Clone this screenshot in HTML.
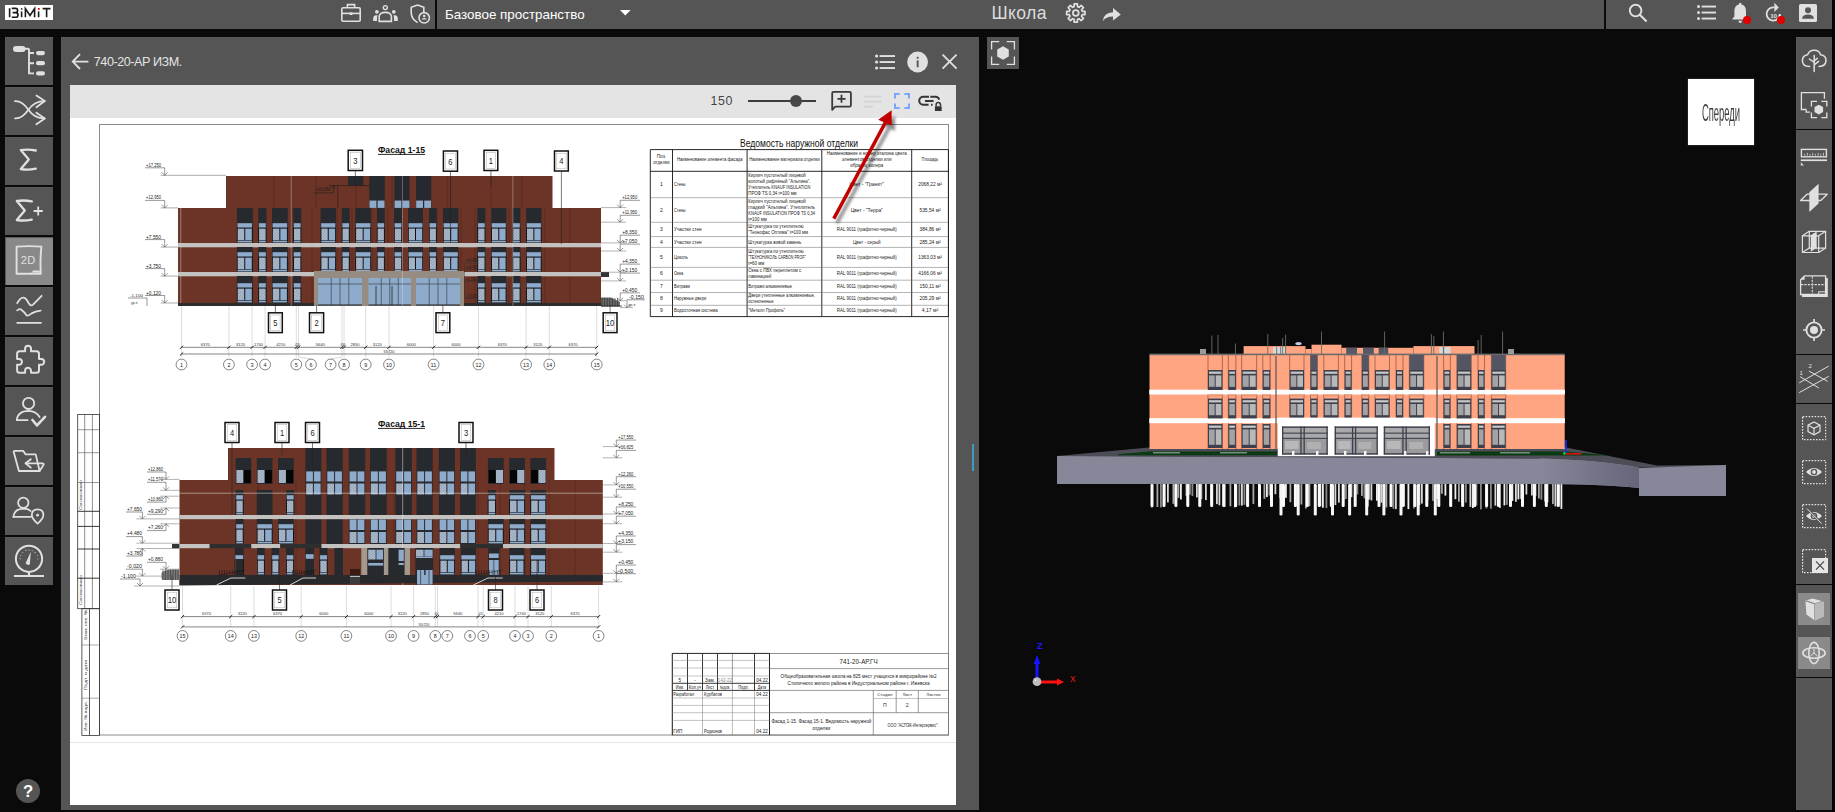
<!DOCTYPE html><html><head><meta charset="utf-8"><title>BIMIT</title><style>
*{margin:0;padding:0;box-sizing:border-box}
html,body{width:1835px;height:812px;overflow:hidden;background:#0a0a0a;font-family:"Liberation Sans",sans-serif}
.a{position:absolute}
.btn{position:absolute;left:5px;width:48px;height:48px;background:#555;box-shadow:inset 1px 1px 0 #5a5a5a}
svg.i{position:absolute;overflow:visible}
.t{position:absolute;white-space:nowrap;line-height:1}
</style></head><body><div class="a" style="left:0;top:0;width:1832px;height:29px;background:#555"></div><div class="a" style="left:1832px;top:0;width:3px;height:812px;background:#000"></div><div class="a" style="left:5px;top:5px;width:48px;height:15px;background:#fff"></div><svg class="i" style="left:5px;top:5px" width="48" height="15" viewBox="0 0 48 15" ><g fill="none" stroke="#1a1a1a" stroke-width="1.6" stroke-linecap="butt">
<path d="M4.6 3.2V12.2"/>
<path d="M6.8 3.4H10.6Q12.6 3.4 12.6 5.5Q12.6 7.6 10.4 7.6H7.6M7.6 7.6H10.8Q13 7.6 13 9.9Q13 12.2 10.8 12.2H6.8"/>
<path d="M16.6 6.4V12.2"/>
<path d="M20.4 12.2V3.6L25 10.5L29.6 3.6V12.2"/>
<path d="M33.6 6.4V12.2"/>
<path d="M37.6 3.6H45.5M41.6 3.6V12.2"/>
</g><rect x="15.9" y="3.2" width="1.5" height="1.5" fill="#1a1a1a"/><rect x="32.9" y="3" width="1.8" height="1.8" fill="#e00"/></svg><svg class="i" style="left:341px;top:3px" width="20" height="19" viewBox="0 0 20 19" ><g fill="none" stroke="#e0e0e0" stroke-width="1.6">
<rect x="0.8" y="4.8" width="18.4" height="13.4" rx="1.2"/><path d="M6.4 4.8V1.6H13.6V4.8"/><path d="M0.8 10.4H19.2"/></g>
<rect x="8.6" y="9.4" width="2.8" height="2.6" fill="#e0e0e0"/></svg><svg class="i" style="left:373px;top:5px" width="25" height="17" viewBox="0 0 25 17" ><g fill="#e0e0e0">
<circle cx="12.3" cy="2.6" r="2" fill="none" stroke="#e0e0e0" stroke-width="1.4"/>
<circle cx="3.9" cy="6.8" r="1.9"/><circle cx="20.8" cy="6.8" r="1.9"/>
<path d="M0.2 16V13.2Q0.4 10.4 3.2 10.2H4.6Q4 11.6 4 13.4V16Z"/>
<path d="M24.8 16V13.2Q24.6 10.4 21.8 10.2H20.4Q21 11.6 21 13.4V16Z"/>
<path d="M6.2 16.4V11.4Q6.8 7.4 12.3 7.4Q17.8 7.4 18.4 11.4V16.4Z" fill="none" stroke="#e0e0e0" stroke-width="1.6"/>
</g></svg><svg class="i" style="left:410px;top:4px" width="22" height="21" viewBox="0 0 22 21" ><g fill="none" stroke="#e0e0e0" stroke-width="1.6">
<path d="M7.6 0.9L13.8 3.2V8M7.6 0.9L1.2 3.2V8.6Q1.2 15 7.6 18.6"/>
<circle cx="14.2" cy="13.8" r="5.2"/></g>
<circle cx="14.2" cy="12" r="1.3" fill="#e0e0e0"/><path d="M11.6 15.6Q11.8 14 14.2 14Q16.6 14 16.8 15.6Z" fill="#e0e0e0"/></svg><div class="a" style="left:435px;top:0;width:2px;height:29px;background:#0a0a0a"></div><div class="t" style="left:445px;top:8px;font-size:13.4px;color:#fff">Базовое пространство</div><svg class="i" style="left:620px;top:10px" width="11" height="6" viewBox="0 0 11 6" ><path d="M0 0H10.6L5.3 5.6Z" fill="#fff"/></svg><div class="t" style="left:991.5px;top:5px;font-size:17.6px;letter-spacing:0.4px;color:#dcdcdc">Школа</div><svg class="i" style="left:1065px;top:3px" width="22" height="21" viewBox="0 0 22 21" ><path d="M17.17 8.28 L19.96 8.37 L19.96 11.63 L17.17 11.72 L16.52 13.29 L18.43 15.32 L16.12 17.63 L14.09 15.72 L12.52 16.37 L12.43 19.16 L9.17 19.16 L9.08 16.37 L7.51 15.72 L5.48 17.63 L3.17 15.32 L5.08 13.29 L4.43 11.72 L1.64 11.63 L1.64 8.37 L4.43 8.28 L5.08 6.71 L3.17 4.68 L5.48 2.37 L7.51 4.28 L9.08 3.63 L9.17 0.84 L12.43 0.84 L12.52 3.63 L14.09 4.28 L16.12 2.37 L18.43 4.68 L16.52 6.71Z" fill="none" stroke="#e0e0e0" stroke-width="1.7" stroke-linejoin="round"/><circle cx="10.8" cy="10" r="2.9" fill="none" stroke="#e0e0e0" stroke-width="1.7"/></svg><svg class="i" style="left:1102px;top:5px" width="20" height="17" viewBox="0 0 20 17" ><path d="M0.6 16.2Q1.6 7.6 11 7.2V3L18.8 9.6L11 15.6V11.6Q4.2 11.4 0.6 16.2Z" fill="#e0e0e0"/></svg><div class="a" style="left:1604px;top:0;width:2px;height:29px;background:#0a0a0a"></div><svg class="i" style="left:1628px;top:3px" width="20" height="20" viewBox="0 0 20 20" ><circle cx="7.6" cy="7.6" r="5.8" fill="none" stroke="#e0e0e0" stroke-width="1.9"/><path d="M11.8 11.8L18.6 18.6" stroke="#e0e0e0" stroke-width="2.1"/></svg><svg class="i" style="left:1697px;top:5px" width="20" height="16" viewBox="0 0 20 16" ><g fill="#e0e0e0"><circle cx="1.5" cy="1.5" r="1.5"/><circle cx="1.5" cy="7.5" r="1.5"/><circle cx="1.5" cy="13.5" r="1.5"/><rect x="4.6" y="0.6" width="14.4" height="1.9"/><rect x="4.6" y="6.6" width="14.4" height="1.9"/><rect x="4.6" y="12.6" width="14.4" height="1.9"/></g></svg><svg class="i" style="left:1731.7px;top:2px" width="17" height="22" viewBox="0 0 17 22" ><path d="M8.2 0.8Q9.6 0.8 9.6 2.4Q14 3.6 14 9.2V14.6L16 16.8V17.6H0.4V16.8L2.4 14.6V9.2Q2.4 3.6 6.8 2.4Q6.8 0.8 8.2 0.8Z" fill="#e0e0e0"/><path d="M6.4 18.8Q6.6 21 8.2 21Q9.8 21 10 18.8Z" fill="#e0e0e0"/></svg><svg class="i" style="left:1743px;top:16px" width="9" height="9" viewBox="0 0 9 9" ><circle cx="4" cy="4" r="4" fill="#e00000"/></svg><svg class="i" style="left:1765px;top:2px" width="17" height="21" viewBox="0 0 17 21" ><path d="M9.6 5.4H8.2A6.6 6.6 0 1 0 14.8 12" fill="none" stroke="#e0e0e0" stroke-width="1.8"/><path d="M9.4 0.8L13.8 5.4L9.4 10Z" fill="#e0e0e0"/><text x="8.6" y="15.8" font-size="6.2" font-weight="bold" font-family="Liberation Sans" fill="#e0e0e0" text-anchor="middle">10</text><rect x="14" y="12.6" width="1.6" height="1.6" fill="#fff"/></svg><svg class="i" style="left:1777px;top:16px" width="9" height="9" viewBox="0 0 9 9" ><circle cx="4" cy="4" r="4" fill="#e00000"/></svg><svg class="i" style="left:1799px;top:4px" width="18" height="18" viewBox="0 0 18 18" ><rect x="0" y="0" width="18" height="18" rx="1.6" fill="#e0e0e0"/><circle cx="9" cy="6.2" r="3" fill="#555"/><path d="M3 14.8Q3.6 10.6 9 10.6Q14.4 10.6 15 14.8Z" fill="#555"/></svg><div class="btn" style="top:37px;background:#555"></div><svg class="i" style="left:5px;top:37px" width="48" height="48" viewBox="0 0 48 48" ><rect x="8" y="9" width="12.5" height="6" rx="3" fill="#e0e0e0"/>
<path d="M20 11.8H23Q24 11.8 24 13V36.4H29M24 16H29M24 26.2H29" fill="none" stroke="#e0e0e0" stroke-width="1.9"/>
<rect x="31" y="14" width="9" height="4.2" rx="2.1" fill="#e0e0e0"/><rect x="31" y="24.1" width="9" height="4.2" rx="2.1" fill="#e0e0e0"/><rect x="31" y="34.3" width="9" height="4.2" rx="2.1" fill="#e0e0e0"/></svg><div class="btn" style="top:87px;background:#555"></div><svg class="i" style="left:5px;top:87px" width="48" height="48" viewBox="0 0 48 48" ><g fill="none" stroke="#e0e0e0" stroke-width="1.8" stroke-linecap="round" stroke-linejoin="round"><path d="M10 14.1Q17 13.6 23.4 22.7Q29.6 31.6 39.6 31.4"/><path d="M10 31.4Q17 31.8 23.4 22.7Q29.6 14 39.6 14.1"/>
<path d="M31.4 8.6L39.8 14.1L31.4 20.2"/><path d="M31.4 25.8L39.8 31.4L31.4 37.2"/></g></svg><div class="btn" style="top:137px;background:#555"></div><svg class="i" style="left:5px;top:137px" width="48" height="48" viewBox="0 0 48 48" ><path d="M30.799999999999997 13.5Q23.0 11.9 15.799999999999999 13.100000000000001L23.78 22.6L15.799999999999999 32.10000000000001Q23.0 33.300000000000004 30.799999999999997 31.700000000000006" fill="none" stroke="#e0e0e0" stroke-width="2.3" stroke-linejoin="round" stroke-linecap="round"/></svg><div class="btn" style="top:187px;background:#555"></div><svg class="i" style="left:5px;top:187px" width="48" height="48" viewBox="0 0 48 48" ><path d="M26.799999999999997 14.399999999999999Q19.0 12.799999999999999 11.799999999999999 14.0L19.78 23.5L11.799999999999999 33.0Q19.0 34.199999999999996 26.799999999999997 32.599999999999994" fill="none" stroke="#e0e0e0" stroke-width="2.3" stroke-linejoin="round" stroke-linecap="round"/><path d="M33.2 19.4V28.6M28.6 24H37.8" stroke="#e0e0e0" stroke-width="1.8"/></svg><div class="btn" style="top:237px;background:#898989"></div><svg class="i" style="left:5px;top:237px" width="48" height="48" viewBox="0 0 48 48" ><path d="M11.6 9.6Q24 8.6 36.4 9.6Q35 22 35.8 36.8H11.6Z" fill="none" stroke="#e0e0e0" stroke-width="1.9" stroke-linejoin="round"/>
<path d="M26 35.6L28.4 33.4H34.8V35.8Z" fill="#e0e0e0"/>
<text x="23.2" y="26.6" font-size="11" font-family="Liberation Sans" fill="#e0e0e0" text-anchor="middle" letter-spacing="0.4">2D</text></svg><div class="btn" style="top:287px;background:#555"></div><svg class="i" style="left:5px;top:287px" width="48" height="48" viewBox="0 0 48 48" ><g fill="none" stroke="#e0e0e0" stroke-width="1.8" stroke-linecap="round" stroke-linejoin="round"><path d="M12.2 16.2Q15.4 10.2 18.6 10.6Q21.2 11 23.6 16Q25.6 19.6 28 17.6Q32 13.6 36.6 8.8"/>
<path d="M12.2 23.4Q14.2 21.4 16 22.4Q19.6 25 21.6 28.4Q23.4 29.2 26.6 26.4Q30.4 24.2 35.6 23.6"/><path d="M12.2 35.8H36"/></g></svg><div class="btn" style="top:337px;background:#555"></div><svg class="i" style="left:5px;top:337px" width="48" height="48" viewBox="0 0 48 48" ><path d="M14.6 14.2H20.1V11.6A2.95 2.95 0 0 1 26 11.6V14.2H31.5Q34 14.2 34 16.7V21.9H36.2A2.95 2.95 0 0 1 36.2 27.8H34V33.3Q34 35.8 31.5 35.8H26V33.8A2.95 2.95 0 0 0 20.1 33.8V35.8H14.6Q12.1 35.8 12.1 33.3V27.8H14A2.95 2.95 0 0 0 14 21.9H12.1V16.7Q12.1 14.2 14.6 14.2Z" fill="none" stroke="#e0e0e0" stroke-width="2" stroke-linejoin="round"/></svg><div class="btn" style="top:387px;background:#555"></div><svg class="i" style="left:5px;top:387px" width="48" height="48" viewBox="0 0 48 48" ><g fill="none" stroke="#e0e0e0" stroke-width="1.8" stroke-linecap="round" stroke-linejoin="round"><circle cx="23.6" cy="16.4" r="5.6"/><path d="M11.8 33.2Q12.6 24 23.6 23.8Q31 24 34.6 30"/><path d="M11.8 33.2H22.6"/></g>
<path d="M27.4 33L32 38.4L40 29.8" fill="none" stroke="#e0e0e0" stroke-width="2.6" stroke-linecap="round" stroke-linejoin="round"/></svg><div class="btn" style="top:437px;background:#555"></div><svg class="i" style="left:5px;top:437px" width="48" height="48" viewBox="0 0 48 48" ><g fill="none" stroke="#e0e0e0" stroke-width="1.8" stroke-linecap="round" stroke-linejoin="round"><path d="M8.6 14.6Q8.6 13.9 9.8 13.9H18.3L20.7 17.4H30.7L34.6 34H13.9Z"/><path d="M20.6 26.3H37.6Q39.4 26.6 38.4 28L34.6 34"/><path d="M25.8 22.2L20.6 26.3L25.8 30.6"/></g></svg><div class="btn" style="top:487px;background:#555"></div><svg class="i" style="left:5px;top:487px" width="48" height="48" viewBox="0 0 48 48" ><g fill="none" stroke="#e0e0e0" stroke-width="1.8" stroke-linecap="round" stroke-linejoin="round"><circle cx="18.3" cy="15.8" r="5.2"/><path d="M8.4 29.8Q9.4 21.8 18.3 21.6Q23.4 21.6 25.6 24"/><path d="M8.4 29.8H26"/>
<path d="M32.6 36.6Q26.8 31.6 26.8 28Q26.8 22.4 32.6 22.4Q38.4 22.4 38.4 28Q38.4 31.6 32.6 36.6Z"/></g><circle cx="32.6" cy="28.2" r="1.4" fill="#e0e0e0"/></svg><div class="btn" style="top:537px;background:#555"></div><svg class="i" style="left:5px;top:537px" width="48" height="48" viewBox="0 0 48 48" ><circle cx="24" cy="21.8" r="13.1" fill="none" stroke="#e0e0e0" stroke-width="2"/>
<path d="M20.6 26.2L25.8 14.8L24.8 27.4Q22.6 28.8 20.6 26.2Z" fill="#e0e0e0"/>
<g stroke="#e0e0e0" stroke-width="1.2"><path d="M14.8 22L15.4 21.6M15.6 18.6L16.2 18.8M17.6 15.4L18 15.8M20.6 13.4L21.4 13.2M24 12.8V13.6M27.4 13.4L27 13.8M30.2 15.2L29.8 15.8M32.4 18.4L32 18.6M33.2 22L32.6 21.8"/></g>
<path d="M24 35V39M9 39H39" stroke="#e0e0e0" stroke-width="2.2"/></svg><svg class="i" style="left:16px;top:779px" width="24" height="24" viewBox="0 0 24 24" ><circle cx="12" cy="12" r="12" fill="#555"/><text x="12.2" y="17.9" font-size="16.8" font-weight="bold" font-family="Liberation Sans" fill="#fff" text-anchor="middle">?</text></svg><div class="a" style="left:61px;top:37px;width:918px;height:773px;background:#555;box-shadow:inset 1px 1px 0 #5a5a5a"></div><svg class="i" style="left:71px;top:53px" width="18" height="18" viewBox="0 0 18 18" ><path d="M17.4 8.6H2.6M9 1.2L1.8 8.6L9 16" fill="none" stroke="#e0e0e0" stroke-width="1.9"/></svg><div class="t" style="left:93.8px;top:55.6px;font-size:12.6px;letter-spacing:-0.45px;color:#e4e4e4">740-20-АР ИЗМ.</div><svg class="i" style="left:875px;top:54px" width="21" height="16" viewBox="0 0 21 16" ><g fill="#e0e0e0"><circle cx="1.6" cy="2" r="1.6"/><circle cx="1.6" cy="8" r="1.6"/><circle cx="1.6" cy="14" r="1.6"/><rect x="4.6" y="1.1" width="15.4" height="1.9"/><rect x="4.6" y="7.1" width="15.4" height="1.9"/><rect x="4.6" y="13.1" width="15.4" height="1.9"/></g></svg><svg class="i" style="left:907px;top:51px" width="22" height="22" viewBox="0 0 22 22" ><circle cx="10.6" cy="11" r="10.4" fill="#e0e0e0"/><rect x="9.7" y="9.4" width="1.9" height="6.8" fill="#555"/><rect x="9.7" y="5.8" width="1.9" height="1.9" fill="#555"/></svg><svg class="i" style="left:942px;top:54px" width="16" height="16" viewBox="0 0 16 16" ><path d="M0.6 0.6L14.6 14.6M14.6 0.6L0.6 14.6" stroke="#e0e0e0" stroke-width="1.8"/></svg><div class="a" style="left:70px;top:85px;width:886px;height:33px;background:#e4e4e4"></div><div class="t" style="left:710.6px;top:94.8px;font-size:12.4px;color:#444;letter-spacing:0.6px">150</div><div class="a" style="left:748px;top:100px;width:68px;height:2px;background:#3c3c3c"></div><div class="a" style="left:790px;top:95px;width:12px;height:12px;border-radius:6px;background:#484848"></div><svg class="i" style="left:830px;top:90px" width="24" height="22" viewBox="0 0 24 22" ><path d="M2.2 16.6V3.2Q2.2 1.9 3.5 1.9H19.6Q20.9 1.9 20.9 3.2V15.3Q20.9 16.6 19.6 16.6H5.2L2.2 19.8Z" fill="none" stroke="#3a3a3a" stroke-width="1.8" stroke-linejoin="round"/><path d="M11.5 4.8V12.8M7.4 8.8H15.6" stroke="#3a3a3a" stroke-width="1.8"/></svg><svg class="i" style="left:863px;top:95px" width="21" height="12" viewBox="0 0 21 12" ><g fill="#d2d2d2"><rect x="1" y="0.8" width="18" height="1.6"/><rect x="1" y="5.8" width="18" height="1.6"/><rect x="1" y="10.8" width="9" height="1.6"/></g></svg><svg class="i" style="left:893px;top:92px" width="18" height="18" viewBox="0 0 18 18" ><path d="M2 6.6V1.9H6.6M11.4 1.9H16V6.6M16 11.4V16H11.4M6.6 16H2V11.4" fill="none" stroke="#78a6f8" stroke-width="2"/></svg><svg class="i" style="left:918px;top:94px" width="25" height="18" viewBox="0 0 25 18" ><g fill="none" stroke="#363636" stroke-width="2"><path d="M11 2.8H5.2A3.95 3.95 0 0 0 5.2 10.7H10.6"/><path d="M7 7H15.6"/><path d="M12.3 2.8H17.2A3.95 3.95 0 0 1 21.2 5.6"/><path d="M13 10.7H14.6"/><path d="M18.1 12.3V10.8A2.2 2.2 0 0 1 22.5 10.8V12.3" stroke-width="1.5"/></g><rect x="16.9" y="12.2" width="6.8" height="4.8" rx="0.6" fill="#363636"/></svg><div class="a" style="left:70px;top:118px;width:886px;height:687px;background:#fff"></div><div class="a" style="left:70px;top:742px;width:886px;height:1px;background:#e6e6e6"></div><div class="a" style="left:972px;top:444px;width:2px;height:27px;background:#3d9cc2"></div><svg class="i" style="left:70px;top:118px" width="886" height="687" viewBox="70 118 886 687" font-family="Liberation Sans"><defs><filter id="blur"><feGaussianBlur stdDeviation="1.5"/></filter><pattern id="spk" width="3" height="3" patternUnits="userSpaceOnUse"><rect width="3" height="3" fill="#a9b9cc"/><rect x="0.4" y="0.6" width="0.9" height="0.8" fill="#6d7a8a"/><rect x="1.9" y="2" width="0.8" height="0.7" fill="#7d8a9a"/></pattern></defs><rect x="99.50" y="124.50" width="849.00" height="610.50" fill="none" stroke="#8a8a8a" stroke-width="1"/><rect x="77.70" y="414.50" width="21.80" height="194.20" fill="none" stroke="#333" stroke-width="0.8"/><line x1="84.70" y1="414.50" x2="84.70" y2="608.70" stroke="#444" stroke-width="0.6" /><line x1="92.40" y1="414.50" x2="92.40" y2="608.70" stroke="#444" stroke-width="0.6" /><line x1="77.70" y1="429.70" x2="99.50" y2="429.70" stroke="#555" stroke-width="0.6" /><line x1="77.70" y1="452.70" x2="99.50" y2="452.70" stroke="#555" stroke-width="0.6" /><line x1="77.70" y1="482.50" x2="99.50" y2="482.50" stroke="#555" stroke-width="0.6" /><line x1="77.70" y1="511.30" x2="99.50" y2="511.30" stroke="#222" stroke-width="0.9" /><line x1="77.70" y1="526.40" x2="99.50" y2="526.40" stroke="#222" stroke-width="0.9" /><line x1="77.70" y1="549.00" x2="99.50" y2="549.00" stroke="#222" stroke-width="0.9" /><line x1="77.70" y1="578.20" x2="99.50" y2="578.20" stroke="#222" stroke-width="0.9" /><rect x="81.90" y="608.70" width="17.60" height="126.70" fill="none" stroke="#333" stroke-width="0.8"/><line x1="89.50" y1="608.70" x2="89.50" y2="735.40" stroke="#333" stroke-width="0.8" /><line x1="81.90" y1="645.00" x2="99.50" y2="645.00" stroke="#555" stroke-width="0.5" /><line x1="81.90" y1="698.20" x2="99.50" y2="698.20" stroke="#555" stroke-width="0.5" /><text x="82.40" y="510.00" font-size="4.2" fill="#333" text-anchor="start" transform="rotate(-90 82.4 510)" textLength="30" lengthAdjust="spacingAndGlyphs">Согласовано</text><text x="82.40" y="605.00" font-size="4.2" fill="#333" text-anchor="start" transform="rotate(-90 82.4 605)" textLength="30" lengthAdjust="spacingAndGlyphs">Согласовано</text><text x="87.00" y="640.00" font-size="4.2" fill="#333" text-anchor="start" transform="rotate(-90 87 640)" textLength="30" lengthAdjust="spacingAndGlyphs">Взам. инв. №</text><text x="87.00" y="690.00" font-size="4.2" fill="#333" text-anchor="start" transform="rotate(-90 87 690)" textLength="30" lengthAdjust="spacingAndGlyphs">Подп. и дата</text><text x="87.00" y="731.00" font-size="4.2" fill="#333" text-anchor="start" transform="rotate(-90 87 731)" textLength="30" lengthAdjust="spacingAndGlyphs">Инв. № подл.</text><rect x="226.00" y="176.00" width="326.50" height="32.00" fill="#6b3426" /><rect x="178.00" y="208.00" width="423.00" height="98.00" fill="#6b3426" /><line x1="252.60" y1="208.00" x2="252.60" y2="303.00" stroke="#4a2218" stroke-width="0.5" /><line x1="265.70" y1="208.00" x2="265.70" y2="303.00" stroke="#4a2218" stroke-width="0.5" /><line x1="291.00" y1="208.00" x2="291.00" y2="303.00" stroke="#4a2218" stroke-width="0.5" /><line x1="299.00" y1="208.00" x2="299.00" y2="303.00" stroke="#4a2218" stroke-width="0.5" /><line x1="312.00" y1="208.00" x2="312.00" y2="303.00" stroke="#4a2218" stroke-width="0.5" /><line x1="337.00" y1="208.00" x2="337.00" y2="303.00" stroke="#4a2218" stroke-width="0.5" /><line x1="352.00" y1="208.00" x2="352.00" y2="303.00" stroke="#4a2218" stroke-width="0.5" /><line x1="372.00" y1="208.00" x2="372.00" y2="303.00" stroke="#4a2218" stroke-width="0.5" /><line x1="388.00" y1="208.00" x2="388.00" y2="303.00" stroke="#4a2218" stroke-width="0.5" /><line x1="437.00" y1="208.00" x2="437.00" y2="303.00" stroke="#4a2218" stroke-width="0.5" /><line x1="461.00" y1="208.00" x2="461.00" y2="303.00" stroke="#4a2218" stroke-width="0.5" /><line x1="475.00" y1="208.00" x2="475.00" y2="303.00" stroke="#4a2218" stroke-width="0.5" /><line x1="509.00" y1="208.00" x2="509.00" y2="303.00" stroke="#4a2218" stroke-width="0.5" /><line x1="545.00" y1="208.00" x2="545.00" y2="303.00" stroke="#4a2218" stroke-width="0.5" /><line x1="570.00" y1="208.00" x2="570.00" y2="303.00" stroke="#4a2218" stroke-width="0.5" /><line x1="274.00" y1="176.00" x2="274.00" y2="208.00" stroke="#4a2218" stroke-width="0.5" /><line x1="316.00" y1="176.00" x2="316.00" y2="208.00" stroke="#4a2218" stroke-width="0.5" /><line x1="356.00" y1="176.00" x2="356.00" y2="208.00" stroke="#4a2218" stroke-width="0.5" /><line x1="392.00" y1="176.00" x2="392.00" y2="208.00" stroke="#4a2218" stroke-width="0.5" /><line x1="447.00" y1="176.00" x2="447.00" y2="208.00" stroke="#4a2218" stroke-width="0.5" /><line x1="491.00" y1="176.00" x2="491.00" y2="208.00" stroke="#4a2218" stroke-width="0.5" /><line x1="522.00" y1="176.00" x2="522.00" y2="208.00" stroke="#4a2218" stroke-width="0.5" /><rect x="348.00" y="176.00" width="15.30" height="9.30" fill="#26292d" /><rect x="369.30" y="176.00" width="15.40" height="24.50" fill="#26292d" /><rect x="369.30" y="200.50" width="15.40" height="7.60" fill="#26292d" /><rect x="369.50" y="200.60" width="6.90" height="7.30" fill="#8eabcc" /><rect x="377.60" y="200.60" width="6.90" height="7.30" fill="#8eabcc" /><rect x="394.40" y="176.00" width="15.20" height="24.50" fill="#26292d" /><rect x="394.40" y="200.50" width="15.20" height="7.60" fill="#26292d" /><rect x="394.60" y="200.60" width="6.80" height="7.30" fill="#8eabcc" /><rect x="402.60" y="200.60" width="6.80" height="7.30" fill="#8eabcc" /><rect x="416.00" y="176.00" width="15.20" height="24.50" fill="#26292d" /><rect x="416.00" y="200.50" width="15.20" height="7.60" fill="#26292d" /><rect x="416.20" y="200.60" width="6.80" height="7.30" fill="#8eabcc" /><rect x="424.20" y="200.60" width="6.80" height="7.30" fill="#8eabcc" /><line x1="329.40" y1="185.60" x2="369.80" y2="185.60" stroke="#1a1a1a" stroke-width="0.6" /><line x1="333.60" y1="185.60" x2="333.60" y2="192.90" stroke="#1a1a1a" stroke-width="0.5" /><line x1="314.10" y1="192.90" x2="333.60" y2="192.90" stroke="#1a1a1a" stroke-width="0.5" /><path d="M331.6 188.4L333.6 185.6L335.6 188.4" fill="none" stroke="#1a1a1a" stroke-width="0.5"/><line x1="337.80" y1="185.60" x2="337.80" y2="208.00" stroke="#2a150f" stroke-width="0.6" /><text x="315.50" y="191.30" font-size="4.6" fill="#1a1a1a" text-anchor="start" textLength="15" lengthAdjust="spacingAndGlyphs">+16,950</text><line x1="180.80" y1="208.00" x2="180.80" y2="306.00" stroke="#a08a84" stroke-width="0.9" /><rect x="178.00" y="243.00" width="423.00" height="4.30" fill="#c3c2c0" /><rect x="178.00" y="272.00" width="136.00" height="4.30" fill="#c3c2c0" /><rect x="464.00" y="272.00" width="137.00" height="4.30" fill="#c3c2c0" /><rect x="601.00" y="272.00" width="8.00" height="5.00" fill="#333" /><rect x="178.00" y="303.00" width="423.00" height="3.00" fill="#2c2c2c" /><rect x="236.90" y="208.00" width="15.70" height="35.00" fill="#26292d" /><rect x="236.90" y="227.50" width="15.70" height="15.50" fill="#101214" /><rect x="237.50" y="223.20" width="14.50" height="4.30" fill="#8eabcc" /><rect x="237.50" y="240.70" width="14.50" height="1.80" fill="#8eabcc" /><rect x="237.70" y="228.60" width="6.55" height="11.60" fill="url(#spk)" /><rect x="245.25" y="228.60" width="6.55" height="11.60" fill="#8eabcc" /><rect x="258.30" y="208.00" width="8.10" height="35.00" fill="#26292d" /><rect x="258.30" y="227.50" width="8.10" height="15.50" fill="#101214" /><rect x="258.90" y="223.20" width="6.90" height="4.30" fill="#8eabcc" /><rect x="258.90" y="240.70" width="6.90" height="1.80" fill="#8eabcc" /><rect x="259.10" y="228.60" width="6.50" height="11.60" fill="url(#spk)" /><rect x="272.00" y="208.00" width="15.70" height="35.00" fill="#26292d" /><rect x="272.00" y="227.50" width="15.70" height="15.50" fill="#101214" /><rect x="272.60" y="223.20" width="14.50" height="4.30" fill="#8eabcc" /><rect x="272.60" y="240.70" width="14.50" height="1.80" fill="#8eabcc" /><rect x="272.80" y="228.60" width="6.55" height="11.60" fill="url(#spk)" /><rect x="280.35" y="228.60" width="6.55" height="11.60" fill="#8eabcc" /><rect x="293.20" y="208.00" width="8.00" height="35.00" fill="#26292d" /><rect x="293.20" y="227.50" width="8.00" height="15.50" fill="#101214" /><rect x="293.80" y="223.20" width="6.80" height="4.30" fill="#8eabcc" /><rect x="293.80" y="240.70" width="6.80" height="1.80" fill="#8eabcc" /><rect x="294.00" y="228.60" width="6.40" height="11.60" fill="url(#spk)" /><rect x="320.60" y="208.00" width="15.30" height="35.00" fill="#26292d" /><rect x="320.60" y="227.50" width="15.30" height="15.50" fill="#101214" /><rect x="321.20" y="223.20" width="14.10" height="4.30" fill="#8eabcc" /><rect x="321.20" y="240.70" width="14.10" height="1.80" fill="#8eabcc" /><rect x="321.40" y="228.60" width="6.35" height="11.60" fill="url(#spk)" /><rect x="328.75" y="228.60" width="6.35" height="11.60" fill="#8eabcc" /><rect x="341.80" y="208.00" width="7.80" height="35.00" fill="#26292d" /><rect x="341.80" y="227.50" width="7.80" height="15.50" fill="#101214" /><rect x="342.40" y="223.20" width="6.60" height="4.30" fill="#8eabcc" /><rect x="342.40" y="240.70" width="6.60" height="1.80" fill="#8eabcc" /><rect x="342.60" y="228.60" width="6.20" height="11.60" fill="url(#spk)" /><rect x="355.30" y="208.00" width="15.70" height="35.00" fill="#26292d" /><rect x="355.30" y="227.50" width="15.70" height="15.50" fill="#101214" /><rect x="355.90" y="223.20" width="14.50" height="4.30" fill="#8eabcc" /><rect x="355.90" y="240.70" width="14.50" height="1.80" fill="#8eabcc" /><rect x="356.10" y="228.60" width="6.55" height="11.60" fill="url(#spk)" /><rect x="363.65" y="228.60" width="6.55" height="11.60" fill="#8eabcc" /><rect x="376.90" y="208.00" width="7.80" height="35.00" fill="#26292d" /><rect x="376.90" y="227.50" width="7.80" height="15.50" fill="#101214" /><rect x="377.50" y="223.20" width="6.60" height="4.30" fill="#8eabcc" /><rect x="377.50" y="240.70" width="6.60" height="1.80" fill="#8eabcc" /><rect x="377.70" y="228.60" width="6.20" height="11.60" fill="url(#spk)" /><rect x="394.00" y="208.00" width="8.00" height="35.00" fill="#26292d" /><rect x="394.00" y="227.50" width="8.00" height="15.50" fill="#101214" /><rect x="394.60" y="223.20" width="6.80" height="4.30" fill="#8eabcc" /><rect x="394.60" y="240.70" width="6.80" height="1.80" fill="#8eabcc" /><rect x="394.80" y="228.60" width="6.40" height="11.60" fill="url(#spk)" /><rect x="408.00" y="208.00" width="15.00" height="35.00" fill="#26292d" /><rect x="408.00" y="227.50" width="15.00" height="15.50" fill="#101214" /><rect x="408.60" y="223.20" width="13.80" height="4.30" fill="#8eabcc" /><rect x="408.60" y="240.70" width="13.80" height="1.80" fill="#8eabcc" /><rect x="408.80" y="228.60" width="6.20" height="11.60" fill="url(#spk)" /><rect x="416.00" y="228.60" width="6.20" height="11.60" fill="#8eabcc" /><rect x="429.00" y="208.00" width="7.70" height="35.00" fill="#26292d" /><rect x="429.00" y="227.50" width="7.70" height="15.50" fill="#101214" /><rect x="429.60" y="223.20" width="6.50" height="4.30" fill="#8eabcc" /><rect x="429.60" y="240.70" width="6.50" height="1.80" fill="#8eabcc" /><rect x="429.80" y="228.60" width="6.10" height="11.60" fill="url(#spk)" /><rect x="443.00" y="208.00" width="15.40" height="35.00" fill="#26292d" /><rect x="443.00" y="227.50" width="15.40" height="15.50" fill="#101214" /><rect x="443.60" y="223.20" width="14.20" height="4.30" fill="#8eabcc" /><rect x="443.60" y="240.70" width="14.20" height="1.80" fill="#8eabcc" /><rect x="443.80" y="228.60" width="6.40" height="11.60" fill="url(#spk)" /><rect x="451.20" y="228.60" width="6.40" height="11.60" fill="#8eabcc" /><rect x="477.40" y="208.00" width="7.90" height="35.00" fill="#26292d" /><rect x="477.40" y="227.50" width="7.90" height="15.50" fill="#101214" /><rect x="478.00" y="223.20" width="6.70" height="4.30" fill="#8eabcc" /><rect x="478.00" y="240.70" width="6.70" height="1.80" fill="#8eabcc" /><rect x="478.20" y="228.60" width="6.30" height="11.60" fill="url(#spk)" /><rect x="491.20" y="208.00" width="15.20" height="35.00" fill="#26292d" /><rect x="491.20" y="227.50" width="15.20" height="15.50" fill="#101214" /><rect x="491.80" y="223.20" width="14.00" height="4.30" fill="#8eabcc" /><rect x="491.80" y="240.70" width="14.00" height="1.80" fill="#8eabcc" /><rect x="492.00" y="228.60" width="6.30" height="11.60" fill="url(#spk)" /><rect x="499.30" y="228.60" width="6.30" height="11.60" fill="#8eabcc" /><rect x="512.50" y="208.00" width="7.90" height="35.00" fill="#26292d" /><rect x="512.50" y="227.50" width="7.90" height="15.50" fill="#101214" /><rect x="513.10" y="223.20" width="6.70" height="4.30" fill="#8eabcc" /><rect x="513.10" y="240.70" width="6.70" height="1.80" fill="#8eabcc" /><rect x="513.30" y="228.60" width="6.30" height="11.60" fill="url(#spk)" /><rect x="526.20" y="208.00" width="15.30" height="35.00" fill="#26292d" /><rect x="526.20" y="227.50" width="15.30" height="15.50" fill="#101214" /><rect x="526.80" y="223.20" width="14.10" height="4.30" fill="#8eabcc" /><rect x="526.80" y="240.70" width="14.10" height="1.80" fill="#8eabcc" /><rect x="527.00" y="228.60" width="6.35" height="11.60" fill="url(#spk)" /><rect x="534.35" y="228.60" width="6.35" height="11.60" fill="#8eabcc" /><rect x="236.90" y="247.00" width="15.70" height="25.00" fill="#26292d" /><rect x="236.90" y="256.50" width="15.70" height="15.50" fill="#101214" /><rect x="237.50" y="252.20" width="14.50" height="4.30" fill="#8eabcc" /><rect x="237.50" y="269.70" width="14.50" height="1.80" fill="#8eabcc" /><rect x="237.70" y="257.60" width="6.55" height="11.60" fill="url(#spk)" /><rect x="245.25" y="257.60" width="6.55" height="11.60" fill="#8eabcc" /><rect x="258.30" y="247.00" width="8.10" height="25.00" fill="#26292d" /><rect x="258.30" y="256.50" width="8.10" height="15.50" fill="#101214" /><rect x="258.90" y="252.20" width="6.90" height="4.30" fill="#8eabcc" /><rect x="258.90" y="269.70" width="6.90" height="1.80" fill="#8eabcc" /><rect x="259.10" y="257.60" width="6.50" height="11.60" fill="url(#spk)" /><rect x="272.00" y="247.00" width="15.70" height="25.00" fill="#26292d" /><rect x="272.00" y="256.50" width="15.70" height="15.50" fill="#101214" /><rect x="272.60" y="252.20" width="14.50" height="4.30" fill="#8eabcc" /><rect x="272.60" y="269.70" width="14.50" height="1.80" fill="#8eabcc" /><rect x="272.80" y="257.60" width="6.55" height="11.60" fill="url(#spk)" /><rect x="280.35" y="257.60" width="6.55" height="11.60" fill="#8eabcc" /><rect x="293.20" y="247.00" width="8.00" height="25.00" fill="#26292d" /><rect x="293.20" y="256.50" width="8.00" height="15.50" fill="#101214" /><rect x="293.80" y="252.20" width="6.80" height="4.30" fill="#8eabcc" /><rect x="293.80" y="269.70" width="6.80" height="1.80" fill="#8eabcc" /><rect x="294.00" y="257.60" width="6.40" height="11.60" fill="url(#spk)" /><rect x="320.60" y="247.00" width="15.30" height="25.00" fill="#26292d" /><rect x="320.60" y="256.50" width="15.30" height="15.50" fill="#101214" /><rect x="321.20" y="252.20" width="14.10" height="4.30" fill="#8eabcc" /><rect x="321.20" y="269.70" width="14.10" height="1.80" fill="#8eabcc" /><rect x="321.40" y="257.60" width="6.35" height="11.60" fill="url(#spk)" /><rect x="328.75" y="257.60" width="6.35" height="11.60" fill="#8eabcc" /><rect x="341.80" y="247.00" width="7.80" height="25.00" fill="#26292d" /><rect x="341.80" y="256.50" width="7.80" height="15.50" fill="#101214" /><rect x="342.40" y="252.20" width="6.60" height="4.30" fill="#8eabcc" /><rect x="342.40" y="269.70" width="6.60" height="1.80" fill="#8eabcc" /><rect x="342.60" y="257.60" width="6.20" height="11.60" fill="url(#spk)" /><rect x="355.30" y="247.00" width="15.70" height="25.00" fill="#26292d" /><rect x="355.30" y="256.50" width="15.70" height="15.50" fill="#101214" /><rect x="355.90" y="252.20" width="14.50" height="4.30" fill="#8eabcc" /><rect x="355.90" y="269.70" width="14.50" height="1.80" fill="#8eabcc" /><rect x="356.10" y="257.60" width="6.55" height="11.60" fill="url(#spk)" /><rect x="363.65" y="257.60" width="6.55" height="11.60" fill="#8eabcc" /><rect x="376.90" y="247.00" width="7.80" height="25.00" fill="#26292d" /><rect x="376.90" y="256.50" width="7.80" height="15.50" fill="#101214" /><rect x="377.50" y="252.20" width="6.60" height="4.30" fill="#8eabcc" /><rect x="377.50" y="269.70" width="6.60" height="1.80" fill="#8eabcc" /><rect x="377.70" y="257.60" width="6.20" height="11.60" fill="url(#spk)" /><rect x="394.00" y="247.00" width="8.00" height="25.00" fill="#26292d" /><rect x="394.00" y="256.50" width="8.00" height="15.50" fill="#101214" /><rect x="394.60" y="252.20" width="6.80" height="4.30" fill="#8eabcc" /><rect x="394.60" y="269.70" width="6.80" height="1.80" fill="#8eabcc" /><rect x="394.80" y="257.60" width="6.40" height="11.60" fill="url(#spk)" /><rect x="408.00" y="247.00" width="15.00" height="25.00" fill="#26292d" /><rect x="408.00" y="256.50" width="15.00" height="15.50" fill="#101214" /><rect x="408.60" y="252.20" width="13.80" height="4.30" fill="#8eabcc" /><rect x="408.60" y="269.70" width="13.80" height="1.80" fill="#8eabcc" /><rect x="408.80" y="257.60" width="6.20" height="11.60" fill="url(#spk)" /><rect x="416.00" y="257.60" width="6.20" height="11.60" fill="#8eabcc" /><rect x="429.00" y="247.00" width="7.70" height="25.00" fill="#26292d" /><rect x="429.00" y="256.50" width="7.70" height="15.50" fill="#101214" /><rect x="429.60" y="252.20" width="6.50" height="4.30" fill="#8eabcc" /><rect x="429.60" y="269.70" width="6.50" height="1.80" fill="#8eabcc" /><rect x="429.80" y="257.60" width="6.10" height="11.60" fill="url(#spk)" /><rect x="443.00" y="247.00" width="15.40" height="25.00" fill="#26292d" /><rect x="443.00" y="256.50" width="15.40" height="15.50" fill="#101214" /><rect x="443.60" y="252.20" width="14.20" height="4.30" fill="#8eabcc" /><rect x="443.60" y="269.70" width="14.20" height="1.80" fill="#8eabcc" /><rect x="443.80" y="257.60" width="6.40" height="11.60" fill="url(#spk)" /><rect x="451.20" y="257.60" width="6.40" height="11.60" fill="#8eabcc" /><rect x="477.40" y="247.00" width="7.90" height="25.00" fill="#26292d" /><rect x="477.40" y="256.50" width="7.90" height="15.50" fill="#101214" /><rect x="478.00" y="252.20" width="6.70" height="4.30" fill="#8eabcc" /><rect x="478.00" y="269.70" width="6.70" height="1.80" fill="#8eabcc" /><rect x="478.20" y="257.60" width="6.30" height="11.60" fill="url(#spk)" /><rect x="491.20" y="247.00" width="15.20" height="25.00" fill="#26292d" /><rect x="491.20" y="256.50" width="15.20" height="15.50" fill="#101214" /><rect x="491.80" y="252.20" width="14.00" height="4.30" fill="#8eabcc" /><rect x="491.80" y="269.70" width="14.00" height="1.80" fill="#8eabcc" /><rect x="492.00" y="257.60" width="6.30" height="11.60" fill="url(#spk)" /><rect x="499.30" y="257.60" width="6.30" height="11.60" fill="#8eabcc" /><rect x="512.50" y="247.00" width="7.90" height="25.00" fill="#26292d" /><rect x="512.50" y="256.50" width="7.90" height="15.50" fill="#101214" /><rect x="513.10" y="252.20" width="6.70" height="4.30" fill="#8eabcc" /><rect x="513.10" y="269.70" width="6.70" height="1.80" fill="#8eabcc" /><rect x="513.30" y="257.60" width="6.30" height="11.60" fill="url(#spk)" /><rect x="526.20" y="247.00" width="15.30" height="25.00" fill="#26292d" /><rect x="526.20" y="256.50" width="15.30" height="15.50" fill="#101214" /><rect x="526.80" y="252.20" width="14.10" height="4.30" fill="#8eabcc" /><rect x="526.80" y="269.70" width="14.10" height="1.80" fill="#8eabcc" /><rect x="527.00" y="257.60" width="6.35" height="11.60" fill="url(#spk)" /><rect x="534.35" y="257.60" width="6.35" height="11.60" fill="#8eabcc" /><rect x="236.90" y="276.00" width="15.70" height="27.00" fill="#26292d" /><rect x="236.90" y="287.50" width="15.70" height="15.50" fill="#101214" /><rect x="237.50" y="283.20" width="14.50" height="4.30" fill="#8eabcc" /><rect x="237.50" y="300.70" width="14.50" height="1.80" fill="#8eabcc" /><rect x="237.70" y="288.60" width="6.55" height="11.60" fill="url(#spk)" /><rect x="245.25" y="288.60" width="6.55" height="11.60" fill="#8eabcc" /><rect x="258.30" y="276.00" width="8.10" height="27.00" fill="#26292d" /><rect x="258.30" y="287.50" width="8.10" height="15.50" fill="#101214" /><rect x="258.90" y="283.20" width="6.90" height="4.30" fill="#8eabcc" /><rect x="258.90" y="300.70" width="6.90" height="1.80" fill="#8eabcc" /><rect x="259.10" y="288.60" width="6.50" height="11.60" fill="url(#spk)" /><rect x="272.00" y="276.00" width="15.70" height="27.00" fill="#26292d" /><rect x="272.00" y="287.50" width="15.70" height="15.50" fill="#101214" /><rect x="272.60" y="283.20" width="14.50" height="4.30" fill="#8eabcc" /><rect x="272.60" y="300.70" width="14.50" height="1.80" fill="#8eabcc" /><rect x="272.80" y="288.60" width="6.55" height="11.60" fill="url(#spk)" /><rect x="280.35" y="288.60" width="6.55" height="11.60" fill="#8eabcc" /><rect x="293.20" y="276.00" width="8.00" height="27.00" fill="#26292d" /><rect x="293.20" y="287.50" width="8.00" height="15.50" fill="#101214" /><rect x="293.80" y="283.20" width="6.80" height="4.30" fill="#8eabcc" /><rect x="293.80" y="300.70" width="6.80" height="1.80" fill="#8eabcc" /><rect x="294.00" y="288.60" width="6.40" height="11.60" fill="url(#spk)" /><rect x="477.40" y="276.00" width="7.90" height="27.00" fill="#26292d" /><rect x="477.40" y="287.50" width="7.90" height="15.50" fill="#101214" /><rect x="478.00" y="283.20" width="6.70" height="4.30" fill="#8eabcc" /><rect x="478.00" y="300.70" width="6.70" height="1.80" fill="#8eabcc" /><rect x="478.20" y="288.60" width="6.30" height="11.60" fill="url(#spk)" /><rect x="491.20" y="276.00" width="15.20" height="27.00" fill="#26292d" /><rect x="491.20" y="287.50" width="15.20" height="15.50" fill="#101214" /><rect x="491.80" y="283.20" width="14.00" height="4.30" fill="#8eabcc" /><rect x="491.80" y="300.70" width="14.00" height="1.80" fill="#8eabcc" /><rect x="492.00" y="288.60" width="6.30" height="11.60" fill="url(#spk)" /><rect x="499.30" y="288.60" width="6.30" height="11.60" fill="#8eabcc" /><rect x="512.50" y="276.00" width="7.90" height="27.00" fill="#26292d" /><rect x="512.50" y="287.50" width="7.90" height="15.50" fill="#101214" /><rect x="513.10" y="283.20" width="6.70" height="4.30" fill="#8eabcc" /><rect x="513.10" y="300.70" width="6.70" height="1.80" fill="#8eabcc" /><rect x="513.30" y="288.60" width="6.30" height="11.60" fill="url(#spk)" /><rect x="526.20" y="276.00" width="15.30" height="27.00" fill="#26292d" /><rect x="526.20" y="287.50" width="15.30" height="15.50" fill="#101214" /><rect x="526.80" y="283.20" width="14.10" height="4.30" fill="#8eabcc" /><rect x="526.80" y="300.70" width="14.10" height="1.80" fill="#8eabcc" /><rect x="527.00" y="288.60" width="6.35" height="11.60" fill="url(#spk)" /><rect x="534.35" y="288.60" width="6.35" height="11.60" fill="#8eabcc" /><rect x="314.00" y="271.00" width="150.00" height="35.00" fill="#968c82" /><rect x="318.00" y="278.00" width="44.00" height="27.00" fill="#8eabcc" /><line x1="318.00" y1="284.00" x2="362.00" y2="284.00" stroke="#333" stroke-width="0.6" /><line x1="331.20" y1="278.00" x2="331.20" y2="305.00" stroke="#333" stroke-width="0.6" /><line x1="340.00" y1="278.00" x2="340.00" y2="305.00" stroke="#333" stroke-width="0.6" /><line x1="348.80" y1="278.00" x2="348.80" y2="305.00" stroke="#333" stroke-width="0.6" /><line x1="318.00" y1="305.00" x2="362.00" y2="305.00" stroke="#222" stroke-width="1" /><rect x="368.50" y="278.00" width="42.50" height="27.00" fill="#8eabcc" /><line x1="368.50" y1="284.00" x2="411.00" y2="284.00" stroke="#333" stroke-width="0.6" /><line x1="381.25" y1="278.00" x2="381.25" y2="305.00" stroke="#333" stroke-width="0.6" /><line x1="389.75" y1="278.00" x2="389.75" y2="305.00" stroke="#333" stroke-width="0.6" /><line x1="398.25" y1="278.00" x2="398.25" y2="305.00" stroke="#333" stroke-width="0.6" /><line x1="368.50" y1="305.00" x2="411.00" y2="305.00" stroke="#222" stroke-width="1" /><rect x="416.00" y="278.00" width="44.00" height="27.00" fill="#8eabcc" /><line x1="416.00" y1="284.00" x2="460.00" y2="284.00" stroke="#333" stroke-width="0.6" /><line x1="429.20" y1="278.00" x2="429.20" y2="305.00" stroke="#333" stroke-width="0.6" /><line x1="438.00" y1="278.00" x2="438.00" y2="305.00" stroke="#333" stroke-width="0.6" /><line x1="446.80" y1="278.00" x2="446.80" y2="305.00" stroke="#333" stroke-width="0.6" /><line x1="416.00" y1="305.00" x2="460.00" y2="305.00" stroke="#222" stroke-width="1" /><line x1="376.00" y1="286.00" x2="376.00" y2="305.00" stroke="#222" stroke-width="0.8" /><line x1="392.00" y1="286.00" x2="392.00" y2="305.00" stroke="#222" stroke-width="0.8" /><path d="M601 297.5H611L620 302V306.5H601Z" fill="#6a6a6a"/><line x1="602.00" y1="298.00" x2="602.00" y2="306.50" stroke="#222" stroke-width="0.6" /><line x1="604.60" y1="298.00" x2="604.60" y2="306.50" stroke="#222" stroke-width="0.6" /><line x1="607.20" y1="298.00" x2="607.20" y2="306.50" stroke="#222" stroke-width="0.6" /><line x1="609.80" y1="298.00" x2="609.80" y2="306.50" stroke="#222" stroke-width="0.6" /><line x1="612.40" y1="298.00" x2="612.40" y2="306.50" stroke="#222" stroke-width="0.6" /><line x1="615.00" y1="298.00" x2="615.00" y2="306.50" stroke="#222" stroke-width="0.6" /><line x1="617.60" y1="298.00" x2="617.60" y2="306.50" stroke="#222" stroke-width="0.6" /><line x1="601.00" y1="306.00" x2="622.00" y2="306.00" stroke="#222" stroke-width="0.8" /><line x1="291.20" y1="176.00" x2="291.20" y2="310.00" stroke="#e8e8e8" stroke-width="0.5" opacity="0.75"/><line x1="402.70" y1="176.00" x2="402.70" y2="310.00" stroke="#e8e8e8" stroke-width="0.5" opacity="0.75"/><line x1="512.90" y1="176.00" x2="512.90" y2="310.00" stroke="#e8e8e8" stroke-width="0.5" opacity="0.75"/><line x1="464.50" y1="263.00" x2="478.00" y2="263.00" stroke="#333" stroke-width="0.45" /><text x="466.00" y="262.00" font-size="4.6" fill="#222" text-anchor="start" textLength="10.5" lengthAdjust="spacingAndGlyphs">+4,45</text><line x1="464.50" y1="269.50" x2="478.00" y2="269.50" stroke="#333" stroke-width="0.45" /><text x="466.00" y="268.50" font-size="4.6" fill="#222" text-anchor="start" textLength="10.5" lengthAdjust="spacingAndGlyphs">+3,45</text><line x1="464.50" y1="281.50" x2="478.00" y2="281.50" stroke="#333" stroke-width="0.45" /><text x="466.00" y="280.50" font-size="4.6" fill="#222" text-anchor="start" textLength="10.5" lengthAdjust="spacingAndGlyphs">+1,300</text><line x1="464.50" y1="298.50" x2="478.00" y2="298.50" stroke="#333" stroke-width="0.45" /><text x="466.00" y="297.50" font-size="4.6" fill="#222" text-anchor="start" textLength="10.5" lengthAdjust="spacingAndGlyphs">-0,300</text><line x1="464.50" y1="263.00" x2="464.50" y2="299.00" stroke="#333" stroke-width="0.45" /><text x="378.00" y="152.50" font-size="8.6" fill="#111" text-anchor="start" font-weight="bold" textLength="47" lengthAdjust="spacingAndGlyphs">Фасад 1-15</text><line x1="378.00" y1="154.40" x2="425.00" y2="154.40" stroke="#111" stroke-width="0.9" /><rect x="348.20" y="150.30" width="14.30" height="20.20" fill="#fff" stroke="#111" stroke-width="1.5"/><rect x="350.40" y="152.50" width="9.90" height="15.80" fill="none" stroke="#aaa" stroke-width="0.5"/><text x="355.35" y="163.80" font-size="9" fill="#1a1a1a" text-anchor="middle" textLength="4.2" lengthAdjust="spacingAndGlyphs">3</text><line x1="355.35" y1="170.50" x2="355.35" y2="185.00" stroke="#222" stroke-width="0.6" /><rect x="443.40" y="151.00" width="14.10" height="20.20" fill="#fff" stroke="#111" stroke-width="1.5"/><rect x="445.60" y="153.20" width="9.70" height="15.80" fill="none" stroke="#aaa" stroke-width="0.5"/><text x="450.45" y="164.50" font-size="9" fill="#1a1a1a" text-anchor="middle" textLength="4.2" lengthAdjust="spacingAndGlyphs">6</text><line x1="450.45" y1="171.20" x2="450.45" y2="243.00" stroke="#222" stroke-width="0.6" /><rect x="484.00" y="150.30" width="13.80" height="20.20" fill="#fff" stroke="#111" stroke-width="1.5"/><rect x="486.20" y="152.50" width="9.40" height="15.80" fill="none" stroke="#aaa" stroke-width="0.5"/><text x="490.90" y="163.80" font-size="9" fill="#1a1a1a" text-anchor="middle" textLength="4.2" lengthAdjust="spacingAndGlyphs">1</text><line x1="490.90" y1="170.50" x2="490.90" y2="186.00" stroke="#222" stroke-width="0.6" /><rect x="554.50" y="151.00" width="13.80" height="20.00" fill="#fff" stroke="#111" stroke-width="1.5"/><rect x="556.70" y="153.20" width="9.40" height="15.60" fill="none" stroke="#aaa" stroke-width="0.5"/><text x="561.40" y="164.40" font-size="9" fill="#1a1a1a" text-anchor="middle" textLength="4.2" lengthAdjust="spacingAndGlyphs">4</text><line x1="561.40" y1="171.00" x2="561.40" y2="244.00" stroke="#222" stroke-width="0.6" /><rect x="268.50" y="312.80" width="13.80" height="19.80" fill="#fff" stroke="#111" stroke-width="1.5"/><rect x="270.70" y="315.00" width="9.40" height="15.40" fill="none" stroke="#aaa" stroke-width="0.5"/><text x="275.40" y="326.10" font-size="9" fill="#1a1a1a" text-anchor="middle" textLength="4.2" lengthAdjust="spacingAndGlyphs">5</text><line x1="275.40" y1="312.80" x2="275.40" y2="303.00" stroke="#222" stroke-width="0.6" /><rect x="309.50" y="312.80" width="14.10" height="19.80" fill="#fff" stroke="#111" stroke-width="1.5"/><rect x="311.70" y="315.00" width="9.70" height="15.40" fill="none" stroke="#aaa" stroke-width="0.5"/><text x="316.55" y="326.10" font-size="9" fill="#1a1a1a" text-anchor="middle" textLength="4.2" lengthAdjust="spacingAndGlyphs">2</text><line x1="316.55" y1="312.80" x2="316.55" y2="305.00" stroke="#222" stroke-width="0.6" /><rect x="436.00" y="312.80" width="13.80" height="19.80" fill="#fff" stroke="#111" stroke-width="1.5"/><rect x="438.20" y="315.00" width="9.40" height="15.40" fill="none" stroke="#aaa" stroke-width="0.5"/><text x="442.90" y="326.10" font-size="9" fill="#1a1a1a" text-anchor="middle" textLength="4.2" lengthAdjust="spacingAndGlyphs">7</text><line x1="442.90" y1="312.80" x2="442.90" y2="305.00" stroke="#222" stroke-width="0.6" /><rect x="603.20" y="312.80" width="13.80" height="19.80" fill="#fff" stroke="#111" stroke-width="1.5"/><rect x="605.40" y="315.00" width="9.40" height="15.40" fill="none" stroke="#aaa" stroke-width="0.5"/><text x="610.10" y="326.10" font-size="9" fill="#1a1a1a" text-anchor="middle" textLength="8.6" lengthAdjust="spacingAndGlyphs">10</text><line x1="610.10" y1="312.80" x2="610.10" y2="305.00" stroke="#222" stroke-width="0.6" /><line x1="145.00" y1="167.80" x2="164.70" y2="167.80" stroke="#333" stroke-width="0.5" /><line x1="164.70" y1="167.80" x2="164.70" y2="175.30" stroke="#333" stroke-width="0.5" /><path d="M161.7 172.3L164.7 175.3L167.7 172.3" fill="none" stroke="#333" stroke-width="0.5"/><line x1="160.70" y1="175.30" x2="226.00" y2="175.30" stroke="#555" stroke-width="0.5" /><text x="146.00" y="166.80" font-size="5" fill="#222" text-anchor="start" textLength="15" lengthAdjust="spacingAndGlyphs">+17,250</text><line x1="145.00" y1="200.40" x2="164.70" y2="200.40" stroke="#333" stroke-width="0.5" /><line x1="164.70" y1="200.40" x2="164.70" y2="207.90" stroke="#333" stroke-width="0.5" /><path d="M161.7 204.9L164.7 207.9L167.7 204.9" fill="none" stroke="#333" stroke-width="0.5"/><line x1="160.70" y1="207.90" x2="178.00" y2="207.90" stroke="#555" stroke-width="0.5" /><text x="146.00" y="199.40" font-size="5" fill="#222" text-anchor="start" textLength="15" lengthAdjust="spacingAndGlyphs">+12,950</text><line x1="145.00" y1="239.60" x2="164.70" y2="239.60" stroke="#333" stroke-width="0.5" /><line x1="164.70" y1="239.60" x2="164.70" y2="247.10" stroke="#333" stroke-width="0.5" /><path d="M161.7 244.1L164.7 247.1L167.7 244.1" fill="none" stroke="#333" stroke-width="0.5"/><line x1="160.70" y1="247.10" x2="178.00" y2="247.10" stroke="#555" stroke-width="0.5" /><text x="146.00" y="238.60" font-size="5" fill="#222" text-anchor="start" textLength="15" lengthAdjust="spacingAndGlyphs">+7,550</text><line x1="145.00" y1="268.60" x2="164.70" y2="268.60" stroke="#333" stroke-width="0.5" /><line x1="164.70" y1="268.60" x2="164.70" y2="276.10" stroke="#333" stroke-width="0.5" /><path d="M161.7 273.1L164.7 276.1L167.7 273.1" fill="none" stroke="#333" stroke-width="0.5"/><line x1="160.70" y1="276.10" x2="178.00" y2="276.10" stroke="#555" stroke-width="0.5" /><text x="146.00" y="267.60" font-size="5" fill="#222" text-anchor="start" textLength="15" lengthAdjust="spacingAndGlyphs">+3,750</text><line x1="145.00" y1="295.50" x2="164.70" y2="295.50" stroke="#333" stroke-width="0.5" /><line x1="164.70" y1="295.50" x2="164.70" y2="303.00" stroke="#333" stroke-width="0.5" /><path d="M161.7 300L164.7 303L167.7 300" fill="none" stroke="#333" stroke-width="0.5"/><line x1="160.70" y1="303.00" x2="178.00" y2="303.00" stroke="#555" stroke-width="0.5" /><text x="146.00" y="294.50" font-size="5" fill="#222" text-anchor="start" textLength="15" lengthAdjust="spacingAndGlyphs">+0,120</text><line x1="128.00" y1="298.00" x2="147.00" y2="298.00" stroke="#333" stroke-width="0.5" /><text x="130.00" y="297.00" font-size="4.4" fill="#333" text-anchor="start" textLength="13" lengthAdjust="spacingAndGlyphs">-1,100</text><line x1="147.00" y1="298.00" x2="147.00" y2="306.00" stroke="#333" stroke-width="0.5" /><text x="131.00" y="304.00" font-size="3.6" fill="#333" text-anchor="start" >ур.з</text><line x1="601.00" y1="207.60" x2="626.20" y2="207.60" stroke="#666" stroke-width="0.5" /><line x1="620.20" y1="200.30" x2="620.20" y2="207.60" stroke="#333" stroke-width="0.5" /><path d="M617.2 204.6L620.2 207.6L623.2 204.6" fill="none" stroke="#333" stroke-width="0.5"/><line x1="620.20" y1="200.30" x2="640.00" y2="200.30" stroke="#333" stroke-width="0.5" /><text x="622.20" y="199.10" font-size="5" fill="#222" text-anchor="start" textLength="15" lengthAdjust="spacingAndGlyphs">+12,950</text><line x1="601.00" y1="222.20" x2="626.20" y2="222.20" stroke="#666" stroke-width="0.5" /><line x1="620.20" y1="215.30" x2="620.20" y2="222.20" stroke="#333" stroke-width="0.5" /><path d="M617.2 219.2L620.2 222.2L623.2 219.2" fill="none" stroke="#333" stroke-width="0.5"/><line x1="620.20" y1="215.30" x2="640.00" y2="215.30" stroke="#333" stroke-width="0.5" /><text x="622.20" y="214.10" font-size="5" fill="#222" text-anchor="start" textLength="15" lengthAdjust="spacingAndGlyphs">+11,950</text><line x1="601.00" y1="242.90" x2="626.20" y2="242.90" stroke="#666" stroke-width="0.5" /><line x1="620.20" y1="235.20" x2="620.20" y2="242.90" stroke="#333" stroke-width="0.5" /><path d="M617.2 239.9L620.2 242.9L623.2 239.9" fill="none" stroke="#333" stroke-width="0.5"/><line x1="620.20" y1="235.20" x2="640.00" y2="235.20" stroke="#333" stroke-width="0.5" /><text x="622.20" y="234.00" font-size="5" fill="#222" text-anchor="start" textLength="15" lengthAdjust="spacingAndGlyphs">+8,350</text><line x1="601.00" y1="251.00" x2="626.20" y2="251.00" stroke="#666" stroke-width="0.5" /><line x1="620.20" y1="244.10" x2="620.20" y2="251.00" stroke="#333" stroke-width="0.5" /><path d="M617.2 248L620.2 251L623.2 248" fill="none" stroke="#333" stroke-width="0.5"/><line x1="620.20" y1="244.10" x2="640.00" y2="244.10" stroke="#333" stroke-width="0.5" /><text x="622.20" y="242.90" font-size="5" fill="#222" text-anchor="start" textLength="15" lengthAdjust="spacingAndGlyphs">+7,050</text><line x1="601.00" y1="272.20" x2="626.20" y2="272.20" stroke="#666" stroke-width="0.5" /><line x1="620.20" y1="264.10" x2="620.20" y2="272.20" stroke="#333" stroke-width="0.5" /><path d="M617.2 269.2L620.2 272.2L623.2 269.2" fill="none" stroke="#333" stroke-width="0.5"/><line x1="620.20" y1="264.10" x2="640.00" y2="264.10" stroke="#333" stroke-width="0.5" /><text x="622.20" y="262.90" font-size="5" fill="#222" text-anchor="start" textLength="15" lengthAdjust="spacingAndGlyphs">+4,350</text><line x1="601.00" y1="280.90" x2="626.20" y2="280.90" stroke="#666" stroke-width="0.5" /><line x1="620.20" y1="273.10" x2="620.20" y2="280.90" stroke="#333" stroke-width="0.5" /><path d="M617.2 277.9L620.2 280.9L623.2 277.9" fill="none" stroke="#333" stroke-width="0.5"/><line x1="620.20" y1="273.10" x2="640.00" y2="273.10" stroke="#333" stroke-width="0.5" /><text x="622.20" y="271.90" font-size="5" fill="#222" text-anchor="start" textLength="15" lengthAdjust="spacingAndGlyphs">+3,150</text><line x1="601.00" y1="300.70" x2="626.20" y2="300.70" stroke="#666" stroke-width="0.5" /><line x1="620.20" y1="292.90" x2="620.20" y2="300.70" stroke="#333" stroke-width="0.5" /><path d="M617.2 297.7L620.2 300.7L623.2 297.7" fill="none" stroke="#333" stroke-width="0.5"/><line x1="620.20" y1="292.90" x2="640.00" y2="292.90" stroke="#333" stroke-width="0.5" /><text x="622.20" y="291.70" font-size="5" fill="#222" text-anchor="start" textLength="15" lengthAdjust="spacingAndGlyphs">+0,450</text><line x1="620.00" y1="307.60" x2="633.00" y2="307.60" stroke="#666" stroke-width="0.5" /><line x1="627.00" y1="299.80" x2="627.00" y2="307.60" stroke="#333" stroke-width="0.5" /><path d="M624 304.6L627 307.6L630 304.6" fill="none" stroke="#333" stroke-width="0.5"/><line x1="627.00" y1="299.80" x2="645.00" y2="299.80" stroke="#333" stroke-width="0.5" /><text x="629.00" y="298.60" font-size="5" fill="#222" text-anchor="start" textLength="15" lengthAdjust="spacingAndGlyphs">-0,150</text><text x="628.50" y="306.00" font-size="3.8" fill="#333" text-anchor="start" >ур.з</text><line x1="181.50" y1="306.00" x2="181.50" y2="357.00" stroke="#bbb" stroke-width="0.5" /><line x1="228.90" y1="306.00" x2="228.90" y2="357.00" stroke="#bbb" stroke-width="0.5" /><line x1="252.10" y1="306.00" x2="252.10" y2="357.00" stroke="#bbb" stroke-width="0.5" /><line x1="265.10" y1="306.00" x2="265.10" y2="357.00" stroke="#bbb" stroke-width="0.5" /><line x1="296.30" y1="306.00" x2="296.30" y2="357.00" stroke="#bbb" stroke-width="0.5" /><line x1="298.50" y1="306.00" x2="298.50" y2="357.00" stroke="#bbb" stroke-width="0.5" /><line x1="342.00" y1="306.00" x2="342.00" y2="357.00" stroke="#bbb" stroke-width="0.5" /><line x1="344.10" y1="306.00" x2="344.10" y2="357.00" stroke="#bbb" stroke-width="0.5" /><line x1="365.70" y1="306.00" x2="365.70" y2="357.00" stroke="#bbb" stroke-width="0.5" /><line x1="389.00" y1="306.00" x2="389.00" y2="357.00" stroke="#bbb" stroke-width="0.5" /><line x1="433.60" y1="306.00" x2="433.60" y2="357.00" stroke="#bbb" stroke-width="0.5" /><line x1="478.50" y1="306.00" x2="478.50" y2="357.00" stroke="#bbb" stroke-width="0.5" /><line x1="526.10" y1="306.00" x2="526.10" y2="357.00" stroke="#bbb" stroke-width="0.5" /><line x1="549.30" y1="306.00" x2="549.30" y2="357.00" stroke="#bbb" stroke-width="0.5" /><line x1="596.70" y1="306.00" x2="596.70" y2="357.00" stroke="#bbb" stroke-width="0.5" /><line x1="181.50" y1="347.30" x2="596.70" y2="347.30" stroke="#333" stroke-width="0.6" /><line x1="181.50" y1="354.00" x2="596.70" y2="354.00" stroke="#333" stroke-width="0.6" /><line x1="179.90" y1="348.90" x2="183.10" y2="345.70" stroke="#111" stroke-width="0.9" /><line x1="227.30" y1="348.90" x2="230.50" y2="345.70" stroke="#111" stroke-width="0.9" /><line x1="250.50" y1="348.90" x2="253.70" y2="345.70" stroke="#111" stroke-width="0.9" /><line x1="263.50" y1="348.90" x2="266.70" y2="345.70" stroke="#111" stroke-width="0.9" /><line x1="294.70" y1="348.90" x2="297.90" y2="345.70" stroke="#111" stroke-width="0.9" /><line x1="296.90" y1="348.90" x2="300.10" y2="345.70" stroke="#111" stroke-width="0.9" /><line x1="340.40" y1="348.90" x2="343.60" y2="345.70" stroke="#111" stroke-width="0.9" /><line x1="342.50" y1="348.90" x2="345.70" y2="345.70" stroke="#111" stroke-width="0.9" /><line x1="364.10" y1="348.90" x2="367.30" y2="345.70" stroke="#111" stroke-width="0.9" /><line x1="387.40" y1="348.90" x2="390.60" y2="345.70" stroke="#111" stroke-width="0.9" /><line x1="432.00" y1="348.90" x2="435.20" y2="345.70" stroke="#111" stroke-width="0.9" /><line x1="476.90" y1="348.90" x2="480.10" y2="345.70" stroke="#111" stroke-width="0.9" /><line x1="524.50" y1="348.90" x2="527.70" y2="345.70" stroke="#111" stroke-width="0.9" /><line x1="547.70" y1="348.90" x2="550.90" y2="345.70" stroke="#111" stroke-width="0.9" /><line x1="595.10" y1="348.90" x2="598.30" y2="345.70" stroke="#111" stroke-width="0.9" /><line x1="179.80" y1="355.60" x2="183.20" y2="352.40" stroke="#111" stroke-width="0.9" /><line x1="595.00" y1="355.60" x2="598.40" y2="352.40" stroke="#111" stroke-width="0.9" /><text x="205.20" y="345.50" font-size="4.2" fill="#333" text-anchor="middle" textLength="9.0" lengthAdjust="spacingAndGlyphs">6370</text><text x="240.50" y="345.50" font-size="4.2" fill="#333" text-anchor="middle" textLength="9.0" lengthAdjust="spacingAndGlyphs">3120</text><text x="258.60" y="345.50" font-size="4.2" fill="#333" text-anchor="middle" textLength="9.0" lengthAdjust="spacingAndGlyphs">1740</text><text x="280.70" y="345.50" font-size="4.2" fill="#333" text-anchor="middle" textLength="9.0" lengthAdjust="spacingAndGlyphs">4210</text><text x="297.40" y="345.50" font-size="4.2" fill="#333" text-anchor="middle" textLength="5.0" lengthAdjust="spacingAndGlyphs">420</text><text x="320.25" y="345.50" font-size="4.2" fill="#333" text-anchor="middle" textLength="9.0" lengthAdjust="spacingAndGlyphs">5640</text><text x="343.05" y="345.50" font-size="4.2" fill="#333" text-anchor="middle" textLength="5.0" lengthAdjust="spacingAndGlyphs">450</text><text x="354.90" y="345.50" font-size="4.2" fill="#333" text-anchor="middle" textLength="9.0" lengthAdjust="spacingAndGlyphs">2850</text><text x="377.35" y="345.50" font-size="4.2" fill="#333" text-anchor="middle" textLength="9.0" lengthAdjust="spacingAndGlyphs">3120</text><text x="411.30" y="345.50" font-size="4.2" fill="#333" text-anchor="middle" textLength="9.0" lengthAdjust="spacingAndGlyphs">6000</text><text x="456.05" y="345.50" font-size="4.2" fill="#333" text-anchor="middle" textLength="9.0" lengthAdjust="spacingAndGlyphs">6000</text><text x="502.30" y="345.50" font-size="4.2" fill="#333" text-anchor="middle" textLength="9.0" lengthAdjust="spacingAndGlyphs">6370</text><text x="537.70" y="345.50" font-size="4.2" fill="#333" text-anchor="middle" textLength="9.0" lengthAdjust="spacingAndGlyphs">3120</text><text x="573.00" y="345.50" font-size="4.2" fill="#333" text-anchor="middle" textLength="9.0" lengthAdjust="spacingAndGlyphs">6370</text><text x="389.00" y="353.00" font-size="4.2" fill="#333" text-anchor="middle" textLength="11" lengthAdjust="spacingAndGlyphs">55720</text><circle cx="181.5" cy="364.5" r="5.4" fill="#fff" stroke="#333" stroke-width="0.6"/><text x="181.50" y="366.60" font-size="5.4" fill="#222" text-anchor="middle" textLength="3.0" lengthAdjust="spacingAndGlyphs">1</text><circle cx="228.9" cy="364.5" r="5.4" fill="#fff" stroke="#333" stroke-width="0.6"/><text x="228.90" y="366.60" font-size="5.4" fill="#222" text-anchor="middle" textLength="3.0" lengthAdjust="spacingAndGlyphs">2</text><circle cx="252.1" cy="364.5" r="5.4" fill="#fff" stroke="#333" stroke-width="0.6"/><text x="252.10" y="366.60" font-size="5.4" fill="#222" text-anchor="middle" textLength="3.0" lengthAdjust="spacingAndGlyphs">3</text><circle cx="265.1" cy="364.5" r="5.4" fill="#fff" stroke="#333" stroke-width="0.6"/><text x="265.10" y="366.60" font-size="5.4" fill="#222" text-anchor="middle" textLength="3.0" lengthAdjust="spacingAndGlyphs">4</text><circle cx="296.3" cy="364.5" r="5.4" fill="#fff" stroke="#333" stroke-width="0.6"/><text x="296.30" y="366.60" font-size="5.4" fill="#222" text-anchor="middle" textLength="3.0" lengthAdjust="spacingAndGlyphs">5</text><circle cx="311" cy="364.5" r="5.4" fill="#fff" stroke="#333" stroke-width="0.6"/><text x="311.00" y="366.60" font-size="5.4" fill="#222" text-anchor="middle" textLength="3.0" lengthAdjust="spacingAndGlyphs">6</text><circle cx="330.6" cy="364.5" r="5.4" fill="#fff" stroke="#333" stroke-width="0.6"/><text x="330.60" y="366.60" font-size="5.4" fill="#222" text-anchor="middle" textLength="3.0" lengthAdjust="spacingAndGlyphs">7</text><circle cx="344.1" cy="364.5" r="5.4" fill="#fff" stroke="#333" stroke-width="0.6"/><text x="344.10" y="366.60" font-size="5.4" fill="#222" text-anchor="middle" textLength="3.0" lengthAdjust="spacingAndGlyphs">8</text><circle cx="365.7" cy="364.5" r="5.4" fill="#fff" stroke="#333" stroke-width="0.6"/><text x="365.70" y="366.60" font-size="5.4" fill="#222" text-anchor="middle" textLength="3.0" lengthAdjust="spacingAndGlyphs">9</text><circle cx="389" cy="364.5" r="5.4" fill="#fff" stroke="#333" stroke-width="0.6"/><text x="389.00" y="366.60" font-size="5.4" fill="#222" text-anchor="middle" textLength="6.0" lengthAdjust="spacingAndGlyphs">10</text><circle cx="433.6" cy="364.5" r="5.4" fill="#fff" stroke="#333" stroke-width="0.6"/><text x="433.60" y="366.60" font-size="5.4" fill="#222" text-anchor="middle" textLength="6.0" lengthAdjust="spacingAndGlyphs">11</text><circle cx="478.5" cy="364.5" r="5.4" fill="#fff" stroke="#333" stroke-width="0.6"/><text x="478.50" y="366.60" font-size="5.4" fill="#222" text-anchor="middle" textLength="6.0" lengthAdjust="spacingAndGlyphs">12</text><circle cx="526.1" cy="364.5" r="5.4" fill="#fff" stroke="#333" stroke-width="0.6"/><text x="526.10" y="366.60" font-size="5.4" fill="#222" text-anchor="middle" textLength="6.0" lengthAdjust="spacingAndGlyphs">13</text><circle cx="549.3" cy="364.5" r="5.4" fill="#fff" stroke="#333" stroke-width="0.6"/><text x="549.30" y="366.60" font-size="5.4" fill="#222" text-anchor="middle" textLength="6.0" lengthAdjust="spacingAndGlyphs">14</text><circle cx="596.7" cy="364.5" r="5.4" fill="#fff" stroke="#333" stroke-width="0.6"/><text x="596.70" y="366.60" font-size="5.4" fill="#222" text-anchor="middle" textLength="6.0" lengthAdjust="spacingAndGlyphs">15</text><line x1="298.50" y1="357.00" x2="311.00" y2="359.00" stroke="#999" stroke-width="0.4" /><line x1="342.00" y1="357.00" x2="330.60" y2="359.00" stroke="#999" stroke-width="0.4" /><text x="799.00" y="146.80" font-size="10.2" fill="#111" text-anchor="middle" textLength="118" lengthAdjust="spacingAndGlyphs">Ведомость наружной отделки</text><line x1="650.30" y1="149.60" x2="650.30" y2="316.60" stroke="#111" stroke-width="0.9" /><line x1="672.50" y1="149.60" x2="672.50" y2="316.60" stroke="#111" stroke-width="0.9" /><line x1="747.10" y1="149.60" x2="747.10" y2="316.60" stroke="#111" stroke-width="0.9" /><line x1="821.80" y1="149.60" x2="821.80" y2="316.60" stroke="#111" stroke-width="0.9" /><line x1="911.70" y1="149.60" x2="911.70" y2="316.60" stroke="#111" stroke-width="0.9" /><line x1="948.40" y1="149.60" x2="948.40" y2="316.60" stroke="#111" stroke-width="0.9" /><line x1="650.30" y1="149.60" x2="948.40" y2="149.60" stroke="#111" stroke-width="0.9" /><line x1="650.30" y1="171.30" x2="948.40" y2="171.30" stroke="#111" stroke-width="0.9" /><line x1="650.30" y1="197.70" x2="948.40" y2="197.70" stroke="#666" stroke-width="0.5" /><line x1="650.30" y1="222.30" x2="948.40" y2="222.30" stroke="#666" stroke-width="0.5" /><line x1="650.30" y1="236.60" x2="948.40" y2="236.60" stroke="#666" stroke-width="0.5" /><line x1="650.30" y1="247.40" x2="948.40" y2="247.40" stroke="#666" stroke-width="0.5" /><line x1="650.30" y1="267.40" x2="948.40" y2="267.40" stroke="#666" stroke-width="0.5" /><line x1="650.30" y1="280.20" x2="948.40" y2="280.20" stroke="#666" stroke-width="0.5" /><line x1="650.30" y1="292.50" x2="948.40" y2="292.50" stroke="#666" stroke-width="0.5" /><line x1="650.30" y1="305.30" x2="948.40" y2="305.30" stroke="#666" stroke-width="0.5" /><line x1="650.30" y1="316.60" x2="948.40" y2="316.60" stroke="#111" stroke-width="0.9" /><text x="661.40" y="158.00" font-size="4.8" fill="#1a1a1a" text-anchor="middle" textLength="9.4" lengthAdjust="spacingAndGlyphs">Поз.</text><text x="661.40" y="164.00" font-size="4.8" fill="#1a1a1a" text-anchor="middle" textLength="16.4" lengthAdjust="spacingAndGlyphs">отделки</text><text x="709.80" y="161.00" font-size="4.8" fill="#1a1a1a" text-anchor="middle" textLength="65.8" lengthAdjust="spacingAndGlyphs">Наименование элемента фасада</text><text x="784.45" y="161.00" font-size="4.8" fill="#1a1a1a" text-anchor="middle" textLength="70.5" lengthAdjust="spacingAndGlyphs">Наименование материала отделки</text><text x="866.75" y="155.00" font-size="4.8" fill="#1a1a1a" text-anchor="middle" textLength="79.9" lengthAdjust="spacingAndGlyphs">Наименование и номер эталона цвета</text><text x="866.75" y="161.00" font-size="4.8" fill="#1a1a1a" text-anchor="middle" textLength="49.4" lengthAdjust="spacingAndGlyphs">элементов отделки или</text><text x="866.75" y="167.00" font-size="4.8" fill="#1a1a1a" text-anchor="middle" textLength="32.9" lengthAdjust="spacingAndGlyphs">образец колера</text><text x="930.05" y="161.00" font-size="4.8" fill="#1a1a1a" text-anchor="middle" textLength="16.4" lengthAdjust="spacingAndGlyphs">Площадь</text><text x="661.40" y="186.00" font-size="5" fill="#1a1a1a" text-anchor="middle" >1</text><text x="674.00" y="186.00" font-size="4.8" fill="#1a1a1a" text-anchor="start" textLength="11.5" lengthAdjust="spacingAndGlyphs">Стены</text><text x="748.30" y="177.00" font-size="4.9" fill="#1a1a1a" text-anchor="start" textLength="57.5" lengthAdjust="spacingAndGlyphs">Кирпич пустотелый лицевой</text><text x="748.30" y="183.00" font-size="4.9" fill="#1a1a1a" text-anchor="start" textLength="62.1" lengthAdjust="spacingAndGlyphs">колотый рифлёный "Альпина".</text><text x="748.30" y="189.00" font-size="4.9" fill="#1a1a1a" text-anchor="start" textLength="62.1" lengthAdjust="spacingAndGlyphs">Утеплитель KNAUF INSULATION</text><text x="748.30" y="195.00" font-size="4.9" fill="#1a1a1a" text-anchor="start" textLength="48.3" lengthAdjust="spacingAndGlyphs">ПРОФ TS 0,34 t=100 мм</text><text x="866.75" y="186.00" font-size="4.9" fill="#1a1a1a" text-anchor="middle" textLength="34.5" lengthAdjust="spacingAndGlyphs">Цвет - "Гранит"</text><text x="930.05" y="186.00" font-size="4.9" fill="#1a1a1a" text-anchor="middle" textLength="23.5" lengthAdjust="spacingAndGlyphs">2068,22 м²</text><text x="661.40" y="211.50" font-size="5" fill="#1a1a1a" text-anchor="middle" >2</text><text x="674.00" y="211.50" font-size="4.8" fill="#1a1a1a" text-anchor="start" textLength="11.5" lengthAdjust="spacingAndGlyphs">Стены</text><text x="748.30" y="202.50" font-size="4.9" fill="#1a1a1a" text-anchor="start" textLength="57.5" lengthAdjust="spacingAndGlyphs">Кирпич пустотелый лицевой</text><text x="748.30" y="208.50" font-size="4.9" fill="#1a1a1a" text-anchor="start" textLength="66.7" lengthAdjust="spacingAndGlyphs">гладкий "Альпина". Утеплитель</text><text x="748.30" y="214.50" font-size="4.9" fill="#1a1a1a" text-anchor="start" textLength="66.7" lengthAdjust="spacingAndGlyphs">KNAUF INSULATION ПРОФ TS 0,34</text><text x="748.30" y="220.50" font-size="4.9" fill="#1a1a1a" text-anchor="start" textLength="18.4" lengthAdjust="spacingAndGlyphs">t=100 мм</text><text x="866.75" y="211.50" font-size="4.9" fill="#1a1a1a" text-anchor="middle" textLength="32.2" lengthAdjust="spacingAndGlyphs">Цвет - "Терра"</text><text x="930.05" y="211.50" font-size="4.9" fill="#1a1a1a" text-anchor="middle" textLength="21.2" lengthAdjust="spacingAndGlyphs">535,54 м²</text><text x="661.40" y="230.95" font-size="5" fill="#1a1a1a" text-anchor="middle" >3</text><text x="674.00" y="230.95" font-size="4.8" fill="#1a1a1a" text-anchor="start" textLength="27.6" lengthAdjust="spacingAndGlyphs">Участки стен</text><text x="748.30" y="227.95" font-size="4.9" fill="#1a1a1a" text-anchor="start" textLength="55.2" lengthAdjust="spacingAndGlyphs">Штукатурка по утеплителю</text><text x="748.30" y="233.95" font-size="4.9" fill="#1a1a1a" text-anchor="start" textLength="59.8" lengthAdjust="spacingAndGlyphs">"Технофас Оптима" t=100 мм</text><text x="866.75" y="230.95" font-size="4.9" fill="#1a1a1a" text-anchor="middle" textLength="59.8" lengthAdjust="spacingAndGlyphs">RAL 9011 (графитно-черный)</text><text x="930.05" y="230.95" font-size="4.9" fill="#1a1a1a" text-anchor="middle" textLength="21.2" lengthAdjust="spacingAndGlyphs">384,86 м²</text><text x="661.40" y="243.50" font-size="5" fill="#1a1a1a" text-anchor="middle" >4</text><text x="674.00" y="243.50" font-size="4.8" fill="#1a1a1a" text-anchor="start" textLength="27.6" lengthAdjust="spacingAndGlyphs">Участки стен</text><text x="748.30" y="243.50" font-size="4.9" fill="#1a1a1a" text-anchor="start" textLength="52.9" lengthAdjust="spacingAndGlyphs">Штукатурка живой камень</text><text x="866.75" y="243.50" font-size="4.9" fill="#1a1a1a" text-anchor="middle" textLength="27.6" lengthAdjust="spacingAndGlyphs">Цвет - серый</text><text x="930.05" y="243.50" font-size="4.9" fill="#1a1a1a" text-anchor="middle" textLength="21.2" lengthAdjust="spacingAndGlyphs">285,24 м²</text><text x="661.40" y="258.90" font-size="5" fill="#1a1a1a" text-anchor="middle" >5</text><text x="674.00" y="258.90" font-size="4.8" fill="#1a1a1a" text-anchor="start" textLength="13.8" lengthAdjust="spacingAndGlyphs">Цоколь</text><text x="748.30" y="252.90" font-size="4.9" fill="#1a1a1a" text-anchor="start" textLength="55.2" lengthAdjust="spacingAndGlyphs">Штукатурка по утеплителю</text><text x="748.30" y="258.90" font-size="4.9" fill="#1a1a1a" text-anchor="start" textLength="57.5" lengthAdjust="spacingAndGlyphs">"ТЕХНОНИКОЛЬ CARBON PROF"</text><text x="748.30" y="264.90" font-size="4.9" fill="#1a1a1a" text-anchor="start" textLength="16.1" lengthAdjust="spacingAndGlyphs">t=60 мм</text><text x="866.75" y="258.90" font-size="4.9" fill="#1a1a1a" text-anchor="middle" textLength="59.8" lengthAdjust="spacingAndGlyphs">RAL 9011 (графитно-черный)</text><text x="930.05" y="258.90" font-size="4.9" fill="#1a1a1a" text-anchor="middle" textLength="23.5" lengthAdjust="spacingAndGlyphs">1363,03 м²</text><text x="661.40" y="275.30" font-size="5" fill="#1a1a1a" text-anchor="middle" >6</text><text x="674.00" y="275.30" font-size="4.8" fill="#1a1a1a" text-anchor="start" textLength="9.2" lengthAdjust="spacingAndGlyphs">Окна</text><text x="748.30" y="272.30" font-size="4.9" fill="#1a1a1a" text-anchor="start" textLength="52.9" lengthAdjust="spacingAndGlyphs">Окна с ПВХ переплетом с</text><text x="748.30" y="278.30" font-size="4.9" fill="#1a1a1a" text-anchor="start" textLength="23.0" lengthAdjust="spacingAndGlyphs">ламинацией</text><text x="866.75" y="275.30" font-size="4.9" fill="#1a1a1a" text-anchor="middle" textLength="59.8" lengthAdjust="spacingAndGlyphs">RAL 9011 (графитно-черный)</text><text x="930.05" y="275.30" font-size="4.9" fill="#1a1a1a" text-anchor="middle" textLength="23.5" lengthAdjust="spacingAndGlyphs">4166,06 м²</text><text x="661.40" y="287.85" font-size="5" fill="#1a1a1a" text-anchor="middle" >7</text><text x="674.00" y="287.85" font-size="4.8" fill="#1a1a1a" text-anchor="start" textLength="16.1" lengthAdjust="spacingAndGlyphs">Витражи</text><text x="748.30" y="287.85" font-size="4.9" fill="#1a1a1a" text-anchor="start" textLength="43.7" lengthAdjust="spacingAndGlyphs">Витражи алюминиевые</text><text x="866.75" y="287.85" font-size="4.9" fill="#1a1a1a" text-anchor="middle" textLength="59.8" lengthAdjust="spacingAndGlyphs">RAL 9011 (графитно-черный)</text><text x="930.05" y="287.85" font-size="4.9" fill="#1a1a1a" text-anchor="middle" textLength="21.2" lengthAdjust="spacingAndGlyphs">150,11 м²</text><text x="661.40" y="300.40" font-size="5" fill="#1a1a1a" text-anchor="middle" >8</text><text x="674.00" y="300.40" font-size="4.8" fill="#1a1a1a" text-anchor="start" textLength="32.2" lengthAdjust="spacingAndGlyphs">Наружные двери</text><text x="748.30" y="297.40" font-size="4.9" fill="#1a1a1a" text-anchor="start" textLength="66.7" lengthAdjust="spacingAndGlyphs">Двери утепленные алюминиевые,</text><text x="748.30" y="303.40" font-size="4.9" fill="#1a1a1a" text-anchor="start" textLength="25.3" lengthAdjust="spacingAndGlyphs">остекленные</text><text x="866.75" y="300.40" font-size="4.9" fill="#1a1a1a" text-anchor="middle" textLength="59.8" lengthAdjust="spacingAndGlyphs">RAL 9011 (графитно-черный)</text><text x="930.05" y="300.40" font-size="4.9" fill="#1a1a1a" text-anchor="middle" textLength="21.2" lengthAdjust="spacingAndGlyphs">205,29 м²</text><text x="661.40" y="312.45" font-size="5" fill="#1a1a1a" text-anchor="middle" >9</text><text x="674.00" y="312.45" font-size="4.8" fill="#1a1a1a" text-anchor="start" textLength="43.7" lengthAdjust="spacingAndGlyphs">Водосточная система</text><text x="748.30" y="312.45" font-size="4.9" fill="#1a1a1a" text-anchor="start" textLength="36.8" lengthAdjust="spacingAndGlyphs">"Металл Профиль"</text><text x="866.75" y="312.45" font-size="4.9" fill="#1a1a1a" text-anchor="middle" textLength="59.8" lengthAdjust="spacingAndGlyphs">RAL 9011 (графитно-черный)</text><text x="930.05" y="312.45" font-size="4.9" fill="#1a1a1a" text-anchor="middle" textLength="16.4" lengthAdjust="spacingAndGlyphs">4,17 м²</text><rect x="228.00" y="448.00" width="326.50" height="32.00" fill="#6b3426" /><rect x="179.50" y="480.00" width="423.30" height="105.00" fill="#6b3426" /><line x1="258.00" y1="480.00" x2="258.00" y2="575.00" stroke="#4a2218" stroke-width="0.5" /><line x1="296.00" y1="480.00" x2="296.00" y2="575.00" stroke="#4a2218" stroke-width="0.5" /><line x1="394.00" y1="480.00" x2="394.00" y2="575.00" stroke="#4a2218" stroke-width="0.5" /><line x1="478.00" y1="480.00" x2="478.00" y2="575.00" stroke="#4a2218" stroke-width="0.5" /><line x1="500.00" y1="480.00" x2="500.00" y2="575.00" stroke="#4a2218" stroke-width="0.5" /><line x1="525.00" y1="480.00" x2="525.00" y2="575.00" stroke="#4a2218" stroke-width="0.5" /><line x1="549.00" y1="480.00" x2="549.00" y2="575.00" stroke="#4a2218" stroke-width="0.5" /><line x1="575.00" y1="480.00" x2="575.00" y2="575.00" stroke="#4a2218" stroke-width="0.5" /><rect x="305.40" y="448.00" width="16.00" height="96.00" fill="#26292d" /><rect x="306.20" y="471.40" width="6.70" height="10.10" fill="#8eabcc" /><rect x="313.90" y="471.40" width="6.70" height="10.10" fill="#8eabcc" /><rect x="306.20" y="483.50" width="6.70" height="11.00" fill="url(#spk)" /><rect x="313.90" y="483.50" width="6.70" height="11.00" fill="#8eabcc" /><rect x="326.50" y="448.00" width="16.20" height="96.00" fill="#26292d" /><rect x="327.30" y="471.40" width="6.80" height="10.10" fill="#8eabcc" /><rect x="335.10" y="471.40" width="6.80" height="10.10" fill="#8eabcc" /><rect x="327.30" y="483.50" width="6.80" height="11.00" fill="url(#spk)" /><rect x="335.10" y="483.50" width="6.80" height="11.00" fill="#8eabcc" /><rect x="348.80" y="448.00" width="16.40" height="96.00" fill="#26292d" /><rect x="349.60" y="471.40" width="6.90" height="10.10" fill="#8eabcc" /><rect x="357.50" y="471.40" width="6.90" height="10.10" fill="#8eabcc" /><rect x="349.60" y="483.50" width="6.90" height="11.00" fill="url(#spk)" /><rect x="357.50" y="483.50" width="6.90" height="11.00" fill="#8eabcc" /><rect x="349.60" y="519.50" width="6.90" height="10.50" fill="#8eabcc" /><rect x="357.50" y="519.50" width="6.90" height="10.50" fill="#8eabcc" /><rect x="349.60" y="532.00" width="6.90" height="11.00" fill="url(#spk)" /><rect x="357.50" y="532.00" width="6.90" height="11.00" fill="#8eabcc" /><rect x="370.00" y="448.00" width="16.70" height="96.00" fill="#26292d" /><rect x="370.80" y="471.40" width="7.05" height="10.10" fill="#8eabcc" /><rect x="378.85" y="471.40" width="7.05" height="10.10" fill="#8eabcc" /><rect x="370.80" y="483.50" width="7.05" height="11.00" fill="url(#spk)" /><rect x="378.85" y="483.50" width="7.05" height="11.00" fill="#8eabcc" /><rect x="370.80" y="519.50" width="7.05" height="10.50" fill="#8eabcc" /><rect x="378.85" y="519.50" width="7.05" height="10.50" fill="#8eabcc" /><rect x="370.80" y="532.00" width="7.05" height="11.00" fill="url(#spk)" /><rect x="378.85" y="532.00" width="7.05" height="11.00" fill="#8eabcc" /><rect x="395.40" y="448.00" width="16.40" height="96.00" fill="#26292d" /><rect x="396.20" y="471.40" width="6.90" height="10.10" fill="#8eabcc" /><rect x="404.10" y="471.40" width="6.90" height="10.10" fill="#8eabcc" /><rect x="396.20" y="483.50" width="6.90" height="11.00" fill="url(#spk)" /><rect x="404.10" y="483.50" width="6.90" height="11.00" fill="#8eabcc" /><rect x="396.20" y="519.50" width="6.90" height="10.50" fill="#8eabcc" /><rect x="404.10" y="519.50" width="6.90" height="10.50" fill="#8eabcc" /><rect x="396.20" y="532.00" width="6.90" height="11.00" fill="url(#spk)" /><rect x="404.10" y="532.00" width="6.90" height="11.00" fill="#8eabcc" /><rect x="416.50" y="448.00" width="16.20" height="96.00" fill="#26292d" /><rect x="417.30" y="471.40" width="6.80" height="10.10" fill="#8eabcc" /><rect x="425.10" y="471.40" width="6.80" height="10.10" fill="#8eabcc" /><rect x="417.30" y="483.50" width="6.80" height="11.00" fill="url(#spk)" /><rect x="425.10" y="483.50" width="6.80" height="11.00" fill="#8eabcc" /><rect x="417.30" y="519.50" width="6.80" height="10.50" fill="#8eabcc" /><rect x="425.10" y="519.50" width="6.80" height="10.50" fill="#8eabcc" /><rect x="417.30" y="532.00" width="6.80" height="11.00" fill="url(#spk)" /><rect x="425.10" y="532.00" width="6.80" height="11.00" fill="#8eabcc" /><rect x="438.80" y="448.00" width="16.10" height="96.00" fill="#26292d" /><rect x="439.60" y="471.40" width="6.75" height="10.10" fill="#8eabcc" /><rect x="447.35" y="471.40" width="6.75" height="10.10" fill="#8eabcc" /><rect x="439.60" y="483.50" width="6.75" height="11.00" fill="url(#spk)" /><rect x="447.35" y="483.50" width="6.75" height="11.00" fill="#8eabcc" /><rect x="439.60" y="519.50" width="6.75" height="10.50" fill="#8eabcc" /><rect x="447.35" y="519.50" width="6.75" height="10.50" fill="#8eabcc" /><rect x="439.60" y="532.00" width="6.75" height="11.00" fill="url(#spk)" /><rect x="447.35" y="532.00" width="6.75" height="11.00" fill="#8eabcc" /><rect x="460.00" y="448.00" width="15.80" height="96.00" fill="#26292d" /><rect x="460.80" y="471.40" width="6.60" height="10.10" fill="#8eabcc" /><rect x="468.40" y="471.40" width="6.60" height="10.10" fill="#8eabcc" /><rect x="460.80" y="483.50" width="6.60" height="11.00" fill="url(#spk)" /><rect x="468.40" y="483.50" width="6.60" height="11.00" fill="#8eabcc" /><rect x="460.80" y="519.50" width="6.60" height="10.50" fill="#8eabcc" /><rect x="468.40" y="519.50" width="6.60" height="10.50" fill="#8eabcc" /><rect x="460.80" y="532.00" width="6.60" height="11.00" fill="url(#spk)" /><rect x="468.40" y="532.00" width="6.60" height="11.00" fill="#8eabcc" /><rect x="235.60" y="458.00" width="15.70" height="26.00" fill="#26292d" /><rect x="236.40" y="470.00" width="7.05" height="13.00" fill="url(#spk)" /><rect x="243.65" y="470.00" width="7.05" height="13.00" fill="#050505" /><rect x="256.80" y="458.00" width="15.70" height="26.00" fill="#26292d" /><rect x="257.60" y="470.00" width="7.05" height="13.00" fill="url(#spk)" /><rect x="264.85" y="470.00" width="7.05" height="13.00" fill="#050505" /><rect x="278.00" y="458.00" width="15.80" height="26.00" fill="#26292d" /><rect x="278.80" y="470.00" width="7.10" height="13.00" fill="url(#spk)" /><rect x="286.10" y="470.00" width="7.10" height="13.00" fill="#050505" /><rect x="487.90" y="458.00" width="15.70" height="26.00" fill="#26292d" /><rect x="488.70" y="470.00" width="7.05" height="13.00" fill="#050505" /><rect x="495.95" y="470.00" width="7.05" height="13.00" fill="url(#spk)" /><rect x="509.20" y="458.00" width="15.70" height="26.00" fill="#26292d" /><rect x="510.00" y="470.00" width="7.05" height="13.00" fill="#050505" /><rect x="517.25" y="470.00" width="7.05" height="13.00" fill="url(#spk)" /><rect x="530.40" y="458.00" width="15.70" height="26.00" fill="#26292d" /><rect x="531.20" y="470.00" width="7.05" height="13.00" fill="#050505" /><rect x="538.45" y="470.00" width="7.05" height="13.00" fill="url(#spk)" /><rect x="179.50" y="515.00" width="423.30" height="4.20" fill="#c3c2c0" /><rect x="172.00" y="544.00" width="7.50" height="4.20" fill="#333" /><rect x="179.50" y="544.00" width="30.20" height="4.20" fill="#c3c2c0" /><rect x="209.70" y="544.00" width="41.60" height="4.20" fill="#2e2e2e" /><rect x="251.30" y="544.00" width="29.00" height="4.20" fill="#c3c2c0" /><rect x="280.30" y="544.00" width="41.20" height="4.20" fill="#2e2e2e" /><rect x="321.50" y="544.00" width="138.70" height="4.20" fill="#c3c2c0" /><rect x="460.20" y="544.00" width="42.80" height="4.20" fill="#2e2e2e" /><rect x="503.00" y="544.00" width="99.80" height="4.20" fill="#c3c2c0" /><rect x="235.60" y="490.00" width="7.90" height="25.00" fill="#26292d" /><rect x="235.60" y="499.50" width="7.90" height="15.50" fill="#101214" /><rect x="236.20" y="495.20" width="6.70" height="4.30" fill="#8eabcc" /><rect x="236.20" y="512.70" width="6.70" height="1.80" fill="#8eabcc" /><rect x="236.40" y="500.60" width="6.30" height="11.60" fill="url(#spk)" /><rect x="256.80" y="490.00" width="15.70" height="25.00" fill="#26292d" /><rect x="286.20" y="490.00" width="8.00" height="25.00" fill="#26292d" /><rect x="286.20" y="499.50" width="8.00" height="15.50" fill="#101214" /><rect x="286.80" y="495.20" width="6.80" height="4.30" fill="#8eabcc" /><rect x="286.80" y="512.70" width="6.80" height="1.80" fill="#8eabcc" /><rect x="287.00" y="500.60" width="6.40" height="11.60" fill="url(#spk)" /><rect x="487.80" y="490.00" width="8.00" height="25.00" fill="#26292d" /><rect x="487.80" y="499.50" width="8.00" height="15.50" fill="#101214" /><rect x="488.40" y="495.20" width="6.80" height="4.30" fill="#8eabcc" /><rect x="488.40" y="512.70" width="6.80" height="1.80" fill="#8eabcc" /><rect x="488.60" y="500.60" width="6.40" height="11.60" fill="url(#spk)" /><rect x="509.20" y="490.00" width="15.70" height="25.00" fill="#26292d" /><rect x="509.20" y="499.50" width="15.70" height="15.50" fill="#101214" /><rect x="509.80" y="495.20" width="14.50" height="4.30" fill="#8eabcc" /><rect x="509.80" y="512.70" width="14.50" height="1.80" fill="#8eabcc" /><rect x="510.00" y="500.60" width="6.55" height="11.60" fill="url(#spk)" /><rect x="517.55" y="500.60" width="6.55" height="11.60" fill="#8eabcc" /><rect x="530.40" y="490.00" width="15.70" height="25.00" fill="#26292d" /><rect x="530.40" y="499.50" width="15.70" height="15.50" fill="#101214" /><rect x="531.00" y="495.20" width="14.50" height="4.30" fill="#8eabcc" /><rect x="531.00" y="512.70" width="14.50" height="1.80" fill="#8eabcc" /><rect x="531.20" y="500.60" width="6.55" height="11.60" fill="url(#spk)" /><rect x="538.75" y="500.60" width="6.55" height="11.60" fill="#8eabcc" /><line x1="179.50" y1="493.20" x2="602.80" y2="493.20" stroke="#f0f0f0" stroke-width="0.5" /><line x1="402.70" y1="448.00" x2="402.70" y2="585.00" stroke="#e8e8e8" stroke-width="0.5" /><rect x="235.60" y="519.00" width="7.90" height="25.00" fill="#26292d" /><rect x="235.60" y="528.50" width="7.90" height="15.50" fill="#101214" /><rect x="236.20" y="524.20" width="6.70" height="4.30" fill="#8eabcc" /><rect x="236.20" y="541.70" width="6.70" height="1.80" fill="#8eabcc" /><rect x="236.40" y="529.60" width="6.30" height="11.60" fill="url(#spk)" /><rect x="256.80" y="519.00" width="15.70" height="25.00" fill="#26292d" /><rect x="256.80" y="528.50" width="15.70" height="15.50" fill="#101214" /><rect x="257.40" y="524.20" width="14.50" height="4.30" fill="#8eabcc" /><rect x="257.40" y="541.70" width="14.50" height="1.80" fill="#8eabcc" /><rect x="257.60" y="529.60" width="6.55" height="11.60" fill="url(#spk)" /><rect x="265.15" y="529.60" width="6.55" height="11.60" fill="#8eabcc" /><rect x="278.00" y="519.00" width="15.80" height="25.00" fill="#26292d" /><rect x="278.00" y="528.50" width="15.80" height="15.50" fill="#101214" /><rect x="278.60" y="524.20" width="14.60" height="4.30" fill="#8eabcc" /><rect x="278.60" y="541.70" width="14.60" height="1.80" fill="#8eabcc" /><rect x="278.80" y="529.60" width="6.60" height="11.60" fill="url(#spk)" /><rect x="286.40" y="529.60" width="6.60" height="11.60" fill="#8eabcc" /><rect x="487.90" y="519.00" width="15.70" height="25.00" fill="#26292d" /><rect x="487.90" y="528.50" width="15.70" height="15.50" fill="#101214" /><rect x="488.50" y="524.20" width="14.50" height="4.30" fill="#8eabcc" /><rect x="488.50" y="541.70" width="14.50" height="1.80" fill="#8eabcc" /><rect x="488.70" y="529.60" width="6.55" height="11.60" fill="url(#spk)" /><rect x="496.25" y="529.60" width="6.55" height="11.60" fill="#8eabcc" /><rect x="509.20" y="519.00" width="15.70" height="25.00" fill="#26292d" /><rect x="509.20" y="528.50" width="15.70" height="15.50" fill="#101214" /><rect x="509.80" y="524.20" width="14.50" height="4.30" fill="#8eabcc" /><rect x="509.80" y="541.70" width="14.50" height="1.80" fill="#8eabcc" /><rect x="510.00" y="529.60" width="6.55" height="11.60" fill="url(#spk)" /><rect x="517.55" y="529.60" width="6.55" height="11.60" fill="#8eabcc" /><rect x="530.40" y="519.00" width="15.70" height="25.00" fill="#26292d" /><rect x="530.40" y="528.50" width="15.70" height="15.50" fill="#101214" /><rect x="531.00" y="524.20" width="14.50" height="4.30" fill="#8eabcc" /><rect x="531.00" y="541.70" width="14.50" height="1.80" fill="#8eabcc" /><rect x="531.20" y="529.60" width="6.55" height="11.60" fill="url(#spk)" /><rect x="538.75" y="529.60" width="6.55" height="11.60" fill="#8eabcc" /><rect x="234.80" y="548.00" width="8.90" height="27.00" fill="#26292d" /><rect x="234.80" y="559.50" width="8.90" height="15.50" fill="#101214" /><rect x="235.40" y="555.20" width="7.70" height="4.30" fill="#8eabcc" /><rect x="235.40" y="572.70" width="7.70" height="1.80" fill="#8eabcc" /><rect x="235.60" y="560.60" width="7.30" height="11.60" fill="url(#spk)" /><rect x="235.50" y="559.00" width="7.50" height="16.00" fill="#2a2a2a" /><rect x="257.00" y="548.00" width="7.70" height="27.00" fill="#26292d" /><rect x="257.00" y="559.50" width="7.70" height="15.50" fill="#101214" /><rect x="257.60" y="555.20" width="6.50" height="4.30" fill="#8eabcc" /><rect x="257.60" y="572.70" width="6.50" height="1.80" fill="#8eabcc" /><rect x="257.80" y="560.60" width="6.10" height="11.60" fill="url(#spk)" /><rect x="271.60" y="548.00" width="7.60" height="27.00" fill="#26292d" /><rect x="271.60" y="559.50" width="7.60" height="15.50" fill="#101214" /><rect x="272.20" y="555.20" width="6.40" height="4.30" fill="#8eabcc" /><rect x="272.20" y="572.70" width="6.40" height="1.80" fill="#8eabcc" /><rect x="272.40" y="560.60" width="6.00" height="11.60" fill="url(#spk)" /><rect x="286.10" y="548.00" width="7.80" height="27.00" fill="#26292d" /><rect x="286.10" y="559.50" width="7.80" height="15.50" fill="#101214" /><rect x="286.70" y="555.20" width="6.60" height="4.30" fill="#8eabcc" /><rect x="286.70" y="572.70" width="6.60" height="1.80" fill="#8eabcc" /><rect x="286.90" y="560.60" width="6.20" height="11.60" fill="url(#spk)" /><rect x="319.50" y="548.00" width="8.00" height="27.00" fill="#26292d" /><rect x="319.50" y="559.50" width="8.00" height="15.50" fill="#101214" /><rect x="320.10" y="555.20" width="6.80" height="4.30" fill="#8eabcc" /><rect x="320.10" y="572.70" width="6.80" height="1.80" fill="#8eabcc" /><rect x="320.30" y="560.60" width="6.40" height="11.60" fill="url(#spk)" /><rect x="439.60" y="548.00" width="15.30" height="27.00" fill="#26292d" /><rect x="439.60" y="559.50" width="15.30" height="15.50" fill="#101214" /><rect x="440.20" y="555.20" width="14.10" height="4.30" fill="#8eabcc" /><rect x="440.20" y="572.70" width="14.10" height="1.80" fill="#8eabcc" /><rect x="440.40" y="560.60" width="6.35" height="11.60" fill="url(#spk)" /><rect x="447.75" y="560.60" width="6.35" height="11.60" fill="#8eabcc" /><rect x="460.80" y="548.00" width="15.20" height="27.00" fill="#26292d" /><rect x="460.80" y="559.50" width="15.20" height="15.50" fill="#101214" /><rect x="461.40" y="555.20" width="14.00" height="4.30" fill="#8eabcc" /><rect x="461.40" y="572.70" width="14.00" height="1.80" fill="#8eabcc" /><rect x="461.60" y="560.60" width="6.30" height="11.60" fill="url(#spk)" /><rect x="468.90" y="560.60" width="6.30" height="11.60" fill="#8eabcc" /><rect x="509.30" y="548.00" width="15.00" height="27.00" fill="#26292d" /><rect x="509.30" y="559.50" width="15.00" height="15.50" fill="#101214" /><rect x="509.90" y="555.20" width="13.80" height="4.30" fill="#8eabcc" /><rect x="509.90" y="572.70" width="13.80" height="1.80" fill="#8eabcc" /><rect x="510.10" y="560.60" width="6.20" height="11.60" fill="url(#spk)" /><rect x="517.30" y="560.60" width="6.20" height="11.60" fill="#8eabcc" /><rect x="530.40" y="548.00" width="15.50" height="27.00" fill="#26292d" /><rect x="530.40" y="559.50" width="15.50" height="15.50" fill="#101214" /><rect x="531.00" y="555.20" width="14.30" height="4.30" fill="#8eabcc" /><rect x="531.00" y="572.70" width="14.30" height="1.80" fill="#8eabcc" /><rect x="531.20" y="560.60" width="6.45" height="11.60" fill="url(#spk)" /><rect x="538.65" y="560.60" width="6.45" height="11.60" fill="#8eabcc" /><rect x="305.20" y="548.00" width="8.80" height="27.00" fill="#26292d" /><rect x="305.80" y="554.20" width="7.80" height="4.60" fill="#8eabcc" /><rect x="334.40" y="548.00" width="8.60" height="27.00" fill="#26292d" /><rect x="361.30" y="548.00" width="6.20" height="27.00" fill="#a39a8e" /><rect x="383.70" y="548.00" width="4.80" height="27.00" fill="#a39a8e" /><rect x="404.40" y="548.00" width="5.60" height="27.00" fill="#a39a8e" /><rect x="367.50" y="548.00" width="16.20" height="27.00" fill="#26292d" /><rect x="368.20" y="549.70" width="7.40" height="9.80" fill="url(#spk)" /><rect x="376.40" y="549.70" width="6.60" height="9.80" fill="#8eabcc" /><rect x="368.20" y="563.00" width="15.00" height="2.60" fill="#8eabcc" /><rect x="388.50" y="548.00" width="9.50" height="27.00" fill="#26292d" /><rect x="398.00" y="548.00" width="6.40" height="27.00" fill="#26292d" /><rect x="398.60" y="549.70" width="5.20" height="11.30" fill="#8eabcc" /><rect x="398.60" y="563.00" width="5.20" height="2.00" fill="#8eabcc" /><rect x="415.40" y="548.00" width="17.80" height="27.00" fill="#26292d" /><rect x="416.00" y="549.70" width="7.60" height="6.90" fill="url(#spk)" /><rect x="424.40" y="549.70" width="8.20" height="6.90" fill="#8eabcc" /><rect x="416.00" y="556.80" width="16.60" height="1.20" fill="#8eabcc" /><rect x="417.00" y="570.00" width="7.20" height="5.00" fill="#8eabcc" /><rect x="425.60" y="570.00" width="7.00" height="5.00" fill="#8eabcc" /><rect x="488.30" y="548.00" width="11.10" height="27.00" fill="#26292d" /><rect x="489.00" y="553.50" width="9.70" height="4.50" fill="#8eabcc" /><rect x="489.00" y="560.00" width="9.70" height="15.00" fill="#8eabcc" /><line x1="493.80" y1="560.00" x2="493.80" y2="575.00" stroke="#222" stroke-width="0.6" /><rect x="350.00" y="569.00" width="10.00" height="6.00" fill="#3a1a12" /><path d="M179.5 575H602.7V581.5L179.5 585.4Z" fill="#27292c"/><rect x="415.40" y="575.00" width="17.80" height="9.60" fill="#26292d" /><rect x="417.00" y="575.00" width="15.60" height="9.50" fill="#8eabcc" /><line x1="420.60" y1="570.00" x2="420.60" y2="584.50" stroke="#222" stroke-width="0.6" /><line x1="429.00" y1="570.00" x2="429.00" y2="584.50" stroke="#222" stroke-width="0.6" /><rect x="350.00" y="575.00" width="10.00" height="9.00" fill="#3c3c3c" /><rect x="350.00" y="576.00" width="10.00" height="1.00" fill="#bbb" /><path d="M216.5 585L230.9 578H245.3" fill="none" stroke="#e6e6e6" stroke-width="0.9"/><line x1="219.38" y1="575.00" x2="219.38" y2="570.00" stroke="#111" stroke-width="0.5" /><line x1="221.97" y1="575.00" x2="221.97" y2="570.00" stroke="#111" stroke-width="0.5" /><line x1="224.56" y1="575.00" x2="224.56" y2="570.00" stroke="#111" stroke-width="0.5" /><line x1="227.16" y1="575.00" x2="227.16" y2="570.00" stroke="#111" stroke-width="0.5" /><line x1="229.75" y1="575.00" x2="229.75" y2="570.00" stroke="#111" stroke-width="0.5" /><line x1="232.34" y1="575.00" x2="232.34" y2="570.00" stroke="#111" stroke-width="0.5" /><line x1="234.93" y1="575.00" x2="234.93" y2="570.00" stroke="#111" stroke-width="0.5" /><line x1="237.52" y1="575.00" x2="237.52" y2="570.00" stroke="#111" stroke-width="0.5" /><line x1="240.12" y1="575.00" x2="240.12" y2="570.00" stroke="#111" stroke-width="0.5" /><line x1="242.71" y1="575.00" x2="242.71" y2="570.00" stroke="#111" stroke-width="0.5" /><line x1="219.38" y1="575.00" x2="245.30" y2="570.00" stroke="#111" stroke-width="0.4" /><path d="M290 585L303.0 578H316" fill="none" stroke="#e6e6e6" stroke-width="0.9"/><line x1="292.60" y1="575.00" x2="292.60" y2="570.00" stroke="#111" stroke-width="0.5" /><line x1="294.94" y1="575.00" x2="294.94" y2="570.00" stroke="#111" stroke-width="0.5" /><line x1="297.28" y1="575.00" x2="297.28" y2="570.00" stroke="#111" stroke-width="0.5" /><line x1="299.62" y1="575.00" x2="299.62" y2="570.00" stroke="#111" stroke-width="0.5" /><line x1="301.96" y1="575.00" x2="301.96" y2="570.00" stroke="#111" stroke-width="0.5" /><line x1="304.30" y1="575.00" x2="304.30" y2="570.00" stroke="#111" stroke-width="0.5" /><line x1="306.64" y1="575.00" x2="306.64" y2="570.00" stroke="#111" stroke-width="0.5" /><line x1="308.98" y1="575.00" x2="308.98" y2="570.00" stroke="#111" stroke-width="0.5" /><line x1="311.32" y1="575.00" x2="311.32" y2="570.00" stroke="#111" stroke-width="0.5" /><line x1="313.66" y1="575.00" x2="313.66" y2="570.00" stroke="#111" stroke-width="0.5" /><line x1="292.60" y1="575.00" x2="316.00" y2="570.00" stroke="#111" stroke-width="0.4" /><path d="M473.3 585L488.0 578H502.7" fill="none" stroke="#e6e6e6" stroke-width="0.9"/><line x1="476.24" y1="575.00" x2="476.24" y2="570.00" stroke="#111" stroke-width="0.5" /><line x1="478.89" y1="575.00" x2="478.89" y2="570.00" stroke="#111" stroke-width="0.5" /><line x1="481.53" y1="575.00" x2="481.53" y2="570.00" stroke="#111" stroke-width="0.5" /><line x1="484.18" y1="575.00" x2="484.18" y2="570.00" stroke="#111" stroke-width="0.5" /><line x1="486.82" y1="575.00" x2="486.82" y2="570.00" stroke="#111" stroke-width="0.5" /><line x1="489.47" y1="575.00" x2="489.47" y2="570.00" stroke="#111" stroke-width="0.5" /><line x1="492.12" y1="575.00" x2="492.12" y2="570.00" stroke="#111" stroke-width="0.5" /><line x1="494.76" y1="575.00" x2="494.76" y2="570.00" stroke="#111" stroke-width="0.5" /><line x1="497.41" y1="575.00" x2="497.41" y2="570.00" stroke="#111" stroke-width="0.5" /><line x1="500.05" y1="575.00" x2="500.05" y2="570.00" stroke="#111" stroke-width="0.5" /><line x1="476.24" y1="575.00" x2="502.70" y2="570.00" stroke="#111" stroke-width="0.4" /><path d="M161.5 573Q164 569.5 172 569.5H179.5V580H163Q161.5 580 161.5 578Z" fill="#7a7a7a"/><line x1="163.00" y1="569.50" x2="163.00" y2="580.00" stroke="#333" stroke-width="0.6" /><line x1="165.50" y1="569.50" x2="165.50" y2="580.00" stroke="#333" stroke-width="0.6" /><line x1="168.00" y1="569.50" x2="168.00" y2="580.00" stroke="#333" stroke-width="0.6" /><line x1="170.50" y1="569.50" x2="170.50" y2="580.00" stroke="#333" stroke-width="0.6" /><line x1="173.00" y1="569.50" x2="173.00" y2="580.00" stroke="#333" stroke-width="0.6" /><line x1="175.50" y1="569.50" x2="175.50" y2="580.00" stroke="#333" stroke-width="0.6" /><line x1="178.00" y1="569.50" x2="178.00" y2="580.00" stroke="#333" stroke-width="0.6" /><text x="378.00" y="426.50" font-size="8.6" fill="#111" text-anchor="start" font-weight="bold" textLength="47" lengthAdjust="spacingAndGlyphs">Фасад 15-1</text><line x1="378.00" y1="428.40" x2="425.00" y2="428.40" stroke="#111" stroke-width="0.9" /><rect x="225.00" y="422.50" width="14.00" height="20.00" fill="#fff" stroke="#111" stroke-width="1.5"/><rect x="227.20" y="424.70" width="9.60" height="15.60" fill="none" stroke="#aaa" stroke-width="0.5"/><text x="232.00" y="435.90" font-size="9" fill="#1a1a1a" text-anchor="middle" textLength="4.2" lengthAdjust="spacingAndGlyphs">4</text><line x1="232.00" y1="442.50" x2="232.00" y2="515.00" stroke="#222" stroke-width="0.6" /><rect x="275.00" y="422.50" width="14.00" height="20.00" fill="#fff" stroke="#111" stroke-width="1.5"/><rect x="277.20" y="424.70" width="9.60" height="15.60" fill="none" stroke="#aaa" stroke-width="0.5"/><text x="282.00" y="435.90" font-size="9" fill="#1a1a1a" text-anchor="middle" textLength="4.2" lengthAdjust="spacingAndGlyphs">1</text><line x1="282.00" y1="442.50" x2="282.00" y2="455.00" stroke="#222" stroke-width="0.6" /><rect x="305.50" y="422.50" width="14.00" height="20.00" fill="#fff" stroke="#111" stroke-width="1.5"/><rect x="307.70" y="424.70" width="9.60" height="15.60" fill="none" stroke="#aaa" stroke-width="0.5"/><text x="312.50" y="435.90" font-size="9" fill="#1a1a1a" text-anchor="middle" textLength="4.2" lengthAdjust="spacingAndGlyphs">6</text><line x1="312.50" y1="442.50" x2="312.50" y2="470.00" stroke="#222" stroke-width="0.6" /><rect x="459.00" y="422.50" width="14.00" height="20.00" fill="#fff" stroke="#111" stroke-width="1.5"/><rect x="461.20" y="424.70" width="9.60" height="15.60" fill="none" stroke="#aaa" stroke-width="0.5"/><text x="466.00" y="435.90" font-size="9" fill="#1a1a1a" text-anchor="middle" textLength="4.2" lengthAdjust="spacingAndGlyphs">3</text><line x1="466.00" y1="442.50" x2="466.00" y2="458.00" stroke="#222" stroke-width="0.6" /><rect x="165.00" y="590.00" width="14.00" height="20.00" fill="#fff" stroke="#111" stroke-width="1.5"/><rect x="167.20" y="592.20" width="9.60" height="15.60" fill="none" stroke="#aaa" stroke-width="0.5"/><text x="172.00" y="603.40" font-size="9" fill="#1a1a1a" text-anchor="middle" textLength="8.6" lengthAdjust="spacingAndGlyphs">10</text><line x1="172.00" y1="590.00" x2="172.00" y2="575.00" stroke="#222" stroke-width="0.6" /><rect x="272.50" y="590.00" width="14.00" height="20.00" fill="#fff" stroke="#111" stroke-width="1.5"/><rect x="274.70" y="592.20" width="9.60" height="15.60" fill="none" stroke="#aaa" stroke-width="0.5"/><text x="279.50" y="603.40" font-size="9" fill="#1a1a1a" text-anchor="middle" textLength="4.2" lengthAdjust="spacingAndGlyphs">5</text><line x1="279.50" y1="590.00" x2="279.50" y2="578.00" stroke="#222" stroke-width="0.6" /><rect x="488.50" y="590.00" width="14.00" height="20.00" fill="#fff" stroke="#111" stroke-width="1.5"/><rect x="490.70" y="592.20" width="9.60" height="15.60" fill="none" stroke="#aaa" stroke-width="0.5"/><text x="495.50" y="603.40" font-size="9" fill="#1a1a1a" text-anchor="middle" textLength="4.2" lengthAdjust="spacingAndGlyphs">8</text><line x1="495.50" y1="590.00" x2="495.50" y2="575.00" stroke="#222" stroke-width="0.6" /><rect x="530.00" y="590.00" width="14.00" height="20.00" fill="#fff" stroke="#111" stroke-width="1.5"/><rect x="532.20" y="592.20" width="9.60" height="15.60" fill="none" stroke="#aaa" stroke-width="0.5"/><text x="537.00" y="603.40" font-size="9" fill="#1a1a1a" text-anchor="middle" textLength="4.2" lengthAdjust="spacingAndGlyphs">6</text><line x1="537.00" y1="590.00" x2="537.00" y2="560.00" stroke="#222" stroke-width="0.6" /><line x1="147.00" y1="472.00" x2="166.00" y2="472.00" stroke="#333" stroke-width="0.5" /><line x1="166.00" y1="472.00" x2="166.00" y2="479.40" stroke="#333" stroke-width="0.5" /><path d="M163 476.4L166 479.4L169 476.4" fill="none" stroke="#333" stroke-width="0.5"/><line x1="160.00" y1="479.40" x2="179.50" y2="479.40" stroke="#666" stroke-width="0.5" /><text x="148.00" y="470.80" font-size="5" fill="#222" text-anchor="start" textLength="15" lengthAdjust="spacingAndGlyphs">+12,860</text><line x1="147.00" y1="482.30" x2="166.00" y2="482.30" stroke="#333" stroke-width="0.5" /><line x1="166.00" y1="482.30" x2="166.00" y2="490.30" stroke="#333" stroke-width="0.5" /><path d="M163 487.3L166 490.3L169 487.3" fill="none" stroke="#333" stroke-width="0.5"/><line x1="160.00" y1="490.30" x2="179.50" y2="490.30" stroke="#666" stroke-width="0.5" /><text x="148.00" y="481.10" font-size="5" fill="#222" text-anchor="start" textLength="15" lengthAdjust="spacingAndGlyphs">+11,570</text><line x1="147.00" y1="502.10" x2="166.00" y2="502.10" stroke="#333" stroke-width="0.5" /><line x1="166.00" y1="502.10" x2="166.00" y2="496.20" stroke="#333" stroke-width="0.5" /><path d="M163 499.2L166 496.2L169 499.2" fill="none" stroke="#333" stroke-width="0.5"/><line x1="160.00" y1="496.20" x2="179.50" y2="496.20" stroke="#666" stroke-width="0.5" /><text x="148.00" y="500.90" font-size="5" fill="#222" text-anchor="start" textLength="15" lengthAdjust="spacingAndGlyphs">+10,860</text><line x1="126.00" y1="512.00" x2="142.40" y2="512.00" stroke="#333" stroke-width="0.5" /><line x1="142.40" y1="512.00" x2="142.40" y2="518.90" stroke="#333" stroke-width="0.5" /><path d="M139.4 515.9L142.4 518.9L145.4 515.9" fill="none" stroke="#333" stroke-width="0.5"/><line x1="136.40" y1="518.90" x2="179.50" y2="518.90" stroke="#666" stroke-width="0.5" /><text x="127.00" y="510.80" font-size="5" fill="#222" text-anchor="start" textLength="15" lengthAdjust="spacingAndGlyphs">+7,650</text><line x1="147.00" y1="514.30" x2="166.00" y2="514.30" stroke="#333" stroke-width="0.5" /><line x1="166.00" y1="514.30" x2="166.00" y2="508.00" stroke="#333" stroke-width="0.5" /><path d="M163 511L166 508L169 511" fill="none" stroke="#333" stroke-width="0.5"/><line x1="160.00" y1="508.00" x2="179.50" y2="508.00" stroke="#666" stroke-width="0.5" /><text x="148.00" y="513.10" font-size="5" fill="#222" text-anchor="start" textLength="15" lengthAdjust="spacingAndGlyphs">+9,290</text><line x1="147.00" y1="530.60" x2="166.00" y2="530.60" stroke="#333" stroke-width="0.5" /><line x1="166.00" y1="530.60" x2="166.00" y2="523.80" stroke="#333" stroke-width="0.5" /><path d="M163 526.8L166 523.8L169 526.8" fill="none" stroke="#333" stroke-width="0.5"/><line x1="160.00" y1="523.80" x2="179.50" y2="523.80" stroke="#666" stroke-width="0.5" /><text x="148.00" y="529.40" font-size="5" fill="#222" text-anchor="start" textLength="15" lengthAdjust="spacingAndGlyphs">+7,260</text><line x1="126.00" y1="536.60" x2="142.40" y2="536.60" stroke="#333" stroke-width="0.5" /><line x1="142.40" y1="536.60" x2="142.40" y2="543.20" stroke="#333" stroke-width="0.5" /><path d="M139.4 540.2L142.4 543.2L145.4 540.2" fill="none" stroke="#333" stroke-width="0.5"/><line x1="136.40" y1="543.20" x2="179.50" y2="543.20" stroke="#666" stroke-width="0.5" /><text x="127.00" y="535.40" font-size="5" fill="#222" text-anchor="start" textLength="15" lengthAdjust="spacingAndGlyphs">+4,480</text><line x1="126.00" y1="556.00" x2="142.40" y2="556.00" stroke="#333" stroke-width="0.5" /><line x1="142.40" y1="556.00" x2="142.40" y2="548.50" stroke="#333" stroke-width="0.5" /><path d="M139.4 551.5L142.4 548.5L145.4 551.5" fill="none" stroke="#333" stroke-width="0.5"/><line x1="136.40" y1="548.50" x2="179.50" y2="548.50" stroke="#666" stroke-width="0.5" /><text x="127.00" y="554.80" font-size="5" fill="#222" text-anchor="start" textLength="15" lengthAdjust="spacingAndGlyphs">+3,780</text><line x1="147.00" y1="562.30" x2="166.00" y2="562.30" stroke="#333" stroke-width="0.5" /><line x1="166.00" y1="562.30" x2="166.00" y2="569.20" stroke="#333" stroke-width="0.5" /><path d="M163 566.2L166 569.2L169 566.2" fill="none" stroke="#333" stroke-width="0.5"/><line x1="160.00" y1="569.20" x2="179.50" y2="569.20" stroke="#666" stroke-width="0.5" /><text x="148.00" y="561.10" font-size="5" fill="#222" text-anchor="start" textLength="15" lengthAdjust="spacingAndGlyphs">+0,880</text><line x1="126.00" y1="569.20" x2="142.40" y2="569.20" stroke="#333" stroke-width="0.5" /><line x1="142.40" y1="569.20" x2="142.40" y2="576.10" stroke="#333" stroke-width="0.5" /><path d="M139.4 573.1L142.4 576.1L145.4 573.1" fill="none" stroke="#333" stroke-width="0.5"/><line x1="136.40" y1="576.10" x2="179.50" y2="576.10" stroke="#666" stroke-width="0.5" /><text x="127.00" y="568.00" font-size="5" fill="#222" text-anchor="start" textLength="15" lengthAdjust="spacingAndGlyphs">-0,020</text><line x1="120.00" y1="579.00" x2="140.00" y2="579.00" stroke="#333" stroke-width="0.5" /><line x1="140.00" y1="579.00" x2="140.00" y2="586.00" stroke="#333" stroke-width="0.5" /><path d="M137 583L140 586L143 583" fill="none" stroke="#333" stroke-width="0.5"/><line x1="134.00" y1="586.00" x2="179.50" y2="586.00" stroke="#666" stroke-width="0.5" /><text x="121.00" y="577.80" font-size="5" fill="#222" text-anchor="start" textLength="15" lengthAdjust="spacingAndGlyphs">-1,100</text><line x1="602.80" y1="446.60" x2="622.30" y2="446.60" stroke="#666" stroke-width="0.5" /><line x1="616.30" y1="440.10" x2="616.30" y2="446.60" stroke="#333" stroke-width="0.5" /><path d="M613.3 443.6L616.3 446.6L619.3 443.6" fill="none" stroke="#333" stroke-width="0.5"/><line x1="616.30" y1="440.10" x2="636.00" y2="440.10" stroke="#333" stroke-width="0.5" /><text x="618.30" y="438.90" font-size="5" fill="#222" text-anchor="start" textLength="15" lengthAdjust="spacingAndGlyphs">+17,550</text><line x1="602.80" y1="457.80" x2="622.30" y2="457.80" stroke="#666" stroke-width="0.5" /><line x1="616.30" y1="450.40" x2="616.30" y2="457.80" stroke="#333" stroke-width="0.5" /><path d="M613.3 454.8L616.3 457.8L619.3 454.8" fill="none" stroke="#333" stroke-width="0.5"/><line x1="616.30" y1="450.40" x2="636.00" y2="450.40" stroke="#333" stroke-width="0.5" /><text x="618.30" y="449.20" font-size="5" fill="#222" text-anchor="start" textLength="15" lengthAdjust="spacingAndGlyphs">+16,825</text><line x1="602.80" y1="484.90" x2="622.30" y2="484.90" stroke="#666" stroke-width="0.5" /><line x1="616.30" y1="476.70" x2="616.30" y2="484.90" stroke="#333" stroke-width="0.5" /><path d="M613.3 481.9L616.3 484.9L619.3 481.9" fill="none" stroke="#333" stroke-width="0.5"/><line x1="616.30" y1="476.70" x2="636.00" y2="476.70" stroke="#333" stroke-width="0.5" /><text x="618.30" y="475.50" font-size="5" fill="#222" text-anchor="start" textLength="15" lengthAdjust="spacingAndGlyphs">+12,260</text><line x1="602.80" y1="497.20" x2="622.30" y2="497.20" stroke="#666" stroke-width="0.5" /><line x1="616.30" y1="489.20" x2="616.30" y2="497.20" stroke="#333" stroke-width="0.5" /><path d="M613.3 494.2L616.3 497.2L619.3 494.2" fill="none" stroke="#333" stroke-width="0.5"/><line x1="616.30" y1="489.20" x2="636.00" y2="489.20" stroke="#333" stroke-width="0.5" /><text x="618.30" y="488.00" font-size="5" fill="#222" text-anchor="start" textLength="15" lengthAdjust="spacingAndGlyphs">+10,550</text><line x1="602.80" y1="514.00" x2="622.30" y2="514.00" stroke="#666" stroke-width="0.5" /><line x1="616.30" y1="506.90" x2="616.30" y2="514.00" stroke="#333" stroke-width="0.5" /><path d="M613.3 511L616.3 514L619.3 511" fill="none" stroke="#333" stroke-width="0.5"/><line x1="616.30" y1="506.90" x2="636.00" y2="506.90" stroke="#333" stroke-width="0.5" /><text x="618.30" y="505.70" font-size="5" fill="#222" text-anchor="start" textLength="15" lengthAdjust="spacingAndGlyphs">+8,250</text><line x1="602.80" y1="523.70" x2="622.30" y2="523.70" stroke="#666" stroke-width="0.5" /><line x1="616.30" y1="516.20" x2="616.30" y2="523.70" stroke="#333" stroke-width="0.5" /><path d="M613.3 520.7L616.3 523.7L619.3 520.7" fill="none" stroke="#333" stroke-width="0.5"/><line x1="616.30" y1="516.20" x2="636.00" y2="516.20" stroke="#333" stroke-width="0.5" /><text x="618.30" y="515.00" font-size="5" fill="#222" text-anchor="start" textLength="15" lengthAdjust="spacingAndGlyphs">+7,050</text><line x1="602.80" y1="543.50" x2="622.30" y2="543.50" stroke="#666" stroke-width="0.5" /><line x1="616.30" y1="536.00" x2="616.30" y2="543.50" stroke="#333" stroke-width="0.5" /><path d="M613.3 540.5L616.3 543.5L619.3 540.5" fill="none" stroke="#333" stroke-width="0.5"/><line x1="616.30" y1="536.00" x2="636.00" y2="536.00" stroke="#333" stroke-width="0.5" /><text x="618.30" y="534.80" font-size="5" fill="#222" text-anchor="start" textLength="15" lengthAdjust="spacingAndGlyphs">+4,350</text><line x1="602.80" y1="552.20" x2="622.30" y2="552.20" stroke="#666" stroke-width="0.5" /><line x1="616.30" y1="544.60" x2="616.30" y2="552.20" stroke="#333" stroke-width="0.5" /><path d="M613.3 549.2L616.3 552.2L619.3 549.2" fill="none" stroke="#333" stroke-width="0.5"/><line x1="616.30" y1="544.60" x2="636.00" y2="544.60" stroke="#333" stroke-width="0.5" /><text x="618.30" y="543.40" font-size="5" fill="#222" text-anchor="start" textLength="15" lengthAdjust="spacingAndGlyphs">+3,150</text><line x1="602.80" y1="573.30" x2="622.30" y2="573.30" stroke="#666" stroke-width="0.5" /><line x1="616.30" y1="565.10" x2="616.30" y2="573.30" stroke="#333" stroke-width="0.5" /><path d="M613.3 570.3L616.3 573.3L619.3 570.3" fill="none" stroke="#333" stroke-width="0.5"/><line x1="616.30" y1="565.10" x2="636.00" y2="565.10" stroke="#333" stroke-width="0.5" /><text x="618.30" y="563.90" font-size="5" fill="#222" text-anchor="start" textLength="15" lengthAdjust="spacingAndGlyphs">+0,450</text><line x1="602.80" y1="581.90" x2="622.30" y2="581.90" stroke="#666" stroke-width="0.5" /><line x1="616.30" y1="573.70" x2="616.30" y2="581.90" stroke="#333" stroke-width="0.5" /><path d="M613.3 578.9L616.3 581.9L619.3 578.9" fill="none" stroke="#333" stroke-width="0.5"/><line x1="616.30" y1="573.70" x2="636.00" y2="573.70" stroke="#333" stroke-width="0.5" /><text x="618.30" y="572.50" font-size="5" fill="#222" text-anchor="start" textLength="15" lengthAdjust="spacingAndGlyphs">-0,500</text><line x1="182.50" y1="586.00" x2="182.50" y2="627.00" stroke="#bbb" stroke-width="0.5" /><line x1="230.70" y1="586.00" x2="230.70" y2="627.00" stroke="#bbb" stroke-width="0.5" /><line x1="253.90" y1="586.00" x2="253.90" y2="627.00" stroke="#bbb" stroke-width="0.5" /><line x1="301.20" y1="586.00" x2="301.20" y2="627.00" stroke="#bbb" stroke-width="0.5" /><line x1="346.40" y1="586.00" x2="346.40" y2="627.00" stroke="#bbb" stroke-width="0.5" /><line x1="391.00" y1="586.00" x2="391.00" y2="627.00" stroke="#bbb" stroke-width="0.5" /><line x1="413.60" y1="586.00" x2="413.60" y2="627.00" stroke="#bbb" stroke-width="0.5" /><line x1="435.30" y1="586.00" x2="435.30" y2="627.00" stroke="#bbb" stroke-width="0.5" /><line x1="437.50" y1="586.00" x2="437.50" y2="627.00" stroke="#bbb" stroke-width="0.5" /><line x1="478.00" y1="586.00" x2="478.00" y2="627.00" stroke="#bbb" stroke-width="0.5" /><line x1="483.20" y1="586.00" x2="483.20" y2="627.00" stroke="#bbb" stroke-width="0.5" /><line x1="515.00" y1="586.00" x2="515.00" y2="627.00" stroke="#bbb" stroke-width="0.5" /><line x1="528.00" y1="586.00" x2="528.00" y2="627.00" stroke="#bbb" stroke-width="0.5" /><line x1="551.30" y1="586.00" x2="551.30" y2="627.00" stroke="#bbb" stroke-width="0.5" /><line x1="598.60" y1="586.00" x2="598.60" y2="627.00" stroke="#bbb" stroke-width="0.5" /><line x1="182.50" y1="616.60" x2="598.60" y2="616.60" stroke="#333" stroke-width="0.6" /><line x1="182.50" y1="626.90" x2="598.60" y2="626.90" stroke="#333" stroke-width="0.6" /><line x1="180.90" y1="618.20" x2="184.10" y2="615.00" stroke="#111" stroke-width="0.9" /><line x1="229.10" y1="618.20" x2="232.30" y2="615.00" stroke="#111" stroke-width="0.9" /><line x1="252.30" y1="618.20" x2="255.50" y2="615.00" stroke="#111" stroke-width="0.9" /><line x1="299.60" y1="618.20" x2="302.80" y2="615.00" stroke="#111" stroke-width="0.9" /><line x1="344.80" y1="618.20" x2="348.00" y2="615.00" stroke="#111" stroke-width="0.9" /><line x1="389.40" y1="618.20" x2="392.60" y2="615.00" stroke="#111" stroke-width="0.9" /><line x1="412.00" y1="618.20" x2="415.20" y2="615.00" stroke="#111" stroke-width="0.9" /><line x1="433.70" y1="618.20" x2="436.90" y2="615.00" stroke="#111" stroke-width="0.9" /><line x1="435.90" y1="618.20" x2="439.10" y2="615.00" stroke="#111" stroke-width="0.9" /><line x1="476.40" y1="618.20" x2="479.60" y2="615.00" stroke="#111" stroke-width="0.9" /><line x1="481.60" y1="618.20" x2="484.80" y2="615.00" stroke="#111" stroke-width="0.9" /><line x1="513.40" y1="618.20" x2="516.60" y2="615.00" stroke="#111" stroke-width="0.9" /><line x1="526.40" y1="618.20" x2="529.60" y2="615.00" stroke="#111" stroke-width="0.9" /><line x1="549.70" y1="618.20" x2="552.90" y2="615.00" stroke="#111" stroke-width="0.9" /><line x1="597.00" y1="618.20" x2="600.20" y2="615.00" stroke="#111" stroke-width="0.9" /><line x1="180.90" y1="628.50" x2="184.10" y2="625.30" stroke="#111" stroke-width="0.9" /><line x1="597.00" y1="628.50" x2="600.20" y2="625.30" stroke="#111" stroke-width="0.9" /><text x="206.60" y="614.60" font-size="4.2" fill="#333" text-anchor="middle" textLength="9.0" lengthAdjust="spacingAndGlyphs">6370</text><text x="242.30" y="614.60" font-size="4.2" fill="#333" text-anchor="middle" textLength="9.0" lengthAdjust="spacingAndGlyphs">3120</text><text x="277.55" y="614.60" font-size="4.2" fill="#333" text-anchor="middle" textLength="9.0" lengthAdjust="spacingAndGlyphs">6370</text><text x="323.80" y="614.60" font-size="4.2" fill="#333" text-anchor="middle" textLength="9.0" lengthAdjust="spacingAndGlyphs">6000</text><text x="368.70" y="614.60" font-size="4.2" fill="#333" text-anchor="middle" textLength="9.0" lengthAdjust="spacingAndGlyphs">6000</text><text x="402.30" y="614.60" font-size="4.2" fill="#333" text-anchor="middle" textLength="9.0" lengthAdjust="spacingAndGlyphs">3120</text><text x="424.45" y="614.60" font-size="4.2" fill="#333" text-anchor="middle" textLength="9.0" lengthAdjust="spacingAndGlyphs">2850</text><text x="436.40" y="614.60" font-size="4.2" fill="#333" text-anchor="middle" textLength="4.0" lengthAdjust="spacingAndGlyphs">450</text><text x="457.75" y="614.60" font-size="4.2" fill="#333" text-anchor="middle" textLength="9.0" lengthAdjust="spacingAndGlyphs">5640</text><text x="480.60" y="614.60" font-size="4.2" fill="#333" text-anchor="middle" textLength="4.0" lengthAdjust="spacingAndGlyphs">420</text><text x="499.10" y="614.60" font-size="4.2" fill="#333" text-anchor="middle" textLength="9.0" lengthAdjust="spacingAndGlyphs">4210</text><text x="521.50" y="614.60" font-size="4.2" fill="#333" text-anchor="middle" textLength="9.0" lengthAdjust="spacingAndGlyphs">1740</text><text x="539.65" y="614.60" font-size="4.2" fill="#333" text-anchor="middle" textLength="9.0" lengthAdjust="spacingAndGlyphs">3120</text><text x="574.95" y="614.60" font-size="4.2" fill="#333" text-anchor="middle" textLength="9.0" lengthAdjust="spacingAndGlyphs">6370</text><text x="424.00" y="626.00" font-size="4.2" fill="#333" text-anchor="middle" textLength="11" lengthAdjust="spacingAndGlyphs">55720</text><circle cx="182.5" cy="635.9" r="5.4" fill="#fff" stroke="#333" stroke-width="0.6"/><text x="182.50" y="638.00" font-size="5.4" fill="#222" text-anchor="middle" textLength="6.0" lengthAdjust="spacingAndGlyphs">15</text><circle cx="230.7" cy="635.9" r="5.4" fill="#fff" stroke="#333" stroke-width="0.6"/><text x="230.70" y="638.00" font-size="5.4" fill="#222" text-anchor="middle" textLength="6.0" lengthAdjust="spacingAndGlyphs">14</text><circle cx="253.9" cy="635.9" r="5.4" fill="#fff" stroke="#333" stroke-width="0.6"/><text x="253.90" y="638.00" font-size="5.4" fill="#222" text-anchor="middle" textLength="6.0" lengthAdjust="spacingAndGlyphs">13</text><circle cx="301.2" cy="635.9" r="5.4" fill="#fff" stroke="#333" stroke-width="0.6"/><text x="301.20" y="638.00" font-size="5.4" fill="#222" text-anchor="middle" textLength="6.0" lengthAdjust="spacingAndGlyphs">12</text><circle cx="346.4" cy="635.9" r="5.4" fill="#fff" stroke="#333" stroke-width="0.6"/><text x="346.40" y="638.00" font-size="5.4" fill="#222" text-anchor="middle" textLength="6.0" lengthAdjust="spacingAndGlyphs">11</text><circle cx="391" cy="635.9" r="5.4" fill="#fff" stroke="#333" stroke-width="0.6"/><text x="391.00" y="638.00" font-size="5.4" fill="#222" text-anchor="middle" textLength="6.0" lengthAdjust="spacingAndGlyphs">10</text><circle cx="413.6" cy="635.9" r="5.4" fill="#fff" stroke="#333" stroke-width="0.6"/><text x="413.60" y="638.00" font-size="5.4" fill="#222" text-anchor="middle" textLength="3.0" lengthAdjust="spacingAndGlyphs">9</text><circle cx="435.3" cy="635.9" r="5.4" fill="#fff" stroke="#333" stroke-width="0.6"/><text x="435.30" y="638.00" font-size="5.4" fill="#222" text-anchor="middle" textLength="3.0" lengthAdjust="spacingAndGlyphs">8</text><circle cx="447.3" cy="635.9" r="5.4" fill="#fff" stroke="#333" stroke-width="0.6"/><text x="447.30" y="638.00" font-size="5.4" fill="#222" text-anchor="middle" textLength="3.0" lengthAdjust="spacingAndGlyphs">7</text><circle cx="470" cy="635.9" r="5.4" fill="#fff" stroke="#333" stroke-width="0.6"/><text x="470.00" y="638.00" font-size="5.4" fill="#222" text-anchor="middle" textLength="3.0" lengthAdjust="spacingAndGlyphs">6</text><circle cx="483.2" cy="635.9" r="5.4" fill="#fff" stroke="#333" stroke-width="0.6"/><text x="483.20" y="638.00" font-size="5.4" fill="#222" text-anchor="middle" textLength="3.0" lengthAdjust="spacingAndGlyphs">5</text><circle cx="515" cy="635.9" r="5.4" fill="#fff" stroke="#333" stroke-width="0.6"/><text x="515.00" y="638.00" font-size="5.4" fill="#222" text-anchor="middle" textLength="3.0" lengthAdjust="spacingAndGlyphs">4</text><circle cx="528" cy="635.9" r="5.4" fill="#fff" stroke="#333" stroke-width="0.6"/><text x="528.00" y="638.00" font-size="5.4" fill="#222" text-anchor="middle" textLength="3.0" lengthAdjust="spacingAndGlyphs">3</text><circle cx="551.3" cy="635.9" r="5.4" fill="#fff" stroke="#333" stroke-width="0.6"/><text x="551.30" y="638.00" font-size="5.4" fill="#222" text-anchor="middle" textLength="3.0" lengthAdjust="spacingAndGlyphs">2</text><circle cx="598.6" cy="635.9" r="5.4" fill="#fff" stroke="#333" stroke-width="0.6"/><text x="598.60" y="638.00" font-size="5.4" fill="#222" text-anchor="middle" textLength="3.0" lengthAdjust="spacingAndGlyphs">1</text><rect x="672.30" y="653.40" width="276.20" height="81.70" fill="none" stroke="#777" stroke-width="0.8"/><line x1="672.30" y1="653.40" x2="769.50" y2="653.40" stroke="#222" stroke-width="0.9" /><line x1="672.30" y1="653.40" x2="672.30" y2="735.10" stroke="#222" stroke-width="0.9" /><line x1="769.50" y1="653.40" x2="769.50" y2="735.10" stroke="#222" stroke-width="1" /><line x1="687.50" y1="653.40" x2="687.50" y2="690.40" stroke="#222" stroke-width="0.9" /><line x1="702.50" y1="653.40" x2="702.50" y2="690.40" stroke="#222" stroke-width="0.9" /><line x1="717.50" y1="653.40" x2="717.50" y2="690.40" stroke="#222" stroke-width="0.9" /><line x1="754.50" y1="653.40" x2="754.50" y2="690.40" stroke="#222" stroke-width="0.9" /><line x1="732.40" y1="653.40" x2="732.40" y2="690.40" stroke="#555" stroke-width="0.6" /><line x1="672.30" y1="660.40" x2="769.50" y2="660.40" stroke="#888" stroke-width="0.5" /><line x1="672.30" y1="668.00" x2="769.50" y2="668.00" stroke="#888" stroke-width="0.5" /><line x1="672.30" y1="676.00" x2="769.50" y2="676.00" stroke="#888" stroke-width="0.5" /><line x1="672.30" y1="683.30" x2="769.50" y2="683.30" stroke="#222" stroke-width="0.9" /><line x1="672.30" y1="690.40" x2="769.50" y2="690.40" stroke="#222" stroke-width="0.9" /><line x1="672.30" y1="698.00" x2="769.50" y2="698.00" stroke="#888" stroke-width="0.5" /><line x1="672.30" y1="705.40" x2="769.50" y2="705.40" stroke="#888" stroke-width="0.5" /><line x1="672.30" y1="712.70" x2="769.50" y2="712.70" stroke="#888" stroke-width="0.5" /><line x1="672.30" y1="720.40" x2="769.50" y2="720.40" stroke="#888" stroke-width="0.5" /><line x1="702.50" y1="690.40" x2="702.50" y2="735.10" stroke="#777" stroke-width="0.5" /><line x1="732.40" y1="690.40" x2="732.40" y2="735.10" stroke="#777" stroke-width="0.5" /><line x1="754.50" y1="690.40" x2="754.50" y2="735.10" stroke="#777" stroke-width="0.5" /><line x1="769.50" y1="668.60" x2="948.50" y2="668.60" stroke="#555" stroke-width="0.6" /><line x1="769.50" y1="690.40" x2="948.50" y2="690.40" stroke="#555" stroke-width="0.6" /><line x1="769.50" y1="712.70" x2="948.50" y2="712.70" stroke="#555" stroke-width="0.6" /><line x1="873.30" y1="690.40" x2="873.30" y2="735.10" stroke="#555" stroke-width="0.6" /><line x1="896.20" y1="690.40" x2="896.20" y2="712.70" stroke="#555" stroke-width="0.6" /><line x1="918.30" y1="690.40" x2="918.30" y2="712.70" stroke="#555" stroke-width="0.6" /><line x1="873.30" y1="698.50" x2="948.50" y2="698.50" stroke="#888" stroke-width="0.5" /><text x="858.60" y="664.00" font-size="7.4" fill="#222" text-anchor="middle" textLength="38" lengthAdjust="spacingAndGlyphs">741-20-АР.ГЧ</text><text x="858.60" y="677.50" font-size="5" fill="#1a1a1a" text-anchor="middle" textLength="156" lengthAdjust="spacingAndGlyphs">Общеобразовательная школа на 825 мест учащихся в микрорайоне №2</text><text x="858.60" y="684.80" font-size="5" fill="#1a1a1a" text-anchor="middle" textLength="142" lengthAdjust="spacingAndGlyphs">Столичного жилого района в Индустриальном районе г. Ижевска</text><text x="884.80" y="696.00" font-size="4.4" fill="#333" text-anchor="middle" >Стадия</text><text x="907.20" y="696.00" font-size="4.4" fill="#333" text-anchor="middle" >Лист</text><text x="933.40" y="696.00" font-size="4.4" fill="#333" text-anchor="middle" >Листов</text><text x="884.80" y="707.40" font-size="5.2" fill="#333" text-anchor="middle" >П</text><text x="907.20" y="707.40" font-size="5.2" fill="#333" text-anchor="middle" >2</text><text x="821.40" y="722.60" font-size="5.2" fill="#1a1a1a" text-anchor="middle" textLength="100" lengthAdjust="spacingAndGlyphs">Фасад 1-15. Фасад 15-1. Ведомость наружной</text><text x="821.40" y="729.60" font-size="5.2" fill="#1a1a1a" text-anchor="middle" textLength="18" lengthAdjust="spacingAndGlyphs">отделки</text><text x="912.50" y="726.60" font-size="5.4" fill="#1a1a1a" text-anchor="middle" textLength="50" lengthAdjust="spacingAndGlyphs">ООО "АСПЭК-Интерсервис"</text><text x="679.90" y="688.60" font-size="4.6" fill="#1a1a1a" text-anchor="middle" textLength="8.4" lengthAdjust="spacingAndGlyphs">Изм.</text><text x="695.00" y="688.60" font-size="4.6" fill="#1a1a1a" text-anchor="middle" textLength="12.6" lengthAdjust="spacingAndGlyphs">Кол.уч</text><text x="710.00" y="688.60" font-size="4.6" fill="#1a1a1a" text-anchor="middle" textLength="8.4" lengthAdjust="spacingAndGlyphs">Лист</text><text x="725.00" y="688.60" font-size="4.6" fill="#1a1a1a" text-anchor="middle" textLength="10.5" lengthAdjust="spacingAndGlyphs">№док.</text><text x="743.50" y="688.60" font-size="4.6" fill="#1a1a1a" text-anchor="middle" textLength="10.5" lengthAdjust="spacingAndGlyphs">Подп.</text><text x="762.00" y="688.60" font-size="4.6" fill="#1a1a1a" text-anchor="middle" textLength="8.4" lengthAdjust="spacingAndGlyphs">Дата</text><text x="679.90" y="681.60" font-size="4.6" fill="#1a1a1a" text-anchor="middle" >5</text><text x="695.00" y="681.60" font-size="4.6" fill="#1a1a1a" text-anchor="middle" >-</text><text x="710.00" y="681.60" font-size="4.6" fill="#1a1a1a" text-anchor="middle" >Зам.</text><text x="725.00" y="681.60" font-size="4.6" fill="#888" text-anchor="middle" >142-22</text><text x="762.00" y="681.60" font-size="4.6" fill="#1a1a1a" text-anchor="middle" >04.22</text><text x="673.20" y="695.60" font-size="4.6" fill="#1a1a1a" text-anchor="start" textLength="21" lengthAdjust="spacingAndGlyphs">Разработал</text><text x="704.00" y="695.60" font-size="4.6" fill="#1a1a1a" text-anchor="start" textLength="18" lengthAdjust="spacingAndGlyphs">Курбатов</text><text x="762.00" y="695.60" font-size="4.6" fill="#1a1a1a" text-anchor="middle" >04.22</text><text x="673.20" y="732.60" font-size="4.6" fill="#1a1a1a" text-anchor="start" >ГИП</text><text x="704.00" y="732.60" font-size="4.6" fill="#1a1a1a" text-anchor="start" textLength="18" lengthAdjust="spacingAndGlyphs">Родионов</text><text x="762.00" y="732.60" font-size="4.6" fill="#1a1a1a" text-anchor="middle" >04.22</text><g opacity="0.45" filter="url(#blur)"><path d="M837 223L889 128" stroke="#000" stroke-width="3.6"/><path d="M895 116L882 125L895 131Z" fill="#000"/></g><path d="M833.8 218.6L886 121.4" stroke="#c20000" stroke-width="3.4"/><path d="M891.6 110.2L878.2 119.8L891.8 125.6Z" fill="#c20000"/></svg><svg class="i" style="left:979px;top:29px" width="817" height="783" viewBox="979 29 817 783"><rect x="1151.0" y="484" width="1.8" height="23.6" fill="#8a8a8a"/><rect x="1156.5" y="484" width="1.8" height="23.0" fill="#a8a8a8"/><rect x="1160.0" y="484" width="1.8" height="23.4" fill="#8a8a8a"/><rect x="1163.5" y="484" width="1.8" height="19.6" fill="#eeeeee"/><rect x="1167.0" y="484" width="1.8" height="18.4" fill="#d8d8d8"/><rect x="1172.5" y="484" width="1.8" height="19.8" fill="#a8a8a8"/><rect x="1175.0" y="484" width="1.8" height="18.1" fill="#d8d8d8"/><rect x="1177.5" y="484" width="1.8" height="13.8" fill="#a8a8a8"/><rect x="1180.0" y="484" width="1.8" height="15.5" fill="#eeeeee"/><rect x="1185.5" y="484" width="1.8" height="12.0" fill="#a8a8a8"/><rect x="1189.0" y="484" width="1.8" height="10.7" fill="#8a8a8a"/><rect x="1191.5" y="484" width="1.8" height="12.1" fill="#8a8a8a"/><rect x="1196.0" y="484" width="1.8" height="13.4" fill="#d8d8d8"/><rect x="1200.5" y="484" width="1.8" height="15.2" fill="#a8a8a8"/><rect x="1205.0" y="484" width="1.8" height="16.1" fill="#d8d8d8"/><rect x="1210.5" y="484" width="1.8" height="18.5" fill="#eeeeee"/><rect x="1216.0" y="484" width="1.8" height="20.1" fill="#d8d8d8"/><rect x="1218.5" y="484" width="1.8" height="21.3" fill="#d8d8d8"/><rect x="1224.0" y="484" width="1.8" height="23.0" fill="#8a8a8a"/><rect x="1229.5" y="484" width="1.8" height="22.3" fill="#a8a8a8"/><rect x="1234.0" y="484" width="1.8" height="23.3" fill="#eeeeee"/><rect x="1238.5" y="484" width="1.8" height="21.5" fill="#8a8a8a"/><rect x="1241.0" y="484" width="1.8" height="21.6" fill="#d8d8d8"/><rect x="1243.5" y="484" width="1.8" height="20.8" fill="#8a8a8a"/><rect x="1247.0" y="484" width="1.8" height="22.4" fill="#a8a8a8"/><rect x="1252.5" y="484" width="1.8" height="19.9" fill="#a8a8a8"/><rect x="1258.0" y="484" width="1.8" height="18.2" fill="#d8d8d8"/><rect x="1263.5" y="484" width="1.8" height="14.8" fill="#a8a8a8"/><rect x="1266.0" y="484" width="1.8" height="13.0" fill="#eeeeee"/><rect x="1268.5" y="484" width="1.8" height="11.5" fill="#8a8a8a"/><rect x="1271.0" y="484" width="1.8" height="9.5" fill="#a8a8a8"/><rect x="1274.5" y="484" width="1.8" height="10.2" fill="#d8d8d8"/><rect x="1279.0" y="484" width="1.8" height="14.1" fill="#8a8a8a"/><rect x="1281.5" y="484" width="1.8" height="12.3" fill="#a8a8a8"/><rect x="1285.0" y="484" width="1.8" height="13.8" fill="#eeeeee"/><rect x="1289.5" y="484" width="1.8" height="18.2" fill="#a8a8a8"/><rect x="1295.0" y="484" width="1.8" height="21.3" fill="#a8a8a8"/><rect x="1300.5" y="484" width="1.8" height="20.5" fill="#a8a8a8"/><rect x="1305.0" y="484" width="1.8" height="24.5" fill="#a8a8a8"/><rect x="1308.5" y="484" width="1.8" height="22.1" fill="#a8a8a8"/><rect x="1314.0" y="484" width="1.8" height="25.5" fill="#d8d8d8"/><rect x="1319.5" y="484" width="1.8" height="22.1" fill="#d8d8d8"/><rect x="1322.0" y="484" width="1.8" height="23.7" fill="#eeeeee"/><rect x="1325.5" y="484" width="1.8" height="24.1" fill="#8a8a8a"/><rect x="1330.0" y="484" width="1.8" height="21.9" fill="#8a8a8a"/><rect x="1334.5" y="484" width="1.8" height="21.0" fill="#d8d8d8"/><rect x="1338.0" y="484" width="1.8" height="18.6" fill="#d8d8d8"/><rect x="1342.5" y="484" width="1.8" height="16.7" fill="#a8a8a8"/><rect x="1345.0" y="484" width="1.8" height="15.0" fill="#8a8a8a"/><rect x="1350.5" y="484" width="1.8" height="13.1" fill="#d8d8d8"/><rect x="1354.0" y="484" width="1.8" height="11.5" fill="#a8a8a8"/><rect x="1356.5" y="484" width="1.8" height="10.5" fill="#8a8a8a"/><rect x="1361.0" y="484" width="1.8" height="11.9" fill="#a8a8a8"/><rect x="1363.5" y="484" width="1.8" height="14.3" fill="#8a8a8a"/><rect x="1368.0" y="484" width="1.8" height="15.6" fill="#d8d8d8"/><rect x="1370.5" y="484" width="1.8" height="16.4" fill="#d8d8d8"/><rect x="1376.0" y="484" width="1.8" height="16.7" fill="#eeeeee"/><rect x="1380.5" y="484" width="1.8" height="18.7" fill="#d8d8d8"/><rect x="1383.0" y="484" width="1.8" height="20.8" fill="#eeeeee"/><rect x="1385.5" y="484" width="1.8" height="23.4" fill="#a8a8a8"/><rect x="1390.0" y="484" width="1.8" height="22.3" fill="#8a8a8a"/><rect x="1392.5" y="484" width="1.8" height="24.8" fill="#8a8a8a"/><rect x="1395.0" y="484" width="1.8" height="25.1" fill="#d8d8d8"/><rect x="1400.5" y="484" width="1.8" height="23.5" fill="#d8d8d8"/><rect x="1403.0" y="484" width="1.8" height="22.3" fill="#d8d8d8"/><rect x="1407.5" y="484" width="1.8" height="25.1" fill="#eeeeee"/><rect x="1413.0" y="484" width="1.8" height="24.4" fill="#8a8a8a"/><rect x="1418.5" y="484" width="1.8" height="21.0" fill="#d8d8d8"/><rect x="1421.0" y="484" width="1.8" height="19.6" fill="#d8d8d8"/><rect x="1426.5" y="484" width="1.8" height="16.3" fill="#d8d8d8"/><rect x="1432.0" y="484" width="1.8" height="16.9" fill="#8a8a8a"/><rect x="1436.5" y="484" width="1.8" height="15.1" fill="#eeeeee"/><rect x="1441.0" y="484" width="1.8" height="9.8" fill="#a8a8a8"/><rect x="1444.5" y="484" width="1.8" height="11.6" fill="#eeeeee"/><rect x="1450.0" y="484" width="1.8" height="13.4" fill="#a8a8a8"/><rect x="1454.5" y="484" width="1.8" height="15.2" fill="#eeeeee"/><rect x="1458.0" y="484" width="1.8" height="17.7" fill="#a8a8a8"/><rect x="1461.5" y="484" width="1.8" height="18.2" fill="#eeeeee"/><rect x="1465.0" y="484" width="1.8" height="18.6" fill="#8a8a8a"/><rect x="1469.5" y="484" width="1.8" height="22.9" fill="#d8d8d8"/><rect x="1472.0" y="484" width="1.8" height="24.0" fill="#eeeeee"/><rect x="1475.5" y="484" width="1.8" height="21.4" fill="#8a8a8a"/><rect x="1480.0" y="484" width="1.8" height="25.4" fill="#8a8a8a"/><rect x="1485.5" y="484" width="1.8" height="24.5" fill="#8a8a8a"/><rect x="1490.0" y="484" width="1.8" height="24.7" fill="#8a8a8a"/><rect x="1494.5" y="484" width="1.8" height="21.6" fill="#d8d8d8"/><rect x="1499.0" y="484" width="1.8" height="23.9" fill="#d8d8d8"/><rect x="1503.5" y="484" width="1.8" height="21.4" fill="#eeeeee"/><rect x="1506.0" y="484" width="1.8" height="20.9" fill="#8a8a8a"/><rect x="1511.5" y="484" width="1.8" height="16.9" fill="#eeeeee"/><rect x="1515.0" y="484" width="1.8" height="17.8" fill="#d8d8d8"/><rect x="1517.5" y="484" width="1.8" height="15.3" fill="#eeeeee"/><rect x="1520.0" y="484" width="1.8" height="15.0" fill="#a8a8a8"/><rect x="1525.5" y="484" width="1.8" height="10.5" fill="#d8d8d8"/><rect x="1531.0" y="484" width="1.8" height="11.5" fill="#d8d8d8"/><rect x="1534.5" y="484" width="1.8" height="12.1" fill="#eeeeee"/><rect x="1538.0" y="484" width="1.8" height="14.5" fill="#a8a8a8"/><rect x="1540.5" y="484" width="1.8" height="15.7" fill="#8a8a8a"/><rect x="1544.0" y="484" width="1.8" height="17.5" fill="#a8a8a8"/><rect x="1546.5" y="484" width="1.8" height="18.2" fill="#eeeeee"/><rect x="1552.0" y="484" width="1.8" height="20.1" fill="#a8a8a8"/><rect x="1554.5" y="484" width="1.8" height="22.4" fill="#d8d8d8"/><rect x="1558.0" y="484" width="1.8" height="21.4" fill="#8a8a8a"/><rect x="1560.5" y="484" width="1.8" height="24.9" fill="#eeeeee"/><rect x="1150.5" y="484" width="3" height="23" rx="1.2" fill="#f6f6f6"/><rect x="1151.0" y="484" width="1" height="22" fill="#fff"/><rect x="1162.5" y="484" width="3" height="23" rx="1.2" fill="#f6f6f6"/><rect x="1163.0" y="484" width="1" height="22" fill="#fff"/><rect x="1174.4" y="484" width="3" height="23" rx="1.2" fill="#f6f6f6"/><rect x="1174.9" y="484" width="1" height="22" fill="#fff"/><rect x="1186.3" y="484" width="3" height="23" rx="1.2" fill="#f6f6f6"/><rect x="1186.8" y="484" width="1" height="22" fill="#fff"/><rect x="1198.3" y="484" width="3" height="23" rx="1.2" fill="#f6f6f6"/><rect x="1198.8" y="484" width="1" height="22" fill="#fff"/><rect x="1210.2" y="484" width="3" height="23" rx="1.2" fill="#f6f6f6"/><rect x="1210.8" y="484" width="1" height="22" fill="#fff"/><rect x="1222.2" y="484" width="3" height="23" rx="1.2" fill="#f6f6f6"/><rect x="1222.7" y="484" width="1" height="22" fill="#fff"/><rect x="1234.2" y="484" width="3" height="23" rx="1.2" fill="#f6f6f6"/><rect x="1234.7" y="484" width="1" height="22" fill="#fff"/><rect x="1246.1" y="484" width="3" height="23" rx="1.2" fill="#f6f6f6"/><rect x="1246.6" y="484" width="1" height="22" fill="#fff"/><rect x="1258.0" y="484" width="3" height="23" rx="1.2" fill="#f6f6f6"/><rect x="1258.5" y="484" width="1" height="22" fill="#fff"/><rect x="1270.0" y="484" width="3" height="23" rx="1.2" fill="#f6f6f6"/><rect x="1270.5" y="484" width="1" height="22" fill="#fff"/><rect x="1282.0" y="484" width="3" height="23" rx="1.2" fill="#f6f6f6"/><rect x="1282.5" y="484" width="1" height="22" fill="#fff"/><rect x="1293.9" y="484" width="3" height="23" rx="1.2" fill="#f6f6f6"/><rect x="1294.4" y="484" width="1" height="22" fill="#fff"/><rect x="1305.8" y="484" width="3" height="23" rx="1.2" fill="#f6f6f6"/><rect x="1306.3" y="484" width="1" height="22" fill="#fff"/><rect x="1317.8" y="484" width="3" height="23" rx="1.2" fill="#f6f6f6"/><rect x="1318.3" y="484" width="1" height="22" fill="#fff"/><rect x="1329.8" y="484" width="3" height="23" rx="1.2" fill="#f6f6f6"/><rect x="1330.2" y="484" width="1" height="22" fill="#fff"/><rect x="1341.7" y="484" width="3" height="23" rx="1.2" fill="#f6f6f6"/><rect x="1342.2" y="484" width="1" height="22" fill="#fff"/><rect x="1353.7" y="484" width="3" height="23" rx="1.2" fill="#f6f6f6"/><rect x="1354.2" y="484" width="1" height="22" fill="#fff"/><rect x="1365.6" y="484" width="3" height="23" rx="1.2" fill="#f6f6f6"/><rect x="1366.1" y="484" width="1" height="22" fill="#fff"/><rect x="1377.5" y="484" width="3" height="23" rx="1.2" fill="#f6f6f6"/><rect x="1378.0" y="484" width="1" height="22" fill="#fff"/><rect x="1389.5" y="484" width="3" height="23" rx="1.2" fill="#f6f6f6"/><rect x="1390.0" y="484" width="1" height="22" fill="#fff"/><rect x="1401.5" y="484" width="3" height="23" rx="1.2" fill="#f6f6f6"/><rect x="1402.0" y="484" width="1" height="22" fill="#fff"/><rect x="1413.4" y="484" width="3" height="23" rx="1.2" fill="#f6f6f6"/><rect x="1413.9" y="484" width="1" height="22" fill="#fff"/><rect x="1425.3" y="484" width="3" height="23" rx="1.2" fill="#f6f6f6"/><rect x="1425.8" y="484" width="1" height="22" fill="#fff"/><rect x="1437.3" y="484" width="3" height="23" rx="1.2" fill="#f6f6f6"/><rect x="1437.8" y="484" width="1" height="22" fill="#fff"/><rect x="1449.2" y="484" width="3" height="23" rx="1.2" fill="#f6f6f6"/><rect x="1449.8" y="484" width="1" height="22" fill="#fff"/><rect x="1461.2" y="484" width="3" height="23" rx="1.2" fill="#f6f6f6"/><rect x="1461.7" y="484" width="1" height="22" fill="#fff"/><rect x="1473.2" y="484" width="3" height="23" rx="1.2" fill="#f6f6f6"/><rect x="1473.7" y="484" width="1" height="22" fill="#fff"/><rect x="1485.1" y="484" width="3" height="23" rx="1.2" fill="#f6f6f6"/><rect x="1485.6" y="484" width="1" height="22" fill="#fff"/><rect x="1497.0" y="484" width="3" height="23" rx="1.2" fill="#f6f6f6"/><rect x="1497.5" y="484" width="1" height="22" fill="#fff"/><rect x="1509.0" y="484" width="3" height="23" rx="1.2" fill="#f6f6f6"/><rect x="1509.5" y="484" width="1" height="22" fill="#fff"/><rect x="1521.0" y="484" width="3" height="23" rx="1.2" fill="#f6f6f6"/><rect x="1521.5" y="484" width="1" height="22" fill="#fff"/><rect x="1532.9" y="484" width="3" height="23" rx="1.2" fill="#f6f6f6"/><rect x="1533.4" y="484" width="1" height="22" fill="#fff"/><rect x="1544.8" y="484" width="3" height="23" rx="1.2" fill="#f6f6f6"/><rect x="1545.3" y="484" width="1" height="22" fill="#fff"/><rect x="1556.8" y="484" width="3" height="23" rx="1.2" fill="#f6f6f6"/><rect x="1557.3" y="484" width="1" height="22" fill="#fff"/><rect x="1279.5" y="484" width="3" height="31.5" rx="1.2" fill="#f6f6f6"/><rect x="1296.7" y="484" width="3" height="31.5" rx="1.2" fill="#f6f6f6"/><rect x="1313.8" y="484" width="3" height="31.5" rx="1.2" fill="#f6f6f6"/><rect x="1331.0" y="484" width="3" height="31.5" rx="1.2" fill="#f6f6f6"/><rect x="1348.1" y="484" width="3" height="31.5" rx="1.2" fill="#f6f6f6"/><rect x="1365.2" y="484" width="3" height="31.5" rx="1.2" fill="#f6f6f6"/><rect x="1382.4" y="484" width="3" height="31.5" rx="1.2" fill="#f6f6f6"/><rect x="1399.5" y="484" width="3" height="31.5" rx="1.2" fill="#f6f6f6"/><rect x="1416.7" y="484" width="3" height="31.5" rx="1.2" fill="#f6f6f6"/><rect x="1433.8" y="484" width="3" height="31.5" rx="1.2" fill="#f6f6f6"/><path d="M1057 456L1149 447.5H1566L1657 465.5L1726 465V468L1639 467.5L1540 458.5L1057 456Z" fill="#4c4d56"/><path d="M1057 456L1540 458.5Q1600 460 1639 467.5V488Q1600 484 1540 484H1057Z" fill="#868899"/><defs><linearGradient id="sg" x1="0" x2="1"><stop offset="0" stop-color="#868899"/><stop offset="1" stop-color="#66657a"/></linearGradient></defs><path d="M1540 458.5Q1600 460 1639 467.5V488Q1600 484 1540 484Z" fill="url(#sg)"/><path d="M1639 468L1726 465V496H1639Z" fill="#868899"/><rect x="1149.50" y="355.00" width="415.20" height="94.50" fill="#ffa581" /><rect x="1149.50" y="449.00" width="415.20" height="2.80" fill="#4a4d58" /><path d="M1118 454.2L1149.5 451.6H1277V455.3H1118Z" fill="#0a3a12"/><path d="M1437 451.6H1566L1612 455.6H1437Z" fill="#0a3a12"/><rect x="1153.00" y="452.40" width="27.00" height="0.90" fill="#b8c8b8" /><rect x="1220.00" y="452.40" width="27.00" height="0.90" fill="#b8c8b8" /><rect x="1440.00" y="452.40" width="30.00" height="0.90" fill="#b8c8b8" /><rect x="1500.00" y="452.40" width="30.00" height="0.90" fill="#b8c8b8" /><rect x="1243.60" y="346.10" width="61.90" height="9.00" fill="#ffa581" /><rect x="1305.50" y="349.00" width="6.00" height="6.00" fill="#ffa581" /><rect x="1311.50" y="344.70" width="30.00" height="10.50" fill="#ffa581" /><rect x="1341.40" y="347.80" width="72.00" height="7.40" fill="#ffa581" /><rect x="1413.40" y="346.10" width="61.10" height="9.00" fill="#ffa581" /><rect x="1346.20" y="347.80" width="10.80" height="7.40" fill="#555867" /><rect x="1363.00" y="347.80" width="10.80" height="7.40" fill="#555867" /><rect x="1378.60" y="347.80" width="9.60" height="7.40" fill="#555867" /><rect x="1273.00" y="347.00" width="12.00" height="8.00" fill="#d8d8d8" /><rect x="1276.00" y="347.00" width="1.20" height="8.00" fill="#888" /><rect x="1280.00" y="347.00" width="1.20" height="8.00" fill="#888" /><rect x="1439.30" y="347.00" width="11.20" height="8.00" fill="#d8d8d8" /><rect x="1443.00" y="347.00" width="1.20" height="8.00" fill="#888" /><rect x="1149.50" y="353.60" width="415.20" height="1.60" fill="#6a6a6a" /><line x1="1211.90" y1="335.50" x2="1211.90" y2="354.00" stroke="#6c6c6c" stroke-width="0.9" /><line x1="1218.00" y1="335.00" x2="1218.00" y2="354.00" stroke="#6c6c6c" stroke-width="0.9" /><line x1="1235.40" y1="343.50" x2="1235.40" y2="354.00" stroke="#6c6c6c" stroke-width="0.9" /><line x1="1267.80" y1="334.00" x2="1267.80" y2="354.00" stroke="#6c6c6c" stroke-width="0.9" /><line x1="1282.70" y1="338.00" x2="1282.70" y2="354.00" stroke="#6c6c6c" stroke-width="0.9" /><line x1="1285.60" y1="334.50" x2="1285.60" y2="354.00" stroke="#6c6c6c" stroke-width="0.9" /><line x1="1321.50" y1="331.50" x2="1321.50" y2="354.00" stroke="#6c6c6c" stroke-width="0.9" /><line x1="1384.60" y1="331.50" x2="1384.60" y2="354.00" stroke="#6c6c6c" stroke-width="0.9" /><line x1="1431.40" y1="334.00" x2="1431.40" y2="354.00" stroke="#6c6c6c" stroke-width="0.9" /><line x1="1433.80" y1="336.00" x2="1433.80" y2="354.00" stroke="#6c6c6c" stroke-width="0.9" /><line x1="1443.40" y1="331.50" x2="1443.40" y2="354.00" stroke="#6c6c6c" stroke-width="0.9" /><line x1="1478.10" y1="340.00" x2="1478.10" y2="354.00" stroke="#6c6c6c" stroke-width="0.9" /><line x1="1481.20" y1="335.00" x2="1481.20" y2="354.00" stroke="#6c6c6c" stroke-width="0.9" /><line x1="1502.60" y1="331.50" x2="1502.60" y2="354.00" stroke="#6c6c6c" stroke-width="0.9" /><ellipse cx="1298.5" cy="343.6" rx="3.2" ry="1.6" fill="#c8cce0"/><rect x="1200" y="349" width="6" height="5" fill="#9a9a9a"/><rect x="1508" y="349" width="6" height="5" fill="#9a9a9a"/><rect x="1149.50" y="389.80" width="415.20" height="4.50" fill="#fdfdfd" /><rect x="1149.50" y="418.40" width="415.20" height="4.70" fill="#fdfdfd" /><line x1="1208.00" y1="355.00" x2="1208.00" y2="449.00" stroke="#a8604a" stroke-width="0.9" /><line x1="1222.40" y1="355.00" x2="1222.40" y2="449.00" stroke="#a8604a" stroke-width="0.9" /><line x1="1228.30" y1="355.00" x2="1228.30" y2="449.00" stroke="#a8604a" stroke-width="0.9" /><line x1="1235.90" y1="355.00" x2="1235.90" y2="449.00" stroke="#a8604a" stroke-width="0.9" /><line x1="1241.70" y1="355.00" x2="1241.70" y2="449.00" stroke="#a8604a" stroke-width="0.9" /><line x1="1256.70" y1="355.00" x2="1256.70" y2="449.00" stroke="#a8604a" stroke-width="0.9" /><line x1="1262.80" y1="355.00" x2="1262.80" y2="449.00" stroke="#a8604a" stroke-width="0.9" /><line x1="1270.20" y1="355.00" x2="1270.20" y2="449.00" stroke="#a8604a" stroke-width="0.9" /><line x1="1289.70" y1="355.00" x2="1289.70" y2="449.00" stroke="#a8604a" stroke-width="0.9" /><line x1="1304.00" y1="355.00" x2="1304.00" y2="449.00" stroke="#a8604a" stroke-width="0.9" /><line x1="1310.50" y1="355.00" x2="1310.50" y2="449.00" stroke="#a8604a" stroke-width="0.9" /><line x1="1317.40" y1="355.00" x2="1317.40" y2="449.00" stroke="#a8604a" stroke-width="0.9" /><line x1="1323.80" y1="355.00" x2="1323.80" y2="449.00" stroke="#a8604a" stroke-width="0.9" /><line x1="1338.40" y1="355.00" x2="1338.40" y2="449.00" stroke="#a8604a" stroke-width="0.9" /><line x1="1344.70" y1="355.00" x2="1344.70" y2="449.00" stroke="#a8604a" stroke-width="0.9" /><line x1="1351.60" y1="355.00" x2="1351.60" y2="449.00" stroke="#a8604a" stroke-width="0.9" /><line x1="1361.90" y1="355.00" x2="1361.90" y2="449.00" stroke="#a8604a" stroke-width="0.9" /><line x1="1368.80" y1="355.00" x2="1368.80" y2="449.00" stroke="#a8604a" stroke-width="0.9" /><line x1="1375.00" y1="355.00" x2="1375.00" y2="449.00" stroke="#a8604a" stroke-width="0.9" /><line x1="1389.50" y1="355.00" x2="1389.50" y2="449.00" stroke="#a8604a" stroke-width="0.9" /><line x1="1396.00" y1="355.00" x2="1396.00" y2="449.00" stroke="#a8604a" stroke-width="0.9" /><line x1="1403.00" y1="355.00" x2="1403.00" y2="449.00" stroke="#a8604a" stroke-width="0.9" /><line x1="1409.30" y1="355.00" x2="1409.30" y2="449.00" stroke="#a8604a" stroke-width="0.9" /><line x1="1423.80" y1="355.00" x2="1423.80" y2="449.00" stroke="#a8604a" stroke-width="0.9" /><line x1="1443.60" y1="355.00" x2="1443.60" y2="449.00" stroke="#a8604a" stroke-width="0.9" /><line x1="1450.30" y1="355.00" x2="1450.30" y2="449.00" stroke="#a8604a" stroke-width="0.9" /><line x1="1456.90" y1="355.00" x2="1456.90" y2="449.00" stroke="#a8604a" stroke-width="0.9" /><line x1="1471.20" y1="355.00" x2="1471.20" y2="449.00" stroke="#a8604a" stroke-width="0.9" /><line x1="1478.00" y1="355.00" x2="1478.00" y2="449.00" stroke="#a8604a" stroke-width="0.9" /><line x1="1484.50" y1="355.00" x2="1484.50" y2="449.00" stroke="#a8604a" stroke-width="0.9" /><line x1="1491.40" y1="355.00" x2="1491.40" y2="449.00" stroke="#a8604a" stroke-width="0.9" /><line x1="1505.70" y1="355.00" x2="1505.70" y2="449.00" stroke="#a8604a" stroke-width="0.9" /><rect x="1149.50" y="389.80" width="415.20" height="4.50" fill="#fdfdfd" /><rect x="1149.50" y="418.40" width="415.20" height="4.70" fill="#fdfdfd" /><rect x="1208.00" y="370.00" width="14.40" height="20.00" fill="#3d404c" /><rect x="1209.00" y="371.60" width="12.40" height="2.20" fill="#c8c8c8" /><rect x="1209.00" y="375.40" width="5.70" height="11.40" fill="#a3a3a6" /><rect x="1215.70" y="375.40" width="5.70" height="11.40" fill="#b8b8b8" /><rect x="1208.00" y="398.60" width="14.40" height="19.80" fill="#3d404c" /><rect x="1209.00" y="400.20" width="12.40" height="2.20" fill="#c8c8c8" /><rect x="1209.00" y="404.00" width="5.70" height="11.20" fill="#a3a3a6" /><rect x="1215.70" y="404.00" width="5.70" height="11.20" fill="#b8b8b8" /><rect x="1208.00" y="424.00" width="14.40" height="24.00" fill="#3d404c" /><rect x="1209.00" y="425.60" width="12.40" height="2.20" fill="#c8c8c8" /><rect x="1209.00" y="429.40" width="5.70" height="15.40" fill="#a3a3a6" /><rect x="1215.70" y="429.40" width="5.70" height="15.40" fill="#b8b8b8" /><rect x="1208.00" y="394.30" width="14.40" height="2.00" fill="#e79a78" /><rect x="1228.30" y="370.00" width="7.60" height="20.00" fill="#3d404c" /><rect x="1229.30" y="371.60" width="5.60" height="2.20" fill="#c8c8c8" /><rect x="1229.30" y="375.40" width="5.60" height="11.40" fill="#a3a3a6" /><rect x="1228.30" y="398.60" width="7.60" height="19.80" fill="#3d404c" /><rect x="1229.30" y="400.20" width="5.60" height="2.20" fill="#c8c8c8" /><rect x="1229.30" y="404.00" width="5.60" height="11.20" fill="#a3a3a6" /><rect x="1228.30" y="424.00" width="7.60" height="24.00" fill="#3d404c" /><rect x="1229.30" y="425.60" width="5.60" height="2.20" fill="#c8c8c8" /><rect x="1229.30" y="429.40" width="5.60" height="15.40" fill="#a3a3a6" /><rect x="1228.30" y="394.30" width="7.60" height="2.00" fill="#e79a78" /><rect x="1241.70" y="370.00" width="15.00" height="20.00" fill="#3d404c" /><rect x="1242.70" y="371.60" width="13.00" height="2.20" fill="#c8c8c8" /><rect x="1242.70" y="375.40" width="6.00" height="11.40" fill="#a3a3a6" /><rect x="1249.70" y="375.40" width="6.00" height="11.40" fill="#b8b8b8" /><rect x="1241.70" y="398.60" width="15.00" height="19.80" fill="#3d404c" /><rect x="1242.70" y="400.20" width="13.00" height="2.20" fill="#c8c8c8" /><rect x="1242.70" y="404.00" width="6.00" height="11.20" fill="#a3a3a6" /><rect x="1249.70" y="404.00" width="6.00" height="11.20" fill="#b8b8b8" /><rect x="1241.70" y="424.00" width="15.00" height="24.00" fill="#3d404c" /><rect x="1242.70" y="425.60" width="13.00" height="2.20" fill="#c8c8c8" /><rect x="1242.70" y="429.40" width="6.00" height="15.40" fill="#a3a3a6" /><rect x="1249.70" y="429.40" width="6.00" height="15.40" fill="#b8b8b8" /><rect x="1241.70" y="394.30" width="15.00" height="2.00" fill="#e79a78" /><rect x="1262.80" y="370.00" width="7.40" height="20.00" fill="#3d404c" /><rect x="1263.80" y="371.60" width="5.40" height="2.20" fill="#c8c8c8" /><rect x="1263.80" y="375.40" width="5.40" height="11.40" fill="#a3a3a6" /><rect x="1262.80" y="398.60" width="7.40" height="19.80" fill="#3d404c" /><rect x="1263.80" y="400.20" width="5.40" height="2.20" fill="#c8c8c8" /><rect x="1263.80" y="404.00" width="5.40" height="11.20" fill="#a3a3a6" /><rect x="1262.80" y="424.00" width="7.40" height="24.00" fill="#3d404c" /><rect x="1263.80" y="425.60" width="5.40" height="2.20" fill="#c8c8c8" /><rect x="1263.80" y="429.40" width="5.40" height="15.40" fill="#a3a3a6" /><rect x="1262.80" y="394.30" width="7.40" height="2.00" fill="#e79a78" /><rect x="1289.70" y="370.00" width="14.30" height="20.00" fill="#3d404c" /><rect x="1290.70" y="371.60" width="12.30" height="2.20" fill="#c8c8c8" /><rect x="1290.70" y="375.40" width="5.65" height="11.40" fill="#a3a3a6" /><rect x="1297.35" y="375.40" width="5.65" height="11.40" fill="#b8b8b8" /><rect x="1289.70" y="398.60" width="14.30" height="19.80" fill="#3d404c" /><rect x="1290.70" y="400.20" width="12.30" height="2.20" fill="#c8c8c8" /><rect x="1290.70" y="404.00" width="5.65" height="11.20" fill="#a3a3a6" /><rect x="1297.35" y="404.00" width="5.65" height="11.20" fill="#b8b8b8" /><rect x="1289.70" y="394.30" width="14.30" height="2.00" fill="#e79a78" /><rect x="1310.50" y="355.00" width="6.90" height="15.00" fill="#535563" /><rect x="1310.50" y="370.00" width="6.90" height="20.00" fill="#3d404c" /><rect x="1311.50" y="371.60" width="4.90" height="2.20" fill="#c8c8c8" /><rect x="1311.50" y="375.40" width="4.90" height="11.40" fill="#a3a3a6" /><rect x="1310.50" y="398.60" width="6.90" height="19.80" fill="#3d404c" /><rect x="1311.50" y="400.20" width="4.90" height="2.20" fill="#c8c8c8" /><rect x="1311.50" y="404.00" width="4.90" height="11.20" fill="#a3a3a6" /><rect x="1310.50" y="394.30" width="6.90" height="2.00" fill="#e79a78" /><rect x="1323.80" y="370.00" width="14.60" height="20.00" fill="#3d404c" /><rect x="1324.80" y="371.60" width="12.60" height="2.20" fill="#c8c8c8" /><rect x="1324.80" y="375.40" width="5.80" height="11.40" fill="#a3a3a6" /><rect x="1331.60" y="375.40" width="5.80" height="11.40" fill="#b8b8b8" /><rect x="1323.80" y="398.60" width="14.60" height="19.80" fill="#3d404c" /><rect x="1324.80" y="400.20" width="12.60" height="2.20" fill="#c8c8c8" /><rect x="1324.80" y="404.00" width="5.80" height="11.20" fill="#a3a3a6" /><rect x="1331.60" y="404.00" width="5.80" height="11.20" fill="#b8b8b8" /><rect x="1323.80" y="394.30" width="14.60" height="2.00" fill="#e79a78" /><rect x="1344.70" y="370.00" width="6.90" height="20.00" fill="#3d404c" /><rect x="1345.70" y="371.60" width="4.90" height="2.20" fill="#c8c8c8" /><rect x="1345.70" y="375.40" width="4.90" height="11.40" fill="#a3a3a6" /><rect x="1344.70" y="398.60" width="6.90" height="19.80" fill="#3d404c" /><rect x="1345.70" y="400.20" width="4.90" height="2.20" fill="#c8c8c8" /><rect x="1345.70" y="404.00" width="4.90" height="11.20" fill="#a3a3a6" /><rect x="1344.70" y="394.30" width="6.90" height="2.00" fill="#e79a78" /><rect x="1361.90" y="355.00" width="6.90" height="15.00" fill="#535563" /><rect x="1361.90" y="370.00" width="6.90" height="20.00" fill="#3d404c" /><rect x="1362.90" y="371.60" width="4.90" height="2.20" fill="#c8c8c8" /><rect x="1362.90" y="375.40" width="4.90" height="11.40" fill="#a3a3a6" /><rect x="1361.90" y="398.60" width="6.90" height="19.80" fill="#3d404c" /><rect x="1362.90" y="400.20" width="4.90" height="2.20" fill="#c8c8c8" /><rect x="1362.90" y="404.00" width="4.90" height="11.20" fill="#a3a3a6" /><rect x="1361.90" y="394.30" width="6.90" height="2.00" fill="#e79a78" /><rect x="1375.00" y="370.00" width="14.50" height="20.00" fill="#3d404c" /><rect x="1376.00" y="371.60" width="12.50" height="2.20" fill="#c8c8c8" /><rect x="1376.00" y="375.40" width="5.75" height="11.40" fill="#a3a3a6" /><rect x="1382.75" y="375.40" width="5.75" height="11.40" fill="#b8b8b8" /><rect x="1375.00" y="398.60" width="14.50" height="19.80" fill="#3d404c" /><rect x="1376.00" y="400.20" width="12.50" height="2.20" fill="#c8c8c8" /><rect x="1376.00" y="404.00" width="5.75" height="11.20" fill="#a3a3a6" /><rect x="1382.75" y="404.00" width="5.75" height="11.20" fill="#b8b8b8" /><rect x="1375.00" y="394.30" width="14.50" height="2.00" fill="#e79a78" /><rect x="1396.00" y="370.00" width="7.00" height="20.00" fill="#3d404c" /><rect x="1397.00" y="371.60" width="5.00" height="2.20" fill="#c8c8c8" /><rect x="1397.00" y="375.40" width="5.00" height="11.40" fill="#a3a3a6" /><rect x="1396.00" y="398.60" width="7.00" height="19.80" fill="#3d404c" /><rect x="1397.00" y="400.20" width="5.00" height="2.20" fill="#c8c8c8" /><rect x="1397.00" y="404.00" width="5.00" height="11.20" fill="#a3a3a6" /><rect x="1396.00" y="394.30" width="7.00" height="2.00" fill="#e79a78" /><rect x="1409.30" y="355.00" width="14.50" height="15.00" fill="#535563" /><rect x="1409.30" y="370.00" width="14.50" height="20.00" fill="#3d404c" /><rect x="1410.30" y="371.60" width="12.50" height="2.20" fill="#c8c8c8" /><rect x="1410.30" y="375.40" width="5.75" height="11.40" fill="#a3a3a6" /><rect x="1417.05" y="375.40" width="5.75" height="11.40" fill="#b8b8b8" /><rect x="1409.30" y="398.60" width="14.50" height="19.80" fill="#3d404c" /><rect x="1410.30" y="400.20" width="12.50" height="2.20" fill="#c8c8c8" /><rect x="1410.30" y="404.00" width="5.75" height="11.20" fill="#a3a3a6" /><rect x="1417.05" y="404.00" width="5.75" height="11.20" fill="#b8b8b8" /><rect x="1409.30" y="394.30" width="14.50" height="2.00" fill="#e79a78" /><rect x="1443.60" y="370.00" width="6.70" height="20.00" fill="#3d404c" /><rect x="1444.60" y="371.60" width="4.70" height="2.20" fill="#c8c8c8" /><rect x="1444.60" y="375.40" width="4.70" height="11.40" fill="#a3a3a6" /><rect x="1443.60" y="398.60" width="6.70" height="19.80" fill="#3d404c" /><rect x="1444.60" y="400.20" width="4.70" height="2.20" fill="#c8c8c8" /><rect x="1444.60" y="404.00" width="4.70" height="11.20" fill="#a3a3a6" /><rect x="1443.60" y="424.00" width="6.70" height="24.00" fill="#3d404c" /><rect x="1444.60" y="425.60" width="4.70" height="2.20" fill="#c8c8c8" /><rect x="1444.60" y="429.40" width="4.70" height="15.40" fill="#a3a3a6" /><rect x="1443.60" y="394.30" width="6.70" height="2.00" fill="#e79a78" /><rect x="1456.90" y="355.00" width="14.30" height="15.00" fill="#535563" /><rect x="1456.90" y="370.00" width="14.30" height="20.00" fill="#3d404c" /><rect x="1457.90" y="371.60" width="12.30" height="2.20" fill="#c8c8c8" /><rect x="1457.90" y="375.40" width="5.65" height="11.40" fill="#a3a3a6" /><rect x="1464.55" y="375.40" width="5.65" height="11.40" fill="#b8b8b8" /><rect x="1456.90" y="398.60" width="14.30" height="19.80" fill="#3d404c" /><rect x="1457.90" y="400.20" width="12.30" height="2.20" fill="#c8c8c8" /><rect x="1457.90" y="404.00" width="5.65" height="11.20" fill="#a3a3a6" /><rect x="1464.55" y="404.00" width="5.65" height="11.20" fill="#b8b8b8" /><rect x="1456.90" y="424.00" width="14.30" height="24.00" fill="#3d404c" /><rect x="1457.90" y="425.60" width="12.30" height="2.20" fill="#c8c8c8" /><rect x="1457.90" y="429.40" width="5.65" height="15.40" fill="#a3a3a6" /><rect x="1464.55" y="429.40" width="5.65" height="15.40" fill="#b8b8b8" /><rect x="1456.90" y="394.30" width="14.30" height="2.00" fill="#e79a78" /><rect x="1478.00" y="370.00" width="6.50" height="20.00" fill="#3d404c" /><rect x="1479.00" y="371.60" width="4.50" height="2.20" fill="#c8c8c8" /><rect x="1479.00" y="375.40" width="4.50" height="11.40" fill="#a3a3a6" /><rect x="1478.00" y="398.60" width="6.50" height="19.80" fill="#3d404c" /><rect x="1479.00" y="400.20" width="4.50" height="2.20" fill="#c8c8c8" /><rect x="1479.00" y="404.00" width="4.50" height="11.20" fill="#a3a3a6" /><rect x="1478.00" y="424.00" width="6.50" height="24.00" fill="#3d404c" /><rect x="1479.00" y="425.60" width="4.50" height="2.20" fill="#c8c8c8" /><rect x="1479.00" y="429.40" width="4.50" height="15.40" fill="#a3a3a6" /><rect x="1478.00" y="394.30" width="6.50" height="2.00" fill="#e79a78" /><rect x="1491.40" y="355.00" width="14.30" height="15.00" fill="#535563" /><rect x="1491.40" y="370.00" width="14.30" height="20.00" fill="#3d404c" /><rect x="1492.40" y="371.60" width="12.30" height="2.20" fill="#c8c8c8" /><rect x="1492.40" y="375.40" width="5.65" height="11.40" fill="#a3a3a6" /><rect x="1499.05" y="375.40" width="5.65" height="11.40" fill="#b8b8b8" /><rect x="1491.40" y="398.60" width="14.30" height="19.80" fill="#3d404c" /><rect x="1492.40" y="400.20" width="12.30" height="2.20" fill="#c8c8c8" /><rect x="1492.40" y="404.00" width="5.65" height="11.20" fill="#a3a3a6" /><rect x="1499.05" y="404.00" width="5.65" height="11.20" fill="#b8b8b8" /><rect x="1491.40" y="424.00" width="14.30" height="24.00" fill="#3d404c" /><rect x="1492.40" y="425.60" width="12.30" height="2.20" fill="#c8c8c8" /><rect x="1492.40" y="429.40" width="5.65" height="15.40" fill="#a3a3a6" /><rect x="1499.05" y="429.40" width="5.65" height="15.40" fill="#b8b8b8" /><rect x="1491.40" y="394.30" width="14.30" height="2.00" fill="#e79a78" /><rect x="1277.80" y="417.60" width="157.00" height="38.60" fill="#ffffff" /><rect x="1282.00" y="426.50" width="45.80" height="28.00" fill="#a9a9ab" /><rect x="1282.00" y="438.60" width="45.80" height="15.60" fill="#9b9b9e" /><rect x="1282.00" y="426.50" width="45.80" height="1.40" fill="#3d404c" /><rect x="1282.00" y="453.20" width="45.80" height="1.40" fill="#3d404c" /><rect x="1282.00" y="432.60" width="45.80" height="1.10" fill="#3d404c" /><rect x="1282.00" y="437.80" width="45.80" height="1.10" fill="#3d404c" /><rect x="1282.00" y="426.50" width="1.30" height="28.00" fill="#3d404c" /><rect x="1300.32" y="426.50" width="1.30" height="28.00" fill="#3d404c" /><rect x="1303.53" y="426.50" width="1.30" height="28.00" fill="#3d404c" /><rect x="1326.43" y="426.50" width="1.30" height="28.00" fill="#3d404c" /><rect x="1285.00" y="441.00" width="13.74" height="8.00" fill="#b8b8ba" /><rect x="1307.19" y="442.00" width="13.74" height="7.00" fill="#b0b0b2" /><rect x="1334.70" y="426.50" width="43.10" height="28.00" fill="#a9a9ab" /><rect x="1334.70" y="438.60" width="43.10" height="15.60" fill="#9b9b9e" /><rect x="1334.70" y="426.50" width="43.10" height="1.40" fill="#3d404c" /><rect x="1334.70" y="453.20" width="43.10" height="1.40" fill="#3d404c" /><rect x="1334.70" y="432.60" width="43.10" height="1.10" fill="#3d404c" /><rect x="1334.70" y="437.80" width="43.10" height="1.10" fill="#3d404c" /><rect x="1334.70" y="426.50" width="1.30" height="28.00" fill="#3d404c" /><rect x="1351.94" y="426.50" width="1.30" height="28.00" fill="#3d404c" /><rect x="1354.96" y="426.50" width="1.30" height="28.00" fill="#3d404c" /><rect x="1376.51" y="426.50" width="1.30" height="28.00" fill="#3d404c" /><rect x="1337.70" y="441.00" width="12.93" height="8.00" fill="#b8b8ba" /><rect x="1358.40" y="442.00" width="12.93" height="7.00" fill="#b0b0b2" /><rect x="1383.80" y="426.50" width="46.20" height="28.00" fill="#a9a9ab" /><rect x="1383.80" y="438.60" width="46.20" height="15.60" fill="#9b9b9e" /><rect x="1383.80" y="426.50" width="46.20" height="1.40" fill="#3d404c" /><rect x="1383.80" y="453.20" width="46.20" height="1.40" fill="#3d404c" /><rect x="1383.80" y="432.60" width="46.20" height="1.10" fill="#3d404c" /><rect x="1383.80" y="437.80" width="46.20" height="1.10" fill="#3d404c" /><rect x="1383.80" y="426.50" width="1.30" height="28.00" fill="#3d404c" /><rect x="1402.28" y="426.50" width="1.30" height="28.00" fill="#3d404c" /><rect x="1405.51" y="426.50" width="1.30" height="28.00" fill="#3d404c" /><rect x="1428.61" y="426.50" width="1.30" height="28.00" fill="#3d404c" /><rect x="1386.80" y="441.00" width="13.86" height="8.00" fill="#b8b8ba" /><rect x="1409.21" y="442.00" width="13.86" height="7.00" fill="#b0b0b2" /><rect x="1292.00" y="451.00" width="2.40" height="4.00" fill="#f4f4f4" /><rect x="1316.00" y="451.00" width="2.40" height="4.00" fill="#f4f4f4" /><rect x="1344.00" y="451.00" width="2.40" height="4.00" fill="#f4f4f4" /><rect x="1364.00" y="451.00" width="2.40" height="4.00" fill="#f4f4f4" /><rect x="1404.00" y="451.00" width="2.40" height="4.00" fill="#f4f4f4" /><rect x="1426.00" y="451.00" width="2.40" height="4.00" fill="#f4f4f4" /><line x1="1276.00" y1="356.00" x2="1276.00" y2="449.00" stroke="#555" stroke-width="1.2" /><line x1="1437.00" y1="356.00" x2="1437.00" y2="449.00" stroke="#555" stroke-width="1.2" /><line x1="1566.00" y1="440.00" x2="1566.00" y2="453.50" stroke="#1030ff" stroke-width="1.6" /><line x1="1566.00" y1="453.80" x2="1581.50" y2="453.80" stroke="#e01010" stroke-width="1.6" /><circle cx="1564.4" cy="453.4" r="1.3" fill="#20d020"/><path d="M1037 682V662" stroke="#1414ff" stroke-width="3"/><path d="M1033.6 664L1037 655L1040.4 664Z" fill="#1414ff"/><path d="M1037 682H1058" stroke="#ff1010" stroke-width="3"/><path d="M1057 678.4L1064 682L1057 685.6Z" fill="#ff1010"/><circle cx="1037" cy="681.7" r="4.4" fill="#bdbdbd"/><circle cx="1035.6" cy="680.2" r="0.7" fill="#fff"/><text x="1039.8" y="649.4" font-size="9.4" font-weight="bold" fill="#1a1aff" text-anchor="middle" font-family="Liberation Sans">Z</text><text x="1072.8" y="682.2" font-size="8.2" fill="#ff1414" text-anchor="middle" font-family="Liberation Sans">X</text></svg><div class="a" style="left:987px;top:37px;width:32px;height:32px;background:#555"></div><svg class="i" style="left:987px;top:37px" width="32" height="32" viewBox="0 0 32 32" ><path d="M4.6 12.4V4.6H12.2M19.8 4.6H27.4V12.4M27.4 19.6V27.4H19.8M12.2 27.4H4.6V19.6" fill="none" stroke="#e0e0e0" stroke-width="1.3"/><path d="M16 9.2L21.8 12.6V19.4L16 22.8L10.2 19.4V12.6Z" fill="#e0e0e0"/></svg><div class="a" style="left:1688px;top:79px;width:66px;height:66px;background:#fff;box-shadow:0 0 1px #888"></div><div class="t" style="left:1641px;top:102.4px;width:160px;text-align:center;font-size:23px;color:#3c3c3c;transform:scaleX(0.41);transform-origin:50% 0">Спереди</div><div class="a" style="left:1796px;top:37px;width:36px;height:773px;background:#555;box-shadow:inset 1px 1px 0 #5a5a5a"></div><div class="a" style="left:1796px;top:129px;width:36px;height:1px;background:#0a0a0a"></div><div class="a" style="left:1796px;top:354px;width:36px;height:1px;background:#0a0a0a"></div><div class="a" style="left:1796px;top:403px;width:36px;height:1px;background:#0a0a0a"></div><div class="a" style="left:1796px;top:584px;width:36px;height:1px;background:#0a0a0a"></div><div class="a" style="left:1796px;top:677px;width:36px;height:1px;background:#0a0a0a"></div><svg class="i" style="left:1796px;top:37px" width="36" height="773" viewBox="1796 37 36 773"><g fill="none" stroke="#e0e0e0" stroke-width="1.5" stroke-linejoin="round" stroke-linecap="round"><path d="M1809.6 66.4Q1802.4 66.4 1802.4 60.4Q1802.6 55.4 1807.6 54.8Q1809 50.2 1814.2 50.2Q1819.4 50.2 1820.6 54.8Q1826 55.4 1826 60.6Q1825.6 66.4 1819 66.4"/><path d="M1814.2 55.6V71.6M1814.2 62.4L1809.4 59M1814.2 60.8L1817.2 58.4M1814.2 64.8L1818.6 61.4"/></g><path d="M1806.2 109.5H1801.4V92.6H1824.4V98.8M1806.2 109.5V112.2H1809.8" fill="none" stroke="#e0e0e0" stroke-width="1.3"/><path d="M1811.4 106.6V101.4H1817M1821.4 101.4H1826.8V106.6M1826.8 112.4V117.6H1821.4M1817 117.6H1811.4V112.4" fill="none" stroke="#e0e0e0" stroke-width="1.3"/><path d="M1818.8 104.7L1823.1 107.1V112.1L1818.8 114.5L1814.5 112.1V107.1Z" fill="#e0e0e0"/><rect x="1801.4" y="149.4" width="25" height="7.4" fill="none" stroke="#e0e0e0" stroke-width="1.4"/><rect x="1800.8" y="159.4" width="26.2" height="1.7" fill="#e0e0e0"/><line x1="1804.6" y1="153.79999999999998" x2="1804.6" y2="155.6" stroke="#e0e0e0" stroke-width="0.8"/><line x1="1807.3" y1="152.79999999999998" x2="1807.3" y2="155.6" stroke="#e0e0e0" stroke-width="0.8"/><line x1="1810.0" y1="153.79999999999998" x2="1810.0" y2="155.6" stroke="#e0e0e0" stroke-width="0.8"/><line x1="1812.7" y1="152.79999999999998" x2="1812.7" y2="155.6" stroke="#e0e0e0" stroke-width="0.8"/><line x1="1815.4" y1="153.79999999999998" x2="1815.4" y2="155.6" stroke="#e0e0e0" stroke-width="0.8"/><line x1="1818.1" y1="152.79999999999998" x2="1818.1" y2="155.6" stroke="#e0e0e0" stroke-width="0.8"/><line x1="1820.8" y1="153.79999999999998" x2="1820.8" y2="155.6" stroke="#e0e0e0" stroke-width="0.8"/><line x1="1823.5" y1="152.79999999999998" x2="1823.5" y2="155.6" stroke="#e0e0e0" stroke-width="0.8"/><path d="M1800.8 162.2L1804 165.6H1800.8Z" fill="#e0e0e0"/><path d="M1818.6 183.8V203.6L1809.3 211.9V192.2Z" fill="#e0e0e0"/><path d="M1800.6 200.5L1807 194.2H1827.2L1820.8 200.5Z" fill="none" stroke="#e0e0e0" stroke-width="1.3" stroke-linejoin="round"/><path d="M1810.8 235.2L1816.7 231.6V247.8L1810.8 251.8Z" fill="#e0e0e0"/><g fill="none" stroke="#e0e0e0" stroke-width="1.2"><path d="M1802.4 235.8H1818.7V252.5H1802.4Z"/><path d="M1809.3 231.3H1825.6V248.1H1809.3Z"/><path d="M1802.4 235.8L1809.3 231.3M1818.7 235.8L1825.6 231.3M1818.7 252.5L1825.6 248.1M1802.4 252.5L1809.3 248.1"/></g><path d="M1825.6 278H1827.8V297H1802V294.5H1825.6Z" fill="#e0e0e0"/><path d="M1804.6 275.8H1825.6V294.5H1800.6V279.8Z" fill="none" stroke="#e0e0e0" stroke-width="1.3"/><path d="M1800.6 279.8L1804.6 275.8V279.8Z" fill="#e0e0e0"/><path d="M1801 284.6H1825.2M1812.3 276.4V294" fill="none" stroke="#e0e0e0" stroke-width="1.1" stroke-dasharray="2.2 1.2"/><rect x="1818.7" y="291.8" width="6.9" height="2.7" fill="none" stroke="#e0e0e0" stroke-width="1"/><circle cx="1814" cy="330" r="7.6" fill="none" stroke="#e0e0e0" stroke-width="1.9"/><circle cx="1814" cy="330" r="4" fill="#e0e0e0"/><path d="M1814 319V322.4M1814 337.6V341M1803 330H1806.4M1821.6 330H1825" stroke="#e0e0e0" stroke-width="1.7"/><g stroke="#e0e0e0" stroke-width="1"><path d="M1799.2 382.9L1828.7 366.1M1799.2 392.6L1828.7 376.4M1800.1 376.7L1818.9 388M1809 371.1L1827.7 381.4"/></g><text x="1799.6" y="374.8" font-size="6" fill="#e0e0e0" font-family="Liberation Sans">1</text><text x="1808.6" y="368" font-size="6" fill="#e0e0e0" font-family="Liberation Sans">2</text><rect x="1802.6" y="416.7" width="23" height="23" fill="none" stroke="#e0e0e0" stroke-width="1.2" stroke-dasharray="1.6 1.4"/><g fill="none" stroke="#e0e0e0" stroke-width="1.2"><path d="M1814 422L1820 425.2V431.6L1814 434.8L1808 431.6V425.2Z"/><path d="M1808 425.2L1814 428.4L1820 425.2M1814 428.4V434.8"/></g><rect x="1802.6" y="460.7" width="23" height="23" fill="none" stroke="#e0e0e0" stroke-width="1.2" stroke-dasharray="1.6 1.4"/><path d="M1806 472Q1814 464 1822 472Q1814 480 1806 472Z" fill="#e0e0e0"/><circle cx="1814" cy="472" r="2.6" fill="none" stroke="#555" stroke-width="1.4"/><rect x="1802.6" y="504.7" width="23" height="23" fill="none" stroke="#e0e0e0" stroke-width="1.2" stroke-dasharray="1.6 1.4"/><path d="M1806 516Q1814 508 1822 516Q1814 524 1806 516Z" fill="#e0e0e0"/><circle cx="1814" cy="516" r="2.6" fill="none" stroke="#555" stroke-width="1.4"/><path d="M1807.6 508.6L1821 523" stroke="#555" stroke-width="2.4"/><path d="M1807 508.6L1821.6 523.6" stroke="#e0e0e0" stroke-width="1"/><rect x="1802.6" y="549.7" width="23" height="23" fill="none" stroke="#e0e0e0" stroke-width="1.2" stroke-dasharray="1.6 1.4"/><rect x="1812" y="558" width="16" height="15" fill="#e6e6e6"/><path d="M1816 561.4L1824 569.6M1824 561.4L1816 569.6" stroke="#444" stroke-width="1.2"/><rect x="1798" y="593" width="32" height="32" fill="#8a8a8a"/><rect x="1798" y="637" width="32" height="32" fill="#8a8a8a"/><path d="M1805.4 600.6L1812.6 598.6L1823.6 601.4V616.6L1814.8 620.4L1806.4 614.4Z" fill="#e0e0e0"/><path d="M1814.8 603.8V620.4M1805.4 600.6L1814.8 603.8L1823.6 601.4" fill="none" stroke="#8a8a8a" stroke-width="1.2"/><path d="M1814.8 603.8L1823.6 601.4V616.6L1814.8 620.4Z" fill="#b9b9b9"/><g fill="none" stroke="#e0e0e0" stroke-width="1.6"><ellipse cx="1814" cy="653" rx="11.2" ry="5.2"/><ellipse cx="1814" cy="653" rx="5.2" ry="10.6"/></g><path d="M1814 653V649M1814 653L1810.6 656M1814 653L1817.4 656" stroke="#e0e0e0" stroke-width="1"/></svg></body></html>
